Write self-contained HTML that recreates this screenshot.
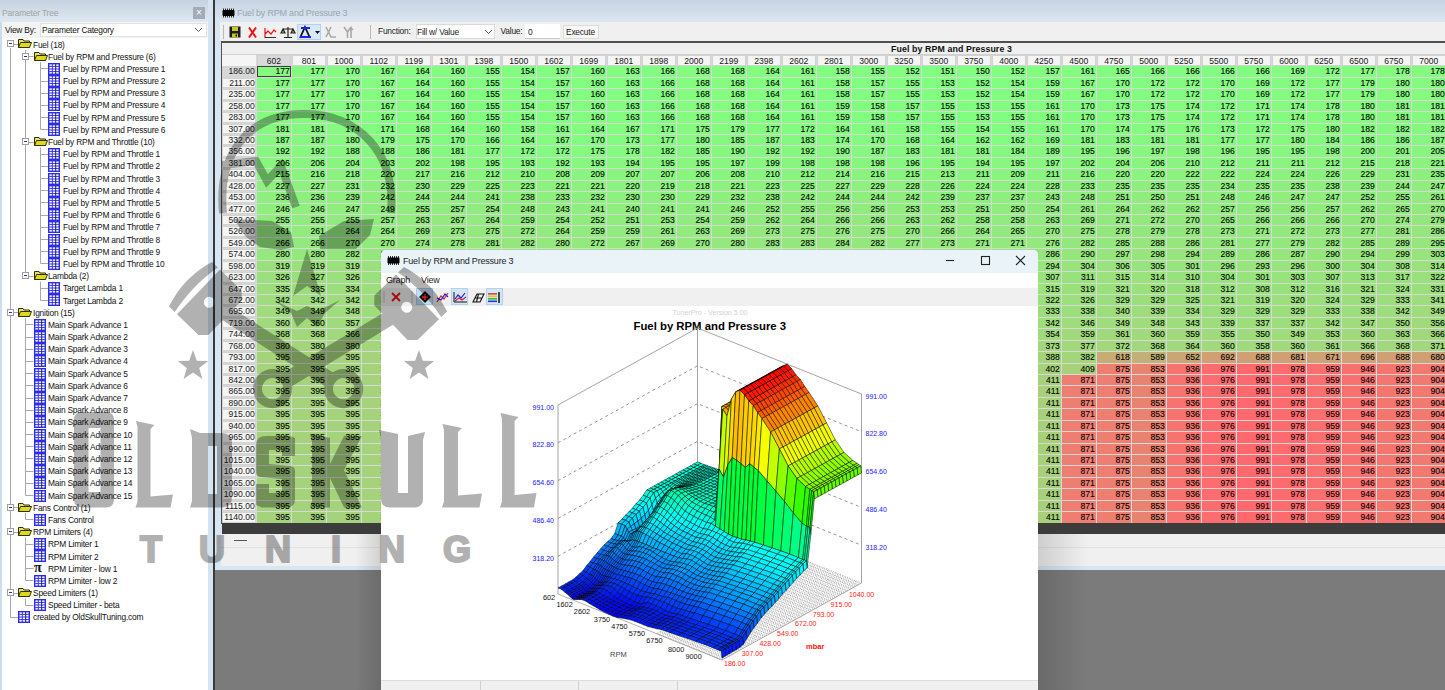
<!DOCTYPE html><html><head><meta charset="utf-8"><style>
*{margin:0;padding:0;box-sizing:border-box}
html,body{width:1445px;height:690px;overflow:hidden;background:#7b7b7b;font-family:"Liberation Sans",sans-serif;position:relative}
.a{position:absolute}
.t{position:absolute;white-space:nowrap;font-size:8.4px;letter-spacing:-0.2px;line-height:12px;color:#111}
#tree .t{height:12px}
.ic{position:absolute;width:11px;height:11px;background:#2c2cff;border:1px solid #2020e0}
.ic i{position:absolute;background:#fff}
.fd{position:absolute;width:13px;height:10px}
.ex{position:absolute;width:7px;height:7px;border:1px solid #a0a0a0;background:#fff}
.ex:after{content:"";position:absolute;left:1px;top:2px;width:3px;height:1px;background:#3030a0}
#tbl .r{position:absolute;left:0;height:11px;white-space:nowrap;font-size:0}
#tbl .r i{display:inline-block;font-style:normal;width:34px;height:100%;margin-right:1px;text-align:right;font-size:8.6px;line-height:11px;color:#000;padding-right:1px;vertical-align:top;-webkit-text-stroke:0.1px #000}
#tbl .h{background:#f5f5f5}

</style></head><body>
<div id="tree" class="a" style="left:0;top:0;width:208px;height:690px;background:#fff">
<div class="a" style="left:0;top:0;width:208px;height:22px;background:linear-gradient(#c6d2e0,#dfe8f2)"></div>
<div class="t" style="left:2px;top:7px;color:#a3a3a3;font-size:8.5px">Parameter Tree</div>
<div class="a" style="left:193px;top:7px;width:12px;height:12px;background:#a3abb6;color:#fff;font-size:10px;line-height:12px;text-align:center">&#215;</div>
<div class="a" style="left:0;top:22px;width:208px;height:16px;background:#f4f4f4"></div>
<div class="t" style="left:5px;top:24px">View By:</div>
<div class="a" style="left:40px;top:23px;width:167px;height:14px;background:#fff;border:1px solid #e2e2e2"></div>
<div class="t" style="left:42px;top:24px">Parameter Category</div>
<svg class="a" style="left:194px;top:27px" width="9" height="6"><path d="M1 1 L4.5 4.5 L8 1" stroke="#555" fill="none"/></svg>
<svg class="a" style="left:0;top:0" width="208" height="690"><g stroke="#a8a8a8" stroke-width="1" fill="none"><path d="M13.5 44.5 H18.5"/><path d="M28.5 56.5 H33.5"/><path d="M40.5 68.5 H48.5"/><path d="M40.5 81.5 H48.5"/><path d="M40.5 93.5 H48.5"/><path d="M40.5 105.5 H48.5"/><path d="M40.5 117.5 H48.5"/><path d="M40.5 129.5 H48.5"/><path d="M28.5 142.5 H33.5"/><path d="M40.5 154.5 H48.5"/><path d="M40.5 166.5 H48.5"/><path d="M40.5 178.5 H48.5"/><path d="M40.5 190.5 H48.5"/><path d="M40.5 202.5 H48.5"/><path d="M40.5 215.5 H48.5"/><path d="M40.5 227.5 H48.5"/><path d="M40.5 239.5 H48.5"/><path d="M40.5 251.5 H48.5"/><path d="M40.5 263.5 H48.5"/><path d="M28.5 276.5 H33.5"/><path d="M40.5 288.5 H48.5"/><path d="M40.5 300.5 H48.5"/><path d="M13.5 312.5 H18.5"/><path d="M25.5 324.5 H33.5"/><path d="M25.5 337.5 H33.5"/><path d="M25.5 349.5 H33.5"/><path d="M25.5 361.5 H33.5"/><path d="M25.5 373.5 H33.5"/><path d="M25.5 385.5 H33.5"/><path d="M25.5 398.5 H33.5"/><path d="M25.5 410.5 H33.5"/><path d="M25.5 422.5 H33.5"/><path d="M25.5 434.5 H33.5"/><path d="M25.5 446.5 H33.5"/><path d="M25.5 458.5 H33.5"/><path d="M25.5 471.5 H33.5"/><path d="M25.5 483.5 H33.5"/><path d="M25.5 495.5 H33.5"/><path d="M13.5 507.5 H18.5"/><path d="M25.5 519.5 H33.5"/><path d="M13.5 532.5 H18.5"/><path d="M25.5 544.5 H33.5"/><path d="M25.5 556.5 H33.5"/><path d="M25.5 568.5 H33.5"/><path d="M25.5 580.5 H33.5"/><path d="M13.5 593.5 H18.5"/><path d="M25.5 605.5 H33.5"/><path d="M10.5 617.5 H18.5"/><path d="M10.5 48.0 V617.5"/><path d="M25.5 50.0 V276.5"/><path d="M25.5 318.2 V495.5"/><path d="M25.5 513.2 V519.5"/><path d="M25.5 537.6 V580.5"/><path d="M25.5 598.5 V605.5"/><path d="M40.5 62.2 V129.5"/><path d="M40.5 147.5 V263.5"/><path d="M40.5 281.6 V300.5"/></g></svg>
<div class="ex" style="left:7px;top:40px"></div>
<svg class="a" style="left:18px;top:38px" width="14" height="11"><path d="M0.5 1.5 H5 L6 3 H11.5 V9.5 H0.5Z" fill="#e8e070" stroke="#303000"/><path d="M2.5 4.5 H13.5 L11.5 9.5 H0.5Z" fill="#e0d820" stroke="#303000"/></svg>
<div class="t" style="left:33.0px;top:38.5px">Fuel (18)</div>
<div class="ex" style="left:22px;top:53px"></div>
<svg class="a" style="left:34px;top:51px" width="14" height="11"><path d="M0.5 1.5 H5 L6 3 H11.5 V9.5 H0.5Z" fill="#e8e070" stroke="#303000"/><path d="M2.5 4.5 H13.5 L11.5 9.5 H0.5Z" fill="#e0d820" stroke="#303000"/></svg>
<div class="t" style="left:48.0px;top:50.7px">Fuel by RPM and Pressure (6)</div>
<svg class="a" style="left:48px;top:63px" width="12" height="12"><rect x="0.7" y="0.7" width="10.6" height="10.6" fill="#fff" stroke="#2a2af0" stroke-width="1.4"/><path d="M1 3.4H11M1 6H11M1 8.6H11M4.3 1V11" stroke="#3434f0" stroke-width="1"/><path d="M7.7 1V11" stroke="#202040" stroke-width="1"/></svg>
<div class="t" style="left:63.0px;top:62.9px">Fuel by RPM and Pressure 1</div>
<svg class="a" style="left:48px;top:75px" width="12" height="12"><rect x="0.7" y="0.7" width="10.6" height="10.6" fill="#fff" stroke="#2a2af0" stroke-width="1.4"/><path d="M1 3.4H11M1 6H11M1 8.6H11M4.3 1V11" stroke="#3434f0" stroke-width="1"/><path d="M7.7 1V11" stroke="#202040" stroke-width="1"/></svg>
<div class="t" style="left:63.0px;top:75.1px">Fuel by RPM and Pressure 2</div>
<svg class="a" style="left:48px;top:87px" width="12" height="12"><rect x="0.7" y="0.7" width="10.6" height="10.6" fill="#fff" stroke="#2a2af0" stroke-width="1.4"/><path d="M1 3.4H11M1 6H11M1 8.6H11M4.3 1V11" stroke="#3434f0" stroke-width="1"/><path d="M7.7 1V11" stroke="#202040" stroke-width="1"/></svg>
<div class="t" style="left:63.0px;top:87.3px">Fuel by RPM and Pressure 3</div>
<svg class="a" style="left:48px;top:99px" width="12" height="12"><rect x="0.7" y="0.7" width="10.6" height="10.6" fill="#fff" stroke="#2a2af0" stroke-width="1.4"/><path d="M1 3.4H11M1 6H11M1 8.6H11M4.3 1V11" stroke="#3434f0" stroke-width="1"/><path d="M7.7 1V11" stroke="#202040" stroke-width="1"/></svg>
<div class="t" style="left:63.0px;top:99.4px">Fuel by RPM and Pressure 4</div>
<svg class="a" style="left:48px;top:112px" width="12" height="12"><rect x="0.7" y="0.7" width="10.6" height="10.6" fill="#fff" stroke="#2a2af0" stroke-width="1.4"/><path d="M1 3.4H11M1 6H11M1 8.6H11M4.3 1V11" stroke="#3434f0" stroke-width="1"/><path d="M7.7 1V11" stroke="#202040" stroke-width="1"/></svg>
<div class="t" style="left:63.0px;top:111.6px">Fuel by RPM and Pressure 5</div>
<svg class="a" style="left:48px;top:124px" width="12" height="12"><rect x="0.7" y="0.7" width="10.6" height="10.6" fill="#fff" stroke="#2a2af0" stroke-width="1.4"/><path d="M1 3.4H11M1 6H11M1 8.6H11M4.3 1V11" stroke="#3434f0" stroke-width="1"/><path d="M7.7 1V11" stroke="#202040" stroke-width="1"/></svg>
<div class="t" style="left:63.0px;top:123.8px">Fuel by RPM and Pressure 6</div>
<div class="ex" style="left:22px;top:138px"></div>
<svg class="a" style="left:34px;top:136px" width="14" height="11"><path d="M0.5 1.5 H5 L6 3 H11.5 V9.5 H0.5Z" fill="#e8e070" stroke="#303000"/><path d="M2.5 4.5 H13.5 L11.5 9.5 H0.5Z" fill="#e0d820" stroke="#303000"/></svg>
<div class="t" style="left:48.0px;top:136.0px">Fuel by RPM and Throttle (10)</div>
<svg class="a" style="left:48px;top:148px" width="12" height="12"><rect x="0.7" y="0.7" width="10.6" height="10.6" fill="#fff" stroke="#2a2af0" stroke-width="1.4"/><path d="M1 3.4H11M1 6H11M1 8.6H11M4.3 1V11" stroke="#3434f0" stroke-width="1"/><path d="M7.7 1V11" stroke="#202040" stroke-width="1"/></svg>
<div class="t" style="left:63.0px;top:148.2px">Fuel by RPM and Throttle 1</div>
<svg class="a" style="left:48px;top:160px" width="12" height="12"><rect x="0.7" y="0.7" width="10.6" height="10.6" fill="#fff" stroke="#2a2af0" stroke-width="1.4"/><path d="M1 3.4H11M1 6H11M1 8.6H11M4.3 1V11" stroke="#3434f0" stroke-width="1"/><path d="M7.7 1V11" stroke="#202040" stroke-width="1"/></svg>
<div class="t" style="left:63.0px;top:160.4px">Fuel by RPM and Throttle 2</div>
<svg class="a" style="left:48px;top:173px" width="12" height="12"><rect x="0.7" y="0.7" width="10.6" height="10.6" fill="#fff" stroke="#2a2af0" stroke-width="1.4"/><path d="M1 3.4H11M1 6H11M1 8.6H11M4.3 1V11" stroke="#3434f0" stroke-width="1"/><path d="M7.7 1V11" stroke="#202040" stroke-width="1"/></svg>
<div class="t" style="left:63.0px;top:172.6px">Fuel by RPM and Throttle 3</div>
<svg class="a" style="left:48px;top:185px" width="12" height="12"><rect x="0.7" y="0.7" width="10.6" height="10.6" fill="#fff" stroke="#2a2af0" stroke-width="1.4"/><path d="M1 3.4H11M1 6H11M1 8.6H11M4.3 1V11" stroke="#3434f0" stroke-width="1"/><path d="M7.7 1V11" stroke="#202040" stroke-width="1"/></svg>
<div class="t" style="left:63.0px;top:184.8px">Fuel by RPM and Throttle 4</div>
<svg class="a" style="left:48px;top:197px" width="12" height="12"><rect x="0.7" y="0.7" width="10.6" height="10.6" fill="#fff" stroke="#2a2af0" stroke-width="1.4"/><path d="M1 3.4H11M1 6H11M1 8.6H11M4.3 1V11" stroke="#3434f0" stroke-width="1"/><path d="M7.7 1V11" stroke="#202040" stroke-width="1"/></svg>
<div class="t" style="left:63.0px;top:197.0px">Fuel by RPM and Throttle 5</div>
<svg class="a" style="left:48px;top:209px" width="12" height="12"><rect x="0.7" y="0.7" width="10.6" height="10.6" fill="#fff" stroke="#2a2af0" stroke-width="1.4"/><path d="M1 3.4H11M1 6H11M1 8.6H11M4.3 1V11" stroke="#3434f0" stroke-width="1"/><path d="M7.7 1V11" stroke="#202040" stroke-width="1"/></svg>
<div class="t" style="left:63.0px;top:209.2px">Fuel by RPM and Throttle 6</div>
<svg class="a" style="left:48px;top:221px" width="12" height="12"><rect x="0.7" y="0.7" width="10.6" height="10.6" fill="#fff" stroke="#2a2af0" stroke-width="1.4"/><path d="M1 3.4H11M1 6H11M1 8.6H11M4.3 1V11" stroke="#3434f0" stroke-width="1"/><path d="M7.7 1V11" stroke="#202040" stroke-width="1"/></svg>
<div class="t" style="left:63.0px;top:221.3px">Fuel by RPM and Throttle 7</div>
<svg class="a" style="left:48px;top:234px" width="12" height="12"><rect x="0.7" y="0.7" width="10.6" height="10.6" fill="#fff" stroke="#2a2af0" stroke-width="1.4"/><path d="M1 3.4H11M1 6H11M1 8.6H11M4.3 1V11" stroke="#3434f0" stroke-width="1"/><path d="M7.7 1V11" stroke="#202040" stroke-width="1"/></svg>
<div class="t" style="left:63.0px;top:233.5px">Fuel by RPM and Throttle 8</div>
<svg class="a" style="left:48px;top:246px" width="12" height="12"><rect x="0.7" y="0.7" width="10.6" height="10.6" fill="#fff" stroke="#2a2af0" stroke-width="1.4"/><path d="M1 3.4H11M1 6H11M1 8.6H11M4.3 1V11" stroke="#3434f0" stroke-width="1"/><path d="M7.7 1V11" stroke="#202040" stroke-width="1"/></svg>
<div class="t" style="left:63.0px;top:245.7px">Fuel by RPM and Throttle 9</div>
<svg class="a" style="left:48px;top:258px" width="12" height="12"><rect x="0.7" y="0.7" width="10.6" height="10.6" fill="#fff" stroke="#2a2af0" stroke-width="1.4"/><path d="M1 3.4H11M1 6H11M1 8.6H11M4.3 1V11" stroke="#3434f0" stroke-width="1"/><path d="M7.7 1V11" stroke="#202040" stroke-width="1"/></svg>
<div class="t" style="left:63.0px;top:257.9px">Fuel by RPM and Throttle 10</div>
<div class="ex" style="left:22px;top:272px"></div>
<svg class="a" style="left:34px;top:270px" width="14" height="11"><path d="M0.5 1.5 H5 L6 3 H11.5 V9.5 H0.5Z" fill="#e8e070" stroke="#303000"/><path d="M2.5 4.5 H13.5 L11.5 9.5 H0.5Z" fill="#e0d820" stroke="#303000"/></svg>
<div class="t" style="left:48.0px;top:270.1px">Lambda (2)</div>
<svg class="a" style="left:48px;top:282px" width="12" height="12"><rect x="0.7" y="0.7" width="10.6" height="10.6" fill="#fff" stroke="#2a2af0" stroke-width="1.4"/><path d="M1 3.4H11M1 6H11M1 8.6H11M4.3 1V11" stroke="#3434f0" stroke-width="1"/><path d="M7.7 1V11" stroke="#202040" stroke-width="1"/></svg>
<div class="t" style="left:63.0px;top:282.3px">Target Lambda 1</div>
<svg class="a" style="left:48px;top:294px" width="12" height="12"><rect x="0.7" y="0.7" width="10.6" height="10.6" fill="#fff" stroke="#2a2af0" stroke-width="1.4"/><path d="M1 3.4H11M1 6H11M1 8.6H11M4.3 1V11" stroke="#3434f0" stroke-width="1"/><path d="M7.7 1V11" stroke="#202040" stroke-width="1"/></svg>
<div class="t" style="left:63.0px;top:294.5px">Target Lambda 2</div>
<div class="ex" style="left:7px;top:309px"></div>
<svg class="a" style="left:18px;top:307px" width="14" height="11"><path d="M0.5 1.5 H5 L6 3 H11.5 V9.5 H0.5Z" fill="#e8e070" stroke="#303000"/><path d="M2.5 4.5 H13.5 L11.5 9.5 H0.5Z" fill="#e0d820" stroke="#303000"/></svg>
<div class="t" style="left:33.0px;top:306.7px">Ignition (15)</div>
<svg class="a" style="left:34px;top:319px" width="12" height="12"><rect x="0.7" y="0.7" width="10.6" height="10.6" fill="#fff" stroke="#2a2af0" stroke-width="1.4"/><path d="M1 3.4H11M1 6H11M1 8.6H11M4.3 1V11" stroke="#3434f0" stroke-width="1"/><path d="M7.7 1V11" stroke="#202040" stroke-width="1"/></svg>
<div class="t" style="left:48.0px;top:318.9px">Main Spark Advance 1</div>
<svg class="a" style="left:34px;top:331px" width="12" height="12"><rect x="0.7" y="0.7" width="10.6" height="10.6" fill="#fff" stroke="#2a2af0" stroke-width="1.4"/><path d="M1 3.4H11M1 6H11M1 8.6H11M4.3 1V11" stroke="#3434f0" stroke-width="1"/><path d="M7.7 1V11" stroke="#202040" stroke-width="1"/></svg>
<div class="t" style="left:48.0px;top:331.1px">Main Spark Advance 2</div>
<svg class="a" style="left:34px;top:343px" width="12" height="12"><rect x="0.7" y="0.7" width="10.6" height="10.6" fill="#fff" stroke="#2a2af0" stroke-width="1.4"/><path d="M1 3.4H11M1 6H11M1 8.6H11M4.3 1V11" stroke="#3434f0" stroke-width="1"/><path d="M7.7 1V11" stroke="#202040" stroke-width="1"/></svg>
<div class="t" style="left:48.0px;top:343.2px">Main Spark Advance 3</div>
<svg class="a" style="left:34px;top:355px" width="12" height="12"><rect x="0.7" y="0.7" width="10.6" height="10.6" fill="#fff" stroke="#2a2af0" stroke-width="1.4"/><path d="M1 3.4H11M1 6H11M1 8.6H11M4.3 1V11" stroke="#3434f0" stroke-width="1"/><path d="M7.7 1V11" stroke="#202040" stroke-width="1"/></svg>
<div class="t" style="left:48.0px;top:355.4px">Main Spark Advance 4</div>
<svg class="a" style="left:34px;top:368px" width="12" height="12"><rect x="0.7" y="0.7" width="10.6" height="10.6" fill="#fff" stroke="#2a2af0" stroke-width="1.4"/><path d="M1 3.4H11M1 6H11M1 8.6H11M4.3 1V11" stroke="#3434f0" stroke-width="1"/><path d="M7.7 1V11" stroke="#202040" stroke-width="1"/></svg>
<div class="t" style="left:48.0px;top:367.6px">Main Spark Advance 5</div>
<svg class="a" style="left:34px;top:380px" width="12" height="12"><rect x="0.7" y="0.7" width="10.6" height="10.6" fill="#fff" stroke="#2a2af0" stroke-width="1.4"/><path d="M1 3.4H11M1 6H11M1 8.6H11M4.3 1V11" stroke="#3434f0" stroke-width="1"/><path d="M7.7 1V11" stroke="#202040" stroke-width="1"/></svg>
<div class="t" style="left:48.0px;top:379.8px">Main Spark Advance 6</div>
<svg class="a" style="left:34px;top:392px" width="12" height="12"><rect x="0.7" y="0.7" width="10.6" height="10.6" fill="#fff" stroke="#2a2af0" stroke-width="1.4"/><path d="M1 3.4H11M1 6H11M1 8.6H11M4.3 1V11" stroke="#3434f0" stroke-width="1"/><path d="M7.7 1V11" stroke="#202040" stroke-width="1"/></svg>
<div class="t" style="left:48.0px;top:392.0px">Main Spark Advance 7</div>
<svg class="a" style="left:34px;top:404px" width="12" height="12"><rect x="0.7" y="0.7" width="10.6" height="10.6" fill="#fff" stroke="#2a2af0" stroke-width="1.4"/><path d="M1 3.4H11M1 6H11M1 8.6H11M4.3 1V11" stroke="#3434f0" stroke-width="1"/><path d="M7.7 1V11" stroke="#202040" stroke-width="1"/></svg>
<div class="t" style="left:48.0px;top:404.2px">Main Spark Advance 8</div>
<svg class="a" style="left:34px;top:416px" width="12" height="12"><rect x="0.7" y="0.7" width="10.6" height="10.6" fill="#fff" stroke="#2a2af0" stroke-width="1.4"/><path d="M1 3.4H11M1 6H11M1 8.6H11M4.3 1V11" stroke="#3434f0" stroke-width="1"/><path d="M7.7 1V11" stroke="#202040" stroke-width="1"/></svg>
<div class="t" style="left:48.0px;top:416.4px">Main Spark Advance 9</div>
<svg class="a" style="left:34px;top:429px" width="12" height="12"><rect x="0.7" y="0.7" width="10.6" height="10.6" fill="#fff" stroke="#2a2af0" stroke-width="1.4"/><path d="M1 3.4H11M1 6H11M1 8.6H11M4.3 1V11" stroke="#3434f0" stroke-width="1"/><path d="M7.7 1V11" stroke="#202040" stroke-width="1"/></svg>
<div class="t" style="left:48.0px;top:428.6px">Main Spark Advance 10</div>
<svg class="a" style="left:34px;top:441px" width="12" height="12"><rect x="0.7" y="0.7" width="10.6" height="10.6" fill="#fff" stroke="#2a2af0" stroke-width="1.4"/><path d="M1 3.4H11M1 6H11M1 8.6H11M4.3 1V11" stroke="#3434f0" stroke-width="1"/><path d="M7.7 1V11" stroke="#202040" stroke-width="1"/></svg>
<div class="t" style="left:48.0px;top:440.8px">Main Spark Advance 11</div>
<svg class="a" style="left:34px;top:453px" width="12" height="12"><rect x="0.7" y="0.7" width="10.6" height="10.6" fill="#fff" stroke="#2a2af0" stroke-width="1.4"/><path d="M1 3.4H11M1 6H11M1 8.6H11M4.3 1V11" stroke="#3434f0" stroke-width="1"/><path d="M7.7 1V11" stroke="#202040" stroke-width="1"/></svg>
<div class="t" style="left:48.0px;top:453.0px">Main Spark Advance 12</div>
<svg class="a" style="left:34px;top:465px" width="12" height="12"><rect x="0.7" y="0.7" width="10.6" height="10.6" fill="#fff" stroke="#2a2af0" stroke-width="1.4"/><path d="M1 3.4H11M1 6H11M1 8.6H11M4.3 1V11" stroke="#3434f0" stroke-width="1"/><path d="M7.7 1V11" stroke="#202040" stroke-width="1"/></svg>
<div class="t" style="left:48.0px;top:465.1px">Main Spark Advance 13</div>
<svg class="a" style="left:34px;top:477px" width="12" height="12"><rect x="0.7" y="0.7" width="10.6" height="10.6" fill="#fff" stroke="#2a2af0" stroke-width="1.4"/><path d="M1 3.4H11M1 6H11M1 8.6H11M4.3 1V11" stroke="#3434f0" stroke-width="1"/><path d="M7.7 1V11" stroke="#202040" stroke-width="1"/></svg>
<div class="t" style="left:48.0px;top:477.3px">Main Spark Advance 14</div>
<svg class="a" style="left:34px;top:490px" width="12" height="12"><rect x="0.7" y="0.7" width="10.6" height="10.6" fill="#fff" stroke="#2a2af0" stroke-width="1.4"/><path d="M1 3.4H11M1 6H11M1 8.6H11M4.3 1V11" stroke="#3434f0" stroke-width="1"/><path d="M7.7 1V11" stroke="#202040" stroke-width="1"/></svg>
<div class="t" style="left:48.0px;top:489.5px">Main Spark Advance 15</div>
<div class="ex" style="left:7px;top:504px"></div>
<svg class="a" style="left:18px;top:502px" width="14" height="11"><path d="M0.5 1.5 H5 L6 3 H11.5 V9.5 H0.5Z" fill="#e8e070" stroke="#303000"/><path d="M2.5 4.5 H13.5 L11.5 9.5 H0.5Z" fill="#e0d820" stroke="#303000"/></svg>
<div class="t" style="left:33.0px;top:501.7px">Fans Control (1)</div>
<svg class="a" style="left:34px;top:514px" width="12" height="12"><rect x="0.7" y="0.7" width="10.6" height="10.6" fill="#fff" stroke="#2a2af0" stroke-width="1.4"/><path d="M1 3.4H11M1 6H11M1 8.6H11M4.3 1V11" stroke="#3434f0" stroke-width="1"/><path d="M7.7 1V11" stroke="#202040" stroke-width="1"/></svg>
<div class="t" style="left:48.0px;top:513.9px">Fans Control</div>
<div class="ex" style="left:7px;top:528px"></div>
<svg class="a" style="left:18px;top:526px" width="14" height="11"><path d="M0.5 1.5 H5 L6 3 H11.5 V9.5 H0.5Z" fill="#e8e070" stroke="#303000"/><path d="M2.5 4.5 H13.5 L11.5 9.5 H0.5Z" fill="#e0d820" stroke="#303000"/></svg>
<div class="t" style="left:33.0px;top:526.1px">RPM Limiters (4)</div>
<svg class="a" style="left:34px;top:538px" width="12" height="12"><rect x="0.7" y="0.7" width="10.6" height="10.6" fill="#fff" stroke="#2a2af0" stroke-width="1.4"/><path d="M1 3.4H11M1 6H11M1 8.6H11M4.3 1V11" stroke="#3434f0" stroke-width="1"/><path d="M7.7 1V11" stroke="#202040" stroke-width="1"/></svg>
<div class="t" style="left:48.0px;top:538.3px">RPM Limiter 1</div>
<svg class="a" style="left:34px;top:550px" width="12" height="12"><rect x="0.7" y="0.7" width="10.6" height="10.6" fill="#fff" stroke="#2a2af0" stroke-width="1.4"/><path d="M1 3.4H11M1 6H11M1 8.6H11M4.3 1V11" stroke="#3434f0" stroke-width="1"/><path d="M7.7 1V11" stroke="#202040" stroke-width="1"/></svg>
<div class="t" style="left:48.0px;top:550.5px">RPM Limiter 2</div>
<div class="t" style="left:34px;top:562px;font-size:14px;font-family:'Liberation Serif';font-weight:bold;line-height:12px">&#960;</div>
<div class="t" style="left:48.0px;top:562.7px">RPM Limiter - low 1</div>
<svg class="a" style="left:34px;top:575px" width="12" height="12"><rect x="0.7" y="0.7" width="10.6" height="10.6" fill="#fff" stroke="#2a2af0" stroke-width="1.4"/><path d="M1 3.4H11M1 6H11M1 8.6H11M4.3 1V11" stroke="#3434f0" stroke-width="1"/><path d="M7.7 1V11" stroke="#202040" stroke-width="1"/></svg>
<div class="t" style="left:48.0px;top:574.9px">RPM Limiter - low 2</div>
<div class="ex" style="left:7px;top:589px"></div>
<svg class="a" style="left:18px;top:587px" width="14" height="11"><path d="M0.5 1.5 H5 L6 3 H11.5 V9.5 H0.5Z" fill="#e8e070" stroke="#303000"/><path d="M2.5 4.5 H13.5 L11.5 9.5 H0.5Z" fill="#e0d820" stroke="#303000"/></svg>
<div class="t" style="left:33.0px;top:587.0px">Speed Limiters (1)</div>
<svg class="a" style="left:34px;top:599px" width="12" height="12"><rect x="0.7" y="0.7" width="10.6" height="10.6" fill="#fff" stroke="#2a2af0" stroke-width="1.4"/><path d="M1 3.4H11M1 6H11M1 8.6H11M4.3 1V11" stroke="#3434f0" stroke-width="1"/><path d="M7.7 1V11" stroke="#202040" stroke-width="1"/></svg>
<div class="t" style="left:48.0px;top:599.2px">Speed Limiter - beta</div>
<svg class="a" style="left:18px;top:611px" width="12" height="12"><rect x="0.7" y="0.7" width="10.6" height="10.6" fill="#fff" stroke="#2a2af0" stroke-width="1.4"/><path d="M1 3.4H11M1 6H11M1 8.6H11M4.3 1V11" stroke="#3434f0" stroke-width="1"/><path d="M7.7 1V11" stroke="#202040" stroke-width="1"/></svg>
<div class="t" style="left:33.0px;top:611.4px">created by OldSkullTuning.com</div>
</div>
<div class="a" style="left:0;top:22px;width:1.6px;height:668px;background:#cddcea"></div>
<div class="a" style="left:208px;top:0;width:5px;height:690px;background:#d6e3f0"></div>
<div class="a" style="left:213px;top:0;width:1.6px;height:690px;background:#3a3a3a"></div>
<div class="a" style="left:214.6px;top:0;width:1230.4px;height:570px;background:#d9e6f2">
<div class="a" style="left:0;top:0;width:100%;height:22px;background:linear-gradient(#c6d3e1,#dbe6f1)"></div>
</div>
<svg class="a" style="left:222px;top:8px" width="13" height="10"><rect x="0.5" y="2" width="12" height="6" rx="1" fill="#000"/><path d="M1.5 0.5V9.5M3.5 0.5V9.5M5.5 0.5V9.5M7.5 0.5V9.5M9.5 0.5V9.5M11.5 0.5V9.5" stroke="#000" stroke-width="0.8"/></svg>
<div class="t" style="left:237px;top:7px;color:#9ba5b0;font-size:9px">Fuel by RPM and Pressure 3</div>
<div class="a" style="left:220px;top:22px;width:1225px;height:19px;background:#f0f0f0"></div>
<div class="a" style="left:223px;top:25px;width:1px;height:14px;background:#b8b8b8"></div>
<div class="a" style="left:370px;top:25px;width:1px;height:14px;background:#b8b8b8"></div>
<div class="t" style="left:378px;top:25px;color:#222">Function:</div>
<div class="a" style="left:415.5px;top:24px;width:79px;height:15px;background:#fff;border:1px solid #dadada"></div>
<div class="t" style="left:417px;top:25.5px;color:#222">Fill w/ Value</div>
<svg class="a" style="left:484px;top:29px" width="9" height="6"><path d="M1 1 L4.5 4.5 L8 1" stroke="#555" fill="none"/></svg>
<div class="t" style="left:500.5px;top:25px;color:#222">Value:</div>
<div class="a" style="left:524.5px;top:24px;width:35px;height:15px;background:#fff;border-bottom:1px solid #c8c8c8"></div>
<div class="t" style="left:528px;top:25.5px;color:#222">0</div>
<div class="a" style="left:562.5px;top:25px;width:36px;height:14px;background:#f8f8f8;border:1px solid #dcdcdc"></div>
<div class="t" style="left:566px;top:26px;color:#222">Execute</div>
<svg class="a" style="left:228px;top:25px" width="125" height="15"><rect x="1.5" y="1.5" width="11" height="11" fill="#1c1c1c"/><rect x="4" y="2" width="6" height="4" fill="#c8c820"/><rect x="4" y="8.5" width="6" height="4" fill="#c8c820"/><rect x="7.5" y="9.5" width="1.5" height="2" fill="#111"/><path d="M21 2.5 L28 12.5 M28 2.5 L21 12.5" stroke="#f01010" stroke-width="2"/><path d="M37 3 V12.5 H48 M37 9 L40 6 L43 9 L46 5 L48 7" stroke="#e81010" stroke-width="1.2" fill="none"/><path d="M37 12.5 H48" stroke="#333" stroke-width="1"/><path d="M60 2 V12 M55 4 H65 M53 8 L55 4 L57 8Z M63 8 L65 4 L67 8Z M56 12.5 H64" stroke="#222" stroke-width="1.2" fill="#c8c020"/></svg>
<div class="a" style="left:297px;top:24px;width:24px;height:16px;background:#d7e8f8;border:1px solid #b0d2f0"></div>
<svg class="a" style="left:298px;top:25px" width="60" height="15"><path d="M2 13 L7 2 L12 13" stroke="#111" stroke-width="1.8" fill="none"/><rect x="3" y="2" width="9" height="2" fill="#2020f0"/><rect x="2" y="11" width="11" height="2" fill="#2020f0"/><path d="M17 6 H22 L19.5 9Z" fill="#111"/><path d="M28 2 L33 12 H38 M28 12 L33 2" stroke="#a8a8a8" stroke-width="1.6" fill="none"/><path d="M46 2 L49.5 7 L53 2 M49.5 7 V13 M53 13 V3 L51 5 M53 3 L55 5" stroke="#a8a8a8" stroke-width="1.6" fill="none"/></svg>
<div class="a" style="left:220.5px;top:40.8px;width:1225px;height:2px;background:#505050"></div>
<div class="a" style="left:220.5px;top:40.8px;width:1.2px;height:483px;background:#505050"></div>
<div class="a" style="left:221.5px;top:42.8px;width:1224px;height:11px;background:#efefef"></div>
<div class="a" style="left:221.5px;top:53.5px;width:1224px;height:1px;background:#d0d0d0"></div>
<div class="t" style="left:891px;top:42.5px;font-weight:bold;font-size:8.8px;letter-spacing:0.1px;line-height:12px;color:#111">Fuel by RPM and Pressure 3</div>
<div class="a" style="left:221.5px;top:54.5px;width:1224px;height:469px;background:#d8d8d8"></div>
<div class="a" id="tbl" style="left:0;top:0"><div class="r" style="left:221.8px;top:55px;height:11px"><i class="h" style="width:34px;background:#f5f5f5"></i><i style="background:#dadada;text-align:center;padding:0;font-size:8.6px;line-height:12.5px;-webkit-text-stroke:0;color:#1a1a1a;box-shadow:inset 0 0 0 1px #d2d2d2">602</i><i style="background:#f5f5f5;text-align:center;padding:0;font-size:8.6px;line-height:12.5px;-webkit-text-stroke:0;color:#1a1a1a;box-shadow:inset 0 0 0 1px #d2d2d2">801</i><i style="background:#f5f5f5;text-align:center;padding:0;font-size:8.6px;line-height:12.5px;-webkit-text-stroke:0;color:#1a1a1a;box-shadow:inset 0 0 0 1px #d2d2d2">1000</i><i style="background:#f5f5f5;text-align:center;padding:0;font-size:8.6px;line-height:12.5px;-webkit-text-stroke:0;color:#1a1a1a;box-shadow:inset 0 0 0 1px #d2d2d2">1102</i><i style="background:#f5f5f5;text-align:center;padding:0;font-size:8.6px;line-height:12.5px;-webkit-text-stroke:0;color:#1a1a1a;box-shadow:inset 0 0 0 1px #d2d2d2">1199</i><i style="background:#f5f5f5;text-align:center;padding:0;font-size:8.6px;line-height:12.5px;-webkit-text-stroke:0;color:#1a1a1a;box-shadow:inset 0 0 0 1px #d2d2d2">1301</i><i style="background:#f5f5f5;text-align:center;padding:0;font-size:8.6px;line-height:12.5px;-webkit-text-stroke:0;color:#1a1a1a;box-shadow:inset 0 0 0 1px #d2d2d2">1398</i><i style="background:#f5f5f5;text-align:center;padding:0;font-size:8.6px;line-height:12.5px;-webkit-text-stroke:0;color:#1a1a1a;box-shadow:inset 0 0 0 1px #d2d2d2">1500</i><i style="background:#f5f5f5;text-align:center;padding:0;font-size:8.6px;line-height:12.5px;-webkit-text-stroke:0;color:#1a1a1a;box-shadow:inset 0 0 0 1px #d2d2d2">1602</i><i style="background:#f5f5f5;text-align:center;padding:0;font-size:8.6px;line-height:12.5px;-webkit-text-stroke:0;color:#1a1a1a;box-shadow:inset 0 0 0 1px #d2d2d2">1699</i><i style="background:#f5f5f5;text-align:center;padding:0;font-size:8.6px;line-height:12.5px;-webkit-text-stroke:0;color:#1a1a1a;box-shadow:inset 0 0 0 1px #d2d2d2">1801</i><i style="background:#f5f5f5;text-align:center;padding:0;font-size:8.6px;line-height:12.5px;-webkit-text-stroke:0;color:#1a1a1a;box-shadow:inset 0 0 0 1px #d2d2d2">1898</i><i style="background:#f5f5f5;text-align:center;padding:0;font-size:8.6px;line-height:12.5px;-webkit-text-stroke:0;color:#1a1a1a;box-shadow:inset 0 0 0 1px #d2d2d2">2000</i><i style="background:#f5f5f5;text-align:center;padding:0;font-size:8.6px;line-height:12.5px;-webkit-text-stroke:0;color:#1a1a1a;box-shadow:inset 0 0 0 1px #d2d2d2">2199</i><i style="background:#f5f5f5;text-align:center;padding:0;font-size:8.6px;line-height:12.5px;-webkit-text-stroke:0;color:#1a1a1a;box-shadow:inset 0 0 0 1px #d2d2d2">2398</i><i style="background:#f5f5f5;text-align:center;padding:0;font-size:8.6px;line-height:12.5px;-webkit-text-stroke:0;color:#1a1a1a;box-shadow:inset 0 0 0 1px #d2d2d2">2602</i><i style="background:#f5f5f5;text-align:center;padding:0;font-size:8.6px;line-height:12.5px;-webkit-text-stroke:0;color:#1a1a1a;box-shadow:inset 0 0 0 1px #d2d2d2">2801</i><i style="background:#f5f5f5;text-align:center;padding:0;font-size:8.6px;line-height:12.5px;-webkit-text-stroke:0;color:#1a1a1a;box-shadow:inset 0 0 0 1px #d2d2d2">3000</i><i style="background:#f5f5f5;text-align:center;padding:0;font-size:8.6px;line-height:12.5px;-webkit-text-stroke:0;color:#1a1a1a;box-shadow:inset 0 0 0 1px #d2d2d2">3250</i><i style="background:#f5f5f5;text-align:center;padding:0;font-size:8.6px;line-height:12.5px;-webkit-text-stroke:0;color:#1a1a1a;box-shadow:inset 0 0 0 1px #d2d2d2">3500</i><i style="background:#f5f5f5;text-align:center;padding:0;font-size:8.6px;line-height:12.5px;-webkit-text-stroke:0;color:#1a1a1a;box-shadow:inset 0 0 0 1px #d2d2d2">3750</i><i style="background:#f5f5f5;text-align:center;padding:0;font-size:8.6px;line-height:12.5px;-webkit-text-stroke:0;color:#1a1a1a;box-shadow:inset 0 0 0 1px #d2d2d2">4000</i><i style="background:#f5f5f5;text-align:center;padding:0;font-size:8.6px;line-height:12.5px;-webkit-text-stroke:0;color:#1a1a1a;box-shadow:inset 0 0 0 1px #d2d2d2">4250</i><i style="background:#f5f5f5;text-align:center;padding:0;font-size:8.6px;line-height:12.5px;-webkit-text-stroke:0;color:#1a1a1a;box-shadow:inset 0 0 0 1px #d2d2d2">4500</i><i style="background:#f5f5f5;text-align:center;padding:0;font-size:8.6px;line-height:12.5px;-webkit-text-stroke:0;color:#1a1a1a;box-shadow:inset 0 0 0 1px #d2d2d2">4750</i><i style="background:#f5f5f5;text-align:center;padding:0;font-size:8.6px;line-height:12.5px;-webkit-text-stroke:0;color:#1a1a1a;box-shadow:inset 0 0 0 1px #d2d2d2">5000</i><i style="background:#f5f5f5;text-align:center;padding:0;font-size:8.6px;line-height:12.5px;-webkit-text-stroke:0;color:#1a1a1a;box-shadow:inset 0 0 0 1px #d2d2d2">5250</i><i style="background:#f5f5f5;text-align:center;padding:0;font-size:8.6px;line-height:12.5px;-webkit-text-stroke:0;color:#1a1a1a;box-shadow:inset 0 0 0 1px #d2d2d2">5500</i><i style="background:#f5f5f5;text-align:center;padding:0;font-size:8.6px;line-height:12.5px;-webkit-text-stroke:0;color:#1a1a1a;box-shadow:inset 0 0 0 1px #d2d2d2">5750</i><i style="background:#f5f5f5;text-align:center;padding:0;font-size:8.6px;line-height:12.5px;-webkit-text-stroke:0;color:#1a1a1a;box-shadow:inset 0 0 0 1px #d2d2d2">6000</i><i style="background:#f5f5f5;text-align:center;padding:0;font-size:8.6px;line-height:12.5px;-webkit-text-stroke:0;color:#1a1a1a;box-shadow:inset 0 0 0 1px #d2d2d2">6250</i><i style="background:#f5f5f5;text-align:center;padding:0;font-size:8.6px;line-height:12.5px;-webkit-text-stroke:0;color:#1a1a1a;box-shadow:inset 0 0 0 1px #d2d2d2">6500</i><i style="background:#f5f5f5;text-align:center;padding:0;font-size:8.6px;line-height:12.5px;-webkit-text-stroke:0;color:#1a1a1a;box-shadow:inset 0 0 0 1px #d2d2d2">6750</i><i style="background:#f5f5f5;text-align:center;padding:0;font-size:8.6px;line-height:12.5px;-webkit-text-stroke:0;color:#1a1a1a;box-shadow:inset 0 0 0 1px #d2d2d2">7000</i></div>
<div class="r" style="left:221.8px;top:66px;height:11px"><i style="background:#d8d8d8;-webkit-text-stroke:0;color:#1a1a1a;box-shadow:inset 0 0 0 1px #d2d2d2">186.00</i><i style="background:#84fa7f;outline:1.2px solid #404040;outline-offset:-1.2px">177</i><i style="background:#84fa7f">177</i><i style="background:#83fb80">170</i><i style="background:#83fc80">167</i><i style="background:#82fd80">164</i><i style="background:#82fd80">160</i><i style="background:#81fe80">155</i><i style="background:#81fe80">154</i><i style="background:#81fe80">157</i><i style="background:#82fd80">160</i><i style="background:#82fd80">163</i><i style="background:#82fc80">166</i><i style="background:#83fc80">168</i><i style="background:#83fc80">168</i><i style="background:#82fd80">164</i><i style="background:#82fd80">161</i><i style="background:#81fe80">158</i><i style="background:#81fe80">155</i><i style="background:#80ff80">152</i><i style="background:#80ff80">151</i><i style="background:#80ff80">150</i><i style="background:#80ff80">152</i><i style="background:#81fe80">157</i><i style="background:#82fd80">161</i><i style="background:#82fc80">165</i><i style="background:#82fc80">166</i><i style="background:#82fc80">166</i><i style="background:#82fc80">166</i><i style="background:#82fc80">166</i><i style="background:#83fc80">169</i><i style="background:#83fb80">172</i><i style="background:#84fa7f">177</i><i style="background:#84fa7f">178</i><i style="background:#84fa7f">178</i></div>
<div class="r" style="left:221.8px;top:78px;height:10px"><i style="background:#f5f5f5;-webkit-text-stroke:0;color:#1a1a1a;box-shadow:inset 0 0 0 1px #d2d2d2">211.00</i><i style="background:#84fa7f">177</i><i style="background:#84fa7f">177</i><i style="background:#83fb80">170</i><i style="background:#83fc80">167</i><i style="background:#82fd80">164</i><i style="background:#82fd80">160</i><i style="background:#81fe80">155</i><i style="background:#81fe80">154</i><i style="background:#81fe80">157</i><i style="background:#82fd80">160</i><i style="background:#82fd80">163</i><i style="background:#82fc80">166</i><i style="background:#83fc80">168</i><i style="background:#83fc80">168</i><i style="background:#82fd80">164</i><i style="background:#82fd80">161</i><i style="background:#81fe80">158</i><i style="background:#81fe80">157</i><i style="background:#81fe80">155</i><i style="background:#80fe80">153</i><i style="background:#80ff80">152</i><i style="background:#81fe80">154</i><i style="background:#81fd80">159</i><i style="background:#83fc80">167</i><i style="background:#83fb80">170</i><i style="background:#83fb80">172</i><i style="background:#83fb80">172</i><i style="background:#83fb80">170</i><i style="background:#83fc80">169</i><i style="background:#83fb80">172</i><i style="background:#84fa7f">177</i><i style="background:#84fa7f">179</i><i style="background:#85fa7f">180</i><i style="background:#85fa7f">180</i></div>
<div class="r" style="left:221.8px;top:89px;height:11px"><i style="background:#f5f5f5;-webkit-text-stroke:0;color:#1a1a1a;box-shadow:inset 0 0 0 1px #d2d2d2">235.00</i><i style="background:#84fa7f">177</i><i style="background:#84fa7f">177</i><i style="background:#83fb80">170</i><i style="background:#83fc80">167</i><i style="background:#82fd80">164</i><i style="background:#82fd80">160</i><i style="background:#81fe80">155</i><i style="background:#81fe80">154</i><i style="background:#81fe80">157</i><i style="background:#82fd80">160</i><i style="background:#82fd80">163</i><i style="background:#82fc80">166</i><i style="background:#83fc80">168</i><i style="background:#83fc80">168</i><i style="background:#82fd80">164</i><i style="background:#82fd80">161</i><i style="background:#81fe80">158</i><i style="background:#81fe80">157</i><i style="background:#81fe80">155</i><i style="background:#80fe80">153</i><i style="background:#80ff80">152</i><i style="background:#81fe80">154</i><i style="background:#81fd80">159</i><i style="background:#83fc80">167</i><i style="background:#83fb80">170</i><i style="background:#83fb80">172</i><i style="background:#83fb80">172</i><i style="background:#83fb80">170</i><i style="background:#83fc80">169</i><i style="background:#83fb80">172</i><i style="background:#84fa7f">177</i><i style="background:#84fa7f">179</i><i style="background:#85fa7f">180</i><i style="background:#85fa7f">180</i></div>
<div class="r" style="left:221.8px;top:101px;height:10px"><i style="background:#f5f5f5;-webkit-text-stroke:0;color:#1a1a1a;box-shadow:inset 0 0 0 1px #d2d2d2">258.00</i><i style="background:#84fa7f">177</i><i style="background:#84fa7f">177</i><i style="background:#83fb80">170</i><i style="background:#83fc80">167</i><i style="background:#82fd80">164</i><i style="background:#82fd80">160</i><i style="background:#81fe80">155</i><i style="background:#81fe80">154</i><i style="background:#81fe80">157</i><i style="background:#82fd80">160</i><i style="background:#82fd80">163</i><i style="background:#82fc80">166</i><i style="background:#83fc80">168</i><i style="background:#83fc80">168</i><i style="background:#82fd80">164</i><i style="background:#82fd80">161</i><i style="background:#81fd80">159</i><i style="background:#81fe80">158</i><i style="background:#81fe80">157</i><i style="background:#81fe80">155</i><i style="background:#80fe80">153</i><i style="background:#81fe80">155</i><i style="background:#82fd80">161</i><i style="background:#83fb80">170</i><i style="background:#83fb80">173</i><i style="background:#84fb7f">175</i><i style="background:#84fb7f">174</i><i style="background:#83fb80">172</i><i style="background:#83fb80">171</i><i style="background:#84fb7f">174</i><i style="background:#84fa7f">178</i><i style="background:#85fa7f">180</i><i style="background:#85f97f">181</i><i style="background:#85f97f">181</i></div>
<div class="r" style="left:221.8px;top:112px;height:11px"><i style="background:#f5f5f5;-webkit-text-stroke:0;color:#1a1a1a;box-shadow:inset 0 0 0 1px #d2d2d2">283.00</i><i style="background:#84fa7f">177</i><i style="background:#84fa7f">177</i><i style="background:#83fb80">170</i><i style="background:#83fc80">167</i><i style="background:#82fd80">164</i><i style="background:#82fd80">160</i><i style="background:#81fe80">155</i><i style="background:#81fe80">154</i><i style="background:#81fe80">157</i><i style="background:#82fd80">160</i><i style="background:#82fd80">163</i><i style="background:#82fc80">166</i><i style="background:#83fc80">168</i><i style="background:#83fc80">168</i><i style="background:#82fd80">164</i><i style="background:#82fd80">161</i><i style="background:#81fd80">159</i><i style="background:#81fe80">158</i><i style="background:#81fe80">157</i><i style="background:#81fe80">155</i><i style="background:#80fe80">153</i><i style="background:#81fe80">155</i><i style="background:#82fd80">161</i><i style="background:#83fb80">170</i><i style="background:#83fb80">173</i><i style="background:#84fb7f">175</i><i style="background:#84fb7f">174</i><i style="background:#83fb80">172</i><i style="background:#83fb80">171</i><i style="background:#84fb7f">174</i><i style="background:#84fa7f">178</i><i style="background:#85fa7f">180</i><i style="background:#85f97f">181</i><i style="background:#85f97f">181</i></div>
<div class="r" style="left:221.8px;top:124px;height:10px"><i style="background:#f5f5f5;-webkit-text-stroke:0;color:#1a1a1a;box-shadow:inset 0 0 0 1px #d2d2d2">307.00</i><i style="background:#85f97f">181</i><i style="background:#85f97f">181</i><i style="background:#84fb7f">174</i><i style="background:#83fb80">171</i><i style="background:#83fc80">168</i><i style="background:#82fd80">164</i><i style="background:#82fd80">160</i><i style="background:#81fe80">158</i><i style="background:#82fd80">161</i><i style="background:#82fd80">164</i><i style="background:#83fc80">167</i><i style="background:#83fb80">171</i><i style="background:#84fb7f">175</i><i style="background:#84fa7f">179</i><i style="background:#84fa7f">177</i><i style="background:#83fb80">172</i><i style="background:#82fd80">164</i><i style="background:#82fd80">161</i><i style="background:#81fe80">158</i><i style="background:#81fe80">155</i><i style="background:#81fe80">154</i><i style="background:#81fe80">155</i><i style="background:#82fd80">161</i><i style="background:#83fb80">170</i><i style="background:#84fb7f">174</i><i style="background:#84fb7f">175</i><i style="background:#84fa7f">176</i><i style="background:#83fb80">173</i><i style="background:#83fb80">172</i><i style="background:#84fb7f">175</i><i style="background:#85fa7f">180</i><i style="background:#85f97f">182</i><i style="background:#85f97f">182</i><i style="background:#85f97f">182</i></div>
<div class="r" style="left:221.8px;top:135px;height:10px"><i style="background:#f5f5f5;-webkit-text-stroke:0;color:#1a1a1a;box-shadow:inset 0 0 0 1px #d2d2d2">332.00</i><i style="background:#86f87f">187</i><i style="background:#86f87f">187</i><i style="background:#85fa7f">180</i><i style="background:#84fa7f">179</i><i style="background:#84fb7f">175</i><i style="background:#83fb80">170</i><i style="background:#82fc80">166</i><i style="background:#82fd80">164</i><i style="background:#83fc80">167</i><i style="background:#83fb80">170</i><i style="background:#83fb80">173</i><i style="background:#84fa7f">177</i><i style="background:#85fa7f">180</i><i style="background:#85f97f">185</i><i style="background:#86f87f">187</i><i style="background:#85f97f">183</i><i style="background:#84fb7f">174</i><i style="background:#83fb80">170</i><i style="background:#83fc80">168</i><i style="background:#82fd80">164</i><i style="background:#82fd80">162</i><i style="background:#82fd80">162</i><i style="background:#83fc80">169</i><i style="background:#85f97f">181</i><i style="background:#85f97f">183</i><i style="background:#85f97f">181</i><i style="background:#85f97f">181</i><i style="background:#84fa7f">177</i><i style="background:#84fa7f">177</i><i style="background:#85fa7f">180</i><i style="background:#85f97f">184</i><i style="background:#85f97f">186</i><i style="background:#85f97f">186</i><i style="background:#86f87f">187</i></div>
<div class="r" style="left:221.8px;top:146px;height:11px"><i style="background:#f5f5f5;-webkit-text-stroke:0;color:#1a1a1a;box-shadow:inset 0 0 0 1px #d2d2d2">356.00</i><i style="background:#86f87f">192</i><i style="background:#86f87f">192</i><i style="background:#86f87f">188</i><i style="background:#86f87f">188</i><i style="background:#85f97f">186</i><i style="background:#85f97f">181</i><i style="background:#84fa7f">177</i><i style="background:#83fb80">172</i><i style="background:#83fb80">172</i><i style="background:#84fb7f">175</i><i style="background:#84fa7f">178</i><i style="background:#85f97f">182</i><i style="background:#85f97f">185</i><i style="background:#86f87f">190</i><i style="background:#86f87f">192</i><i style="background:#86f87f">192</i><i style="background:#86f87f">190</i><i style="background:#86f87f">187</i><i style="background:#85f97f">183</i><i style="background:#85f97f">181</i><i style="background:#85f97f">181</i><i style="background:#85f97f">184</i><i style="background:#86f87f">189</i><i style="background:#87f77f">195</i><i style="background:#87f77f">196</i><i style="background:#87f77f">197</i><i style="background:#87f67f">198</i><i style="background:#87f77f">196</i><i style="background:#87f77f">195</i><i style="background:#87f77f">195</i><i style="background:#87f67f">198</i><i style="background:#88f67f">200</i><i style="background:#88f67f">201</i><i style="background:#88f57f">205</i></div>
<div class="r" style="left:221.8px;top:158px;height:10px"><i style="background:#f5f5f5;-webkit-text-stroke:0;color:#1a1a1a;box-shadow:inset 0 0 0 1px #d2d2d2">381.00</i><i style="background:#88f57f">206</i><i style="background:#88f57f">206</i><i style="background:#88f57f">204</i><i style="background:#88f67f">203</i><i style="background:#88f67f">202</i><i style="background:#87f67f">198</i><i style="background:#87f77f">195</i><i style="background:#86f77f">193</i><i style="background:#86f87f">192</i><i style="background:#86f77f">193</i><i style="background:#87f77f">194</i><i style="background:#87f77f">195</i><i style="background:#87f77f">195</i><i style="background:#87f77f">197</i><i style="background:#87f67f">199</i><i style="background:#87f67f">198</i><i style="background:#87f67f">198</i><i style="background:#87f67f">198</i><i style="background:#87f77f">196</i><i style="background:#87f77f">195</i><i style="background:#87f77f">194</i><i style="background:#87f77f">195</i><i style="background:#87f77f">197</i><i style="background:#88f67f">202</i><i style="background:#88f57f">204</i><i style="background:#88f57f">206</i><i style="background:#89f47f">210</i><i style="background:#89f47f">212</i><i style="background:#89f47f">211</i><i style="background:#89f47f">211</i><i style="background:#89f47f">212</i><i style="background:#8af37f">215</i><i style="background:#8af37f">218</i><i style="background:#8bf27e">221</i></div>
<div class="r" style="left:221.8px;top:169px;height:11px"><i style="background:#f5f5f5;-webkit-text-stroke:0;color:#1a1a1a;box-shadow:inset 0 0 0 1px #d2d2d2">404.00</i><i style="background:#8af37f">215</i><i style="background:#8af37f">216</i><i style="background:#8af37f">218</i><i style="background:#8bf37f">220</i><i style="background:#8af37f">217</i><i style="background:#8af37f">216</i><i style="background:#89f47f">212</i><i style="background:#89f47f">210</i><i style="background:#89f57f">208</i><i style="background:#89f47f">209</i><i style="background:#89f57f">207</i><i style="background:#89f57f">207</i><i style="background:#88f57f">206</i><i style="background:#89f57f">208</i><i style="background:#89f47f">210</i><i style="background:#89f47f">212</i><i style="background:#8af47f">214</i><i style="background:#8af37f">216</i><i style="background:#8af37f">215</i><i style="background:#8af47f">213</i><i style="background:#89f47f">211</i><i style="background:#89f47f">209</i><i style="background:#89f47f">211</i><i style="background:#8af37f">216</i><i style="background:#8bf37f">220</i><i style="background:#8bf37f">220</i><i style="background:#8bf27e">222</i><i style="background:#8bf27e">222</i><i style="background:#8bf27e">224</i><i style="background:#8bf27e">224</i><i style="background:#8bf17e">226</i><i style="background:#8cf17e">229</i><i style="background:#8cf17e">231</i><i style="background:#8df07e">235</i></div>
<div class="r" style="left:221.8px;top:181px;height:10px"><i style="background:#f5f5f5;-webkit-text-stroke:0;color:#1a1a1a;box-shadow:inset 0 0 0 1px #d2d2d2">428.00</i><i style="background:#8cf17e">227</i><i style="background:#8cf17e">227</i><i style="background:#8cf17e">231</i><i style="background:#8cf07e">232</i><i style="background:#8cf17e">230</i><i style="background:#8cf17e">229</i><i style="background:#8bf27e">225</i><i style="background:#8bf27e">223</i><i style="background:#8bf27e">221</i><i style="background:#8bf27e">221</i><i style="background:#8bf37f">220</i><i style="background:#8af37f">219</i><i style="background:#8af37f">218</i><i style="background:#8bf27e">221</i><i style="background:#8bf27e">223</i><i style="background:#8bf27e">225</i><i style="background:#8cf17e">227</i><i style="background:#8cf17e">229</i><i style="background:#8cf17e">228</i><i style="background:#8bf17e">226</i><i style="background:#8bf27e">224</i><i style="background:#8bf27e">224</i><i style="background:#8cf17e">228</i><i style="background:#8df07e">233</i><i style="background:#8df07e">235</i><i style="background:#8df07e">235</i><i style="background:#8df07e">235</i><i style="background:#8df07e">234</i><i style="background:#8df07e">235</i><i style="background:#8df07e">235</i><i style="background:#8def7e">238</i><i style="background:#8def7e">239</i><i style="background:#8eee7e">244</i><i style="background:#8fee7e">247</i></div>
<div class="r" style="left:221.8px;top:192px;height:11px"><i style="background:#f5f5f5;-webkit-text-stroke:0;color:#1a1a1a;box-shadow:inset 0 0 0 1px #d2d2d2">453.00</i><i style="background:#8df07e">236</i><i style="background:#8df07e">236</i><i style="background:#8def7e">239</i><i style="background:#8eef7e">242</i><i style="background:#8eee7e">244</i><i style="background:#8eee7e">244</i><i style="background:#8eef7e">241</i><i style="background:#8def7e">238</i><i style="background:#8df07e">233</i><i style="background:#8cf07e">232</i><i style="background:#8cf17e">230</i><i style="background:#8cf17e">230</i><i style="background:#8cf17e">229</i><i style="background:#8cf07e">232</i><i style="background:#8def7e">238</i><i style="background:#8eef7e">242</i><i style="background:#8eee7e">244</i><i style="background:#8eee7e">244</i><i style="background:#8eef7e">242</i><i style="background:#8def7e">239</i><i style="background:#8def7e">237</i><i style="background:#8def7e">237</i><i style="background:#8eee7e">243</i><i style="background:#8fee7e">248</i><i style="background:#8fed7e">251</i><i style="background:#8fed7e">250</i><i style="background:#8fed7e">251</i><i style="background:#8fee7e">248</i><i style="background:#8eee7e">246</i><i style="background:#8fee7e">247</i><i style="background:#8fee7e">247</i><i style="background:#8fed7e">252</i><i style="background:#90ec7e">255</i><i style="background:#91eb7e">261</i></div>
<div class="r" style="left:221.8px;top:204px;height:10px"><i style="background:#f5f5f5;-webkit-text-stroke:0;color:#1a1a1a;box-shadow:inset 0 0 0 1px #d2d2d2">477.00</i><i style="background:#8eee7e">246</i><i style="background:#8eee7e">246</i><i style="background:#8fee7e">247</i><i style="background:#8fed7e">249</i><i style="background:#90ec7e">255</i><i style="background:#90ec7e">257</i><i style="background:#90ec7e">254</i><i style="background:#8fee7e">248</i><i style="background:#8eee7e">243</i><i style="background:#8eef7e">241</i><i style="background:#8eef7e">240</i><i style="background:#8eef7e">241</i><i style="background:#8eef7e">241</i><i style="background:#8eee7e">246</i><i style="background:#8fed7e">252</i><i style="background:#90ec7e">255</i><i style="background:#90ec7e">256</i><i style="background:#90ec7e">256</i><i style="background:#90ed7e">253</i><i style="background:#90ed7e">253</i><i style="background:#8fed7e">251</i><i style="background:#8fed7e">250</i><i style="background:#90ec7e">254</i><i style="background:#91eb7e">261</i><i style="background:#91eb7e">264</i><i style="background:#91eb7e">262</i><i style="background:#91eb7e">262</i><i style="background:#90ec7e">257</i><i style="background:#90ec7e">256</i><i style="background:#90ec7e">256</i><i style="background:#90ec7e">257</i><i style="background:#91eb7e">262</i><i style="background:#91ea7e">265</i><i style="background:#92ea7d">270</i></div>
<div class="r" style="left:221.8px;top:215px;height:10px"><i style="background:#f5f5f5;-webkit-text-stroke:0;color:#1a1a1a;box-shadow:inset 0 0 0 1px #d2d2d2">502.00</i><i style="background:#90ec7e">255</i><i style="background:#90ec7e">255</i><i style="background:#90ec7e">255</i><i style="background:#90ec7e">257</i><i style="background:#91eb7e">263</i><i style="background:#92ea7d">267</i><i style="background:#91eb7e">264</i><i style="background:#90ec7e">259</i><i style="background:#90ec7e">254</i><i style="background:#8fed7e">252</i><i style="background:#8fed7e">251</i><i style="background:#90ed7e">253</i><i style="background:#90ec7e">254</i><i style="background:#90ec7e">259</i><i style="background:#91eb7e">262</i><i style="background:#91eb7e">264</i><i style="background:#92ea7e">266</i><i style="background:#92ea7e">266</i><i style="background:#91eb7e">263</i><i style="background:#91eb7e">262</i><i style="background:#90ec7e">258</i><i style="background:#90ec7e">258</i><i style="background:#91eb7e">263</i><i style="background:#92ea7d">269</i><i style="background:#92e97d">271</i><i style="background:#92e97d">272</i><i style="background:#92ea7d">270</i><i style="background:#91ea7e">265</i><i style="background:#92ea7e">266</i><i style="background:#92ea7e">266</i><i style="background:#92ea7e">266</i><i style="background:#92ea7d">270</i><i style="background:#93e97d">274</i><i style="background:#93e87d">279</i></div>
<div class="r" style="left:221.8px;top:226px;height:11px"><i style="background:#f5f5f5;-webkit-text-stroke:0;color:#1a1a1a;box-shadow:inset 0 0 0 1px #d2d2d2">526.00</i><i style="background:#91eb7e">261</i><i style="background:#91eb7e">261</i><i style="background:#91eb7e">264</i><i style="background:#91eb7e">264</i><i style="background:#92ea7d">269</i><i style="background:#93e97d">273</i><i style="background:#93e97d">275</i><i style="background:#92e97d">272</i><i style="background:#91eb7e">264</i><i style="background:#90ec7e">259</i><i style="background:#90ec7e">259</i><i style="background:#91eb7e">261</i><i style="background:#91eb7e">263</i><i style="background:#92ea7d">269</i><i style="background:#93e97d">273</i><i style="background:#93e97d">275</i><i style="background:#93e97d">276</i><i style="background:#93e97d">275</i><i style="background:#92ea7d">270</i><i style="background:#92ea7e">266</i><i style="background:#91eb7e">264</i><i style="background:#91ea7e">265</i><i style="background:#92ea7d">270</i><i style="background:#93e97d">275</i><i style="background:#93e87d">278</i><i style="background:#93e87d">279</i><i style="background:#93e87d">278</i><i style="background:#93e97d">273</i><i style="background:#92e97d">271</i><i style="background:#92e97d">272</i><i style="background:#93e97d">273</i><i style="background:#93e87d">277</i><i style="background:#94e87d">281</i><i style="background:#95e77d">286</i></div>
<div class="r" style="left:221.8px;top:238px;height:10px"><i style="background:#f5f5f5;-webkit-text-stroke:0;color:#1a1a1a;box-shadow:inset 0 0 0 1px #d2d2d2">549.00</i><i style="background:#92ea7e">266</i><i style="background:#92ea7e">266</i><i style="background:#92ea7d">270</i><i style="background:#92ea7d">270</i><i style="background:#93e97d">274</i><i style="background:#93e87d">278</i><i style="background:#94e87d">281</i><i style="background:#94e77d">282</i><i style="background:#94e87d">280</i><i style="background:#92e97d">272</i><i style="background:#92ea7d">267</i><i style="background:#92ea7d">269</i><i style="background:#92ea7d">270</i><i style="background:#94e87d">280</i><i style="background:#94e77d">283</i><i style="background:#94e77d">283</i><i style="background:#94e77d">284</i><i style="background:#94e77d">282</i><i style="background:#93e87d">277</i><i style="background:#93e97d">273</i><i style="background:#92e97d">271</i><i style="background:#92e97d">271</i><i style="background:#93e97d">276</i><i style="background:#94e77d">282</i><i style="background:#94e77d">285</i><i style="background:#95e67d">288</i><i style="background:#95e77d">286</i><i style="background:#94e87d">281</i><i style="background:#93e87d">277</i><i style="background:#93e87d">279</i><i style="background:#94e77d">282</i><i style="background:#94e77d">285</i><i style="background:#95e67d">289</i><i style="background:#96e57d">295</i></div>
<div class="r" style="left:221.8px;top:249px;height:11px"><i style="background:#f5f5f5;-webkit-text-stroke:0;color:#1a1a1a;box-shadow:inset 0 0 0 1px #d2d2d2">574.00</i><i style="background:#94e87d">280</i><i style="background:#94e87d">280</i><i style="background:#94e77d">282</i><i style="background:#94e77d">282</i><i style="background:#94e77d">282</i><i style="background:#94e77d">282</i><i style="background:#94e77d">282</i><i style="background:#94e77d">283</i><i style="background:#94e77d">283</i><i style="background:#94e77d">283</i><i style="background:#94e77d">283</i><i style="background:#94e77d">283</i><i style="background:#94e77d">283</i><i style="background:#94e77d">283</i><i style="background:#94e77d">284</i><i style="background:#94e77d">284</i><i style="background:#94e77d">284</i><i style="background:#94e77d">284</i><i style="background:#94e77d">285</i><i style="background:#94e77d">285</i><i style="background:#94e77d">285</i><i style="background:#95e77d">286</i><i style="background:#95e77d">286</i><i style="background:#95e67d">290</i><i style="background:#96e57d">297</i><i style="background:#96e57d">298</i><i style="background:#96e57d">294</i><i style="background:#95e67d">289</i><i style="background:#95e77d">286</i><i style="background:#95e77d">287</i><i style="background:#95e67d">290</i><i style="background:#96e57d">294</i><i style="background:#97e47d">299</i><i style="background:#97e47d">303</i></div>
<div class="r" style="left:221.8px;top:261px;height:10px"><i style="background:#f5f5f5;-webkit-text-stroke:0;color:#1a1a1a;box-shadow:inset 0 0 0 1px #d2d2d2">598.00</i><i style="background:#9ae17c">319</i><i style="background:#9ae17c">319</i><i style="background:#9ae17c">319</i><i style="background:#99e17c">318</i><i style="background:#99e17c">317</i><i style="background:#99e17c">317</i><i style="background:#99e17c">316</i><i style="background:#99e27c">315</i><i style="background:#99e27c">314</i><i style="background:#99e27c">314</i><i style="background:#99e27d">313</i><i style="background:#98e27d">312</i><i style="background:#98e27d">311</i><i style="background:#98e27d">310</i><i style="background:#98e37d">308</i><i style="background:#98e37d">307</i><i style="background:#97e37d">305</i><i style="background:#97e47d">304</i><i style="background:#97e47d">302</i><i style="background:#97e47d">300</i><i style="background:#96e57d">298</i><i style="background:#96e57d">296</i><i style="background:#96e57d">294</i><i style="background:#97e47d">304</i><i style="background:#98e37d">306</i><i style="background:#97e37d">305</i><i style="background:#97e47d">301</i><i style="background:#96e57d">296</i><i style="background:#96e57d">293</i><i style="background:#96e57d">296</i><i style="background:#97e47d">300</i><i style="background:#97e47d">304</i><i style="background:#98e37d">308</i><i style="background:#99e27c">314</i></div>
<div class="r" style="left:221.8px;top:272px;height:11px"><i style="background:#f5f5f5;-webkit-text-stroke:0;color:#1a1a1a;box-shadow:inset 0 0 0 1px #d2d2d2">623.00</i><i style="background:#9be07c">326</i><i style="background:#9bdf7c">327</i><i style="background:#9be07c">326</i><i style="background:#9ae07c">325</i><i style="background:#9ae07c">325</i><i style="background:#9ae07c">324</i><i style="background:#9ae07c">324</i><i style="background:#9ae07c">323</i><i style="background:#9ae07c">322</i><i style="background:#9ae07c">322</i><i style="background:#9ae17c">321</i><i style="background:#9ae17c">321</i><i style="background:#9ae17c">320</i><i style="background:#9ae17c">319</i><i style="background:#99e17c">318</i><i style="background:#99e17c">317</i><i style="background:#99e27c">315</i><i style="background:#99e27c">314</i><i style="background:#99e27d">313</i><i style="background:#98e27d">311</i><i style="background:#98e27d">310</i><i style="background:#98e37d">308</i><i style="background:#98e37d">307</i><i style="background:#98e27d">311</i><i style="background:#99e27c">315</i><i style="background:#99e27c">314</i><i style="background:#98e27d">310</i><i style="background:#97e47d">304</i><i style="background:#97e47d">301</i><i style="background:#97e47d">303</i><i style="background:#98e37d">307</i><i style="background:#99e27d">313</i><i style="background:#99e17c">317</i><i style="background:#9ae07c">322</i></div>
<div class="r" style="left:221.8px;top:284px;height:10px"><i style="background:#f5f5f5;-webkit-text-stroke:0;color:#1a1a1a;box-shadow:inset 0 0 0 1px #d2d2d2">647.00</i><i style="background:#9cde7c">335</i><i style="background:#9cde7c">335</i><i style="background:#9cde7c">334</i><i style="background:#9cde7c">333</i><i style="background:#9cde7c">333</i><i style="background:#9bdf7c">332</i><i style="background:#9bdf7c">332</i><i style="background:#9bdf7c">331</i><i style="background:#9bdf7c">330</i><i style="background:#9bdf7c">330</i><i style="background:#9bdf7c">329</i><i style="background:#9bdf7c">329</i><i style="background:#9bdf7c">328</i><i style="background:#9bdf7c">327</i><i style="background:#9be07c">326</i><i style="background:#9ae07c">325</i><i style="background:#9ae07c">323</i><i style="background:#9ae07c">322</i><i style="background:#9ae17c">321</i><i style="background:#9ae17c">319</i><i style="background:#99e17c">318</i><i style="background:#99e17c">316</i><i style="background:#99e27c">315</i><i style="background:#9ae17c">319</i><i style="background:#9ae17c">321</i><i style="background:#9ae17c">320</i><i style="background:#99e17c">318</i><i style="background:#98e27d">312</i><i style="background:#98e37d">308</i><i style="background:#98e27d">312</i><i style="background:#99e17c">316</i><i style="background:#9ae17c">321</i><i style="background:#9ae07c">324</i><i style="background:#9bdf7c">331</i></div>
<div class="r" style="left:221.8px;top:295px;height:10px"><i style="background:#f5f5f5;-webkit-text-stroke:0;color:#1a1a1a;box-shadow:inset 0 0 0 1px #d2d2d2">672.00</i><i style="background:#9ddd7c">342</i><i style="background:#9ddd7c">342</i><i style="background:#9ddd7c">342</i><i style="background:#9ddd7c">341</i><i style="background:#9ddd7c">341</i><i style="background:#9ddd7c">340</i><i style="background:#9ddd7c">340</i><i style="background:#9ddd7c">339</i><i style="background:#9cdd7c">338</i><i style="background:#9cdd7c">338</i><i style="background:#9cde7c">337</i><i style="background:#9cde7c">336</i><i style="background:#9cde7c">336</i><i style="background:#9cde7c">335</i><i style="background:#9cde7c">333</i><i style="background:#9bdf7c">332</i><i style="background:#9bdf7c">331</i><i style="background:#9bdf7c">330</i><i style="background:#9bdf7c">328</i><i style="background:#9bdf7c">327</i><i style="background:#9ae07c">325</i><i style="background:#9ae07c">324</i><i style="background:#9ae07c">322</i><i style="background:#9be07c">326</i><i style="background:#9bdf7c">329</i><i style="background:#9bdf7c">329</i><i style="background:#9ae07c">325</i><i style="background:#9ae17c">321</i><i style="background:#9ae17c">319</i><i style="background:#9ae17c">320</i><i style="background:#9ae07c">324</i><i style="background:#9bdf7c">329</i><i style="background:#9cde7c">333</i><i style="background:#9ddd7c">341</i></div>
<div class="r" style="left:221.8px;top:306px;height:11px"><i style="background:#f5f5f5;-webkit-text-stroke:0;color:#1a1a1a;box-shadow:inset 0 0 0 1px #d2d2d2">695.00</i><i style="background:#9edc7c">349</i><i style="background:#9edc7c">349</i><i style="background:#9edc7c">348</i><i style="background:#9edc7c">348</i><i style="background:#9edc7c">347</i><i style="background:#9edc7c">347</i><i style="background:#9edc7c">346</i><i style="background:#9edc7c">346</i><i style="background:#9ddc7c">345</i><i style="background:#9ddc7c">345</i><i style="background:#9ddc7c">344</i><i style="background:#9ddc7c">344</i><i style="background:#9ddd7c">343</i><i style="background:#9ddd7c">342</i><i style="background:#9ddd7c">342</i><i style="background:#9ddd7c">341</i><i style="background:#9ddd7c">340</i><i style="background:#9ddd7c">339</i><i style="background:#9cdd7c">338</i><i style="background:#9cde7c">336</i><i style="background:#9cde7c">335</i><i style="background:#9cde7c">334</i><i style="background:#9cde7c">333</i><i style="background:#9cdd7c">338</i><i style="background:#9ddd7c">340</i><i style="background:#9ddd7c">339</i><i style="background:#9cde7c">334</i><i style="background:#9bdf7c">329</i><i style="background:#9bdf7c">329</i><i style="background:#9bdf7c">329</i><i style="background:#9cde7c">333</i><i style="background:#9cdd7c">338</i><i style="background:#9ddd7c">342</i><i style="background:#9edc7c">349</i></div>
<div class="r" style="left:221.8px;top:318px;height:10px"><i style="background:#f5f5f5;-webkit-text-stroke:0;color:#1a1a1a;box-shadow:inset 0 0 0 1px #d2d2d2">719.00</i><i style="background:#a0da7c">360</i><i style="background:#a0da7c">360</i><i style="background:#9fda7c">357</i><i style="background:#9fda7c">357</i><i style="background:#9fda7c">356</i><i style="background:#9fda7c">356</i><i style="background:#9fda7c">355</i><i style="background:#9fda7c">355</i><i style="background:#9fdb7c">354</i><i style="background:#9fdb7c">354</i><i style="background:#9fdb7c">353</i><i style="background:#9fdb7c">353</i><i style="background:#9fdb7c">352</i><i style="background:#9edb7c">351</i><i style="background:#9edb7c">351</i><i style="background:#9edb7c">350</i><i style="background:#9edc7c">349</i><i style="background:#9edc7c">348</i><i style="background:#9edc7c">347</i><i style="background:#9ddc7c">345</i><i style="background:#9ddc7c">344</i><i style="background:#9ddd7c">343</i><i style="background:#9ddd7c">342</i><i style="background:#9edc7c">346</i><i style="background:#9edc7c">349</i><i style="background:#9edc7c">348</i><i style="background:#9ddd7c">343</i><i style="background:#9ddd7c">339</i><i style="background:#9cde7c">337</i><i style="background:#9cde7c">337</i><i style="background:#9ddd7c">342</i><i style="background:#9edc7c">347</i><i style="background:#9edb7c">350</i><i style="background:#9fda7c">356</i></div>
<div class="r" style="left:221.8px;top:329px;height:11px"><i style="background:#f5f5f5;-webkit-text-stroke:0;color:#1a1a1a;box-shadow:inset 0 0 0 1px #d2d2d2">744.00</i><i style="background:#a1d87b">368</i><i style="background:#a1d87b">368</i><i style="background:#a1d87b">366</i><i style="background:#a1d87b">366</i><i style="background:#a0d97b">365</i><i style="background:#a0d97b">365</i><i style="background:#a0d97b">365</i><i style="background:#a0d97b">364</i><i style="background:#a0d97b">364</i><i style="background:#a0d97b">363</i><i style="background:#a0d97b">363</i><i style="background:#a0d97b">363</i><i style="background:#a0d97b">362</i><i style="background:#a0d97b">362</i><i style="background:#a0d97b">361</i><i style="background:#a0da7c">360</i><i style="background:#a0da7c">359</i><i style="background:#a0da7c">359</i><i style="background:#9fda7c">358</i><i style="background:#9fda7c">357</i><i style="background:#9fda7c">356</i><i style="background:#9fda7c">355</i><i style="background:#9fdb7c">354</i><i style="background:#a0da7c">359</i><i style="background:#a0d97b">361</i><i style="background:#a0da7c">360</i><i style="background:#a0da7c">359</i><i style="background:#9fda7c">355</i><i style="background:#9edb7c">350</i><i style="background:#9edc7c">349</i><i style="background:#9fdb7c">353</i><i style="background:#a0da7c">360</i><i style="background:#a0d97b">363</i><i style="background:#a1d87b">366</i></div>
<div class="r" style="left:221.8px;top:341px;height:10px"><i style="background:#f5f5f5;-webkit-text-stroke:0;color:#1a1a1a;box-shadow:inset 0 0 0 1px #d2d2d2">768.00</i><i style="background:#a3d67b">380</i><i style="background:#a3d67b">380</i><i style="background:#a3d67b">380</i><i style="background:#a3d67b">380</i><i style="background:#a3d67b">380</i><i style="background:#a3d67b">379</i><i style="background:#a3d67b">379</i><i style="background:#a3d67b">379</i><i style="background:#a3d67b">379</i><i style="background:#a2d67b">378</i><i style="background:#a2d67b">378</i><i style="background:#a2d67b">378</i><i style="background:#a2d67b">378</i><i style="background:#a2d77b">377</i><i style="background:#a2d77b">377</i><i style="background:#a2d77b">377</i><i style="background:#a2d77b">376</i><i style="background:#a2d77b">376</i><i style="background:#a2d77b">375</i><i style="background:#a2d77b">375</i><i style="background:#a2d77b">374</i><i style="background:#a2d77b">374</i><i style="background:#a2d77b">373</i><i style="background:#a2d77b">377</i><i style="background:#a2d77b">372</i><i style="background:#a1d87b">368</i><i style="background:#a0d97b">364</i><i style="background:#a0da7c">360</i><i style="background:#9fda7c">358</i><i style="background:#a0da7c">360</i><i style="background:#a0d97b">361</i><i style="background:#a1d87b">366</i><i style="background:#a1d87b">368</i><i style="background:#a1d87b">371</i></div>
<div class="r" style="left:221.8px;top:352px;height:11px"><i style="background:#f5f5f5;-webkit-text-stroke:0;color:#1a1a1a;box-shadow:inset 0 0 0 1px #d2d2d2">793.00</i><i style="background:#a5d37b">395</i><i style="background:#a5d37b">395</i><i style="background:#a5d37b">395</i><i style="background:#a5d37b">395</i><i style="background:#a5d37b">395</i><i style="background:#a5d37b">394</i><i style="background:#a5d37b">394</i><i style="background:#a5d37b">394</i><i style="background:#a5d37b">394</i><i style="background:#a5d47b">393</i><i style="background:#a5d47b">393</i><i style="background:#a5d47b">393</i><i style="background:#a5d47b">393</i><i style="background:#a5d47b">392</i><i style="background:#a5d47b">392</i><i style="background:#a5d47b">392</i><i style="background:#a4d47b">391</i><i style="background:#a4d47b">391</i><i style="background:#a4d47b">390</i><i style="background:#a4d47b">390</i><i style="background:#a4d47b">389</i><i style="background:#a4d47b">389</i><i style="background:#a4d57b">388</i><i style="background:#a3d67b">382</i><i style="background:#c7ac76">618</i><i style="background:#c2b177">589</i><i style="background:#cca575">652</i><i style="background:#d29e74">692</i><i style="background:#d19f74">688</i><i style="background:#d0a075">681</i><i style="background:#cfa275">671</i><i style="background:#d29e74">696</i><i style="background:#d19f74">688</i><i style="background:#d0a075">680</i></div>
<div class="r" style="left:221.8px;top:364px;height:10px"><i style="background:#f5f5f5;-webkit-text-stroke:0;color:#1a1a1a;box-shadow:inset 0 0 0 1px #d2d2d2">817.00</i><i style="background:#a5d37b">395</i><i style="background:#a5d37b">395</i><i style="background:#a5d37b">395</i><i style="background:#a5d37b">395</i><i style="background:#a5d37b">395</i><i style="background:#a5d37b">396</i><i style="background:#a5d37b">396</i><i style="background:#a5d37b">396</i><i style="background:#a5d37b">396</i><i style="background:#a5d37b">397</i><i style="background:#a5d37b">397</i><i style="background:#a5d37b">397</i><i style="background:#a5d37b">397</i><i style="background:#a5d37b">398</i><i style="background:#a5d37b">398</i><i style="background:#a5d37b">398</i><i style="background:#a6d37b">399</i><i style="background:#a6d37b">399</i><i style="background:#a6d27b">400</i><i style="background:#a6d27b">400</i><i style="background:#a6d27b">401</i><i style="background:#a6d27b">401</i><i style="background:#a6d27b">402</i><i style="background:#a7d17a">409</i><i style="background:#ed7e70">875</i><i style="background:#ea8271">853</i><i style="background:#f7736f">936</i><i style="background:#fd6c6e">976</i><i style="background:#ff696e">991</i><i style="background:#fd6b6e">978</i><i style="background:#fa6f6f">959</i><i style="background:#f8716f">946</i><i style="background:#f5756f">923</i><i style="background:#f27970">904</i></div>
<div class="r" style="left:221.8px;top:375px;height:10px"><i style="background:#f5f5f5;-webkit-text-stroke:0;color:#1a1a1a;box-shadow:inset 0 0 0 1px #d2d2d2">842.00</i><i style="background:#a5d37b">395</i><i style="background:#a5d37b">395</i><i style="background:#a5d37b">395</i><i style="background:#a5d37b">396</i><i style="background:#a5d37b">396</i><i style="background:#a5d37b">396</i><i style="background:#a5d37b">397</i><i style="background:#a5d37b">397</i><i style="background:#a5d37b">398</i><i style="background:#a5d37b">398</i><i style="background:#a6d37b">399</i><i style="background:#a6d37b">399</i><i style="background:#a6d27b">400</i><i style="background:#a6d27b">401</i><i style="background:#a6d27b">402</i><i style="background:#a6d27b">403</i><i style="background:#a6d27b">404</i><i style="background:#a7d27b">405</i><i style="background:#a7d17b">406</i><i style="background:#a7d17a">407</i><i style="background:#a7d17a">409</i><i style="background:#a7d17a">410</i><i style="background:#a7d07a">411</i><i style="background:#ed7e71">871</i><i style="background:#ed7e70">875</i><i style="background:#ea8271">853</i><i style="background:#f7736f">936</i><i style="background:#fd6c6e">976</i><i style="background:#ff696e">991</i><i style="background:#fd6b6e">978</i><i style="background:#fa6f6f">959</i><i style="background:#f8716f">946</i><i style="background:#f5756f">923</i><i style="background:#f27970">904</i></div>
<div class="r" style="left:221.8px;top:386px;height:11px"><i style="background:#f5f5f5;-webkit-text-stroke:0;color:#1a1a1a;box-shadow:inset 0 0 0 1px #d2d2d2">865.00</i><i style="background:#a5d37b">395</i><i style="background:#a5d37b">395</i><i style="background:#a5d37b">395</i><i style="background:#a5d37b">396</i><i style="background:#a5d37b">396</i><i style="background:#a5d37b">396</i><i style="background:#a5d37b">397</i><i style="background:#a5d37b">397</i><i style="background:#a5d37b">398</i><i style="background:#a5d37b">398</i><i style="background:#a6d37b">399</i><i style="background:#a6d37b">399</i><i style="background:#a6d27b">400</i><i style="background:#a6d27b">401</i><i style="background:#a6d27b">402</i><i style="background:#a6d27b">403</i><i style="background:#a6d27b">404</i><i style="background:#a7d27b">405</i><i style="background:#a7d17b">406</i><i style="background:#a7d17a">407</i><i style="background:#a7d17a">409</i><i style="background:#a7d17a">410</i><i style="background:#a7d07a">411</i><i style="background:#ed7e71">871</i><i style="background:#ed7e70">875</i><i style="background:#ea8271">853</i><i style="background:#f7736f">936</i><i style="background:#fd6c6e">976</i><i style="background:#ff696e">991</i><i style="background:#fd6b6e">978</i><i style="background:#fa6f6f">959</i><i style="background:#f8716f">946</i><i style="background:#f5756f">923</i><i style="background:#f27970">904</i></div>
<div class="r" style="left:221.8px;top:398px;height:10px"><i style="background:#f5f5f5;-webkit-text-stroke:0;color:#1a1a1a;box-shadow:inset 0 0 0 1px #d2d2d2">890.00</i><i style="background:#a5d37b">395</i><i style="background:#a5d37b">395</i><i style="background:#a5d37b">395</i><i style="background:#a5d37b">396</i><i style="background:#a5d37b">396</i><i style="background:#a5d37b">396</i><i style="background:#a5d37b">397</i><i style="background:#a5d37b">397</i><i style="background:#a5d37b">398</i><i style="background:#a5d37b">398</i><i style="background:#a6d37b">399</i><i style="background:#a6d37b">399</i><i style="background:#a6d27b">400</i><i style="background:#a6d27b">401</i><i style="background:#a6d27b">402</i><i style="background:#a6d27b">403</i><i style="background:#a6d27b">404</i><i style="background:#a7d27b">405</i><i style="background:#a7d17b">406</i><i style="background:#a7d17a">407</i><i style="background:#a7d17a">409</i><i style="background:#a7d17a">410</i><i style="background:#a7d07a">411</i><i style="background:#ed7e71">871</i><i style="background:#ed7e70">875</i><i style="background:#ea8271">853</i><i style="background:#f7736f">936</i><i style="background:#fd6c6e">976</i><i style="background:#ff696e">991</i><i style="background:#fd6b6e">978</i><i style="background:#fa6f6f">959</i><i style="background:#f8716f">946</i><i style="background:#f5756f">923</i><i style="background:#f27970">904</i></div>
<div class="r" style="left:221.8px;top:409px;height:11px"><i style="background:#f5f5f5;-webkit-text-stroke:0;color:#1a1a1a;box-shadow:inset 0 0 0 1px #d2d2d2">915.00</i><i style="background:#a5d37b">395</i><i style="background:#a5d37b">395</i><i style="background:#a5d37b">395</i><i style="background:#a5d37b">396</i><i style="background:#a5d37b">396</i><i style="background:#a5d37b">396</i><i style="background:#a5d37b">397</i><i style="background:#a5d37b">397</i><i style="background:#a5d37b">398</i><i style="background:#a5d37b">398</i><i style="background:#a6d37b">399</i><i style="background:#a6d37b">399</i><i style="background:#a6d27b">400</i><i style="background:#a6d27b">401</i><i style="background:#a6d27b">402</i><i style="background:#a6d27b">403</i><i style="background:#a6d27b">404</i><i style="background:#a7d27b">405</i><i style="background:#a7d17b">406</i><i style="background:#a7d17a">407</i><i style="background:#a7d17a">409</i><i style="background:#a7d17a">410</i><i style="background:#a7d07a">411</i><i style="background:#ed7e71">871</i><i style="background:#ed7e70">875</i><i style="background:#ea8271">853</i><i style="background:#f7736f">936</i><i style="background:#fd6c6e">976</i><i style="background:#ff696e">991</i><i style="background:#fd6b6e">978</i><i style="background:#fa6f6f">959</i><i style="background:#f8716f">946</i><i style="background:#f5756f">923</i><i style="background:#f27970">904</i></div>
<div class="r" style="left:221.8px;top:421px;height:10px"><i style="background:#f5f5f5;-webkit-text-stroke:0;color:#1a1a1a;box-shadow:inset 0 0 0 1px #d2d2d2">940.00</i><i style="background:#a5d37b">395</i><i style="background:#a5d37b">395</i><i style="background:#a5d37b">395</i><i style="background:#a5d37b">396</i><i style="background:#a5d37b">396</i><i style="background:#a5d37b">396</i><i style="background:#a5d37b">397</i><i style="background:#a5d37b">397</i><i style="background:#a5d37b">398</i><i style="background:#a5d37b">398</i><i style="background:#a6d37b">399</i><i style="background:#a6d37b">399</i><i style="background:#a6d27b">400</i><i style="background:#a6d27b">401</i><i style="background:#a6d27b">402</i><i style="background:#a6d27b">403</i><i style="background:#a6d27b">404</i><i style="background:#a7d27b">405</i><i style="background:#a7d17b">406</i><i style="background:#a7d17a">407</i><i style="background:#a7d17a">409</i><i style="background:#a7d17a">410</i><i style="background:#a7d07a">411</i><i style="background:#ed7e71">871</i><i style="background:#ed7e70">875</i><i style="background:#ea8271">853</i><i style="background:#f7736f">936</i><i style="background:#fd6c6e">976</i><i style="background:#ff696e">991</i><i style="background:#fd6b6e">978</i><i style="background:#fa6f6f">959</i><i style="background:#f8716f">946</i><i style="background:#f5756f">923</i><i style="background:#f27970">904</i></div>
<div class="r" style="left:221.8px;top:432px;height:11px"><i style="background:#f5f5f5;-webkit-text-stroke:0;color:#1a1a1a;box-shadow:inset 0 0 0 1px #d2d2d2">965.00</i><i style="background:#a5d37b">395</i><i style="background:#a5d37b">395</i><i style="background:#a5d37b">395</i><i style="background:#a5d37b">396</i><i style="background:#a5d37b">396</i><i style="background:#a5d37b">396</i><i style="background:#a5d37b">397</i><i style="background:#a5d37b">397</i><i style="background:#a5d37b">398</i><i style="background:#a5d37b">398</i><i style="background:#a6d37b">399</i><i style="background:#a6d37b">399</i><i style="background:#a6d27b">400</i><i style="background:#a6d27b">401</i><i style="background:#a6d27b">402</i><i style="background:#a6d27b">403</i><i style="background:#a6d27b">404</i><i style="background:#a7d27b">405</i><i style="background:#a7d17b">406</i><i style="background:#a7d17a">407</i><i style="background:#a7d17a">409</i><i style="background:#a7d17a">410</i><i style="background:#a7d07a">411</i><i style="background:#ed7e71">871</i><i style="background:#ed7e70">875</i><i style="background:#ea8271">853</i><i style="background:#f7736f">936</i><i style="background:#fd6c6e">976</i><i style="background:#ff696e">991</i><i style="background:#fd6b6e">978</i><i style="background:#fa6f6f">959</i><i style="background:#f8716f">946</i><i style="background:#f5756f">923</i><i style="background:#f27970">904</i></div>
<div class="r" style="left:221.8px;top:444px;height:10px"><i style="background:#f5f5f5;-webkit-text-stroke:0;color:#1a1a1a;box-shadow:inset 0 0 0 1px #d2d2d2">990.00</i><i style="background:#a5d37b">395</i><i style="background:#a5d37b">395</i><i style="background:#a5d37b">395</i><i style="background:#a5d37b">396</i><i style="background:#a5d37b">396</i><i style="background:#a5d37b">396</i><i style="background:#a5d37b">397</i><i style="background:#a5d37b">397</i><i style="background:#a5d37b">398</i><i style="background:#a5d37b">398</i><i style="background:#a6d37b">399</i><i style="background:#a6d37b">399</i><i style="background:#a6d27b">400</i><i style="background:#a6d27b">401</i><i style="background:#a6d27b">402</i><i style="background:#a6d27b">403</i><i style="background:#a6d27b">404</i><i style="background:#a7d27b">405</i><i style="background:#a7d17b">406</i><i style="background:#a7d17a">407</i><i style="background:#a7d17a">409</i><i style="background:#a7d17a">410</i><i style="background:#a7d07a">411</i><i style="background:#ed7e71">871</i><i style="background:#ed7e70">875</i><i style="background:#ea8271">853</i><i style="background:#f7736f">936</i><i style="background:#fd6c6e">976</i><i style="background:#ff696e">991</i><i style="background:#fd6b6e">978</i><i style="background:#fa6f6f">959</i><i style="background:#f8716f">946</i><i style="background:#f5756f">923</i><i style="background:#f27970">904</i></div>
<div class="r" style="left:221.8px;top:455px;height:10px"><i style="background:#f5f5f5;-webkit-text-stroke:0;color:#1a1a1a;box-shadow:inset 0 0 0 1px #d2d2d2">1015.00</i><i style="background:#a5d37b">395</i><i style="background:#a5d37b">395</i><i style="background:#a5d37b">395</i><i style="background:#a5d37b">396</i><i style="background:#a5d37b">396</i><i style="background:#a5d37b">396</i><i style="background:#a5d37b">397</i><i style="background:#a5d37b">397</i><i style="background:#a5d37b">398</i><i style="background:#a5d37b">398</i><i style="background:#a6d37b">399</i><i style="background:#a6d37b">399</i><i style="background:#a6d27b">400</i><i style="background:#a6d27b">401</i><i style="background:#a6d27b">402</i><i style="background:#a6d27b">403</i><i style="background:#a6d27b">404</i><i style="background:#a7d27b">405</i><i style="background:#a7d17b">406</i><i style="background:#a7d17a">407</i><i style="background:#a7d17a">409</i><i style="background:#a7d17a">410</i><i style="background:#a7d07a">411</i><i style="background:#ed7e71">871</i><i style="background:#ed7e70">875</i><i style="background:#ea8271">853</i><i style="background:#f7736f">936</i><i style="background:#fd6c6e">976</i><i style="background:#ff696e">991</i><i style="background:#fd6b6e">978</i><i style="background:#fa6f6f">959</i><i style="background:#f8716f">946</i><i style="background:#f5756f">923</i><i style="background:#f27970">904</i></div>
<div class="r" style="left:221.8px;top:466px;height:11px"><i style="background:#f5f5f5;-webkit-text-stroke:0;color:#1a1a1a;box-shadow:inset 0 0 0 1px #d2d2d2">1040.00</i><i style="background:#a5d37b">395</i><i style="background:#a5d37b">395</i><i style="background:#a5d37b">395</i><i style="background:#a5d37b">396</i><i style="background:#a5d37b">396</i><i style="background:#a5d37b">396</i><i style="background:#a5d37b">397</i><i style="background:#a5d37b">397</i><i style="background:#a5d37b">398</i><i style="background:#a5d37b">398</i><i style="background:#a6d37b">399</i><i style="background:#a6d37b">399</i><i style="background:#a6d27b">400</i><i style="background:#a6d27b">401</i><i style="background:#a6d27b">402</i><i style="background:#a6d27b">403</i><i style="background:#a6d27b">404</i><i style="background:#a7d27b">405</i><i style="background:#a7d17b">406</i><i style="background:#a7d17a">407</i><i style="background:#a7d17a">409</i><i style="background:#a7d17a">410</i><i style="background:#a7d07a">411</i><i style="background:#ed7e71">871</i><i style="background:#ed7e70">875</i><i style="background:#ea8271">853</i><i style="background:#f7736f">936</i><i style="background:#fd6c6e">976</i><i style="background:#ff696e">991</i><i style="background:#fd6b6e">978</i><i style="background:#fa6f6f">959</i><i style="background:#f8716f">946</i><i style="background:#f5756f">923</i><i style="background:#f27970">904</i></div>
<div class="r" style="left:221.8px;top:478px;height:10px"><i style="background:#f5f5f5;-webkit-text-stroke:0;color:#1a1a1a;box-shadow:inset 0 0 0 1px #d2d2d2">1065.00</i><i style="background:#a5d37b">395</i><i style="background:#a5d37b">395</i><i style="background:#a5d37b">395</i><i style="background:#a5d37b">396</i><i style="background:#a5d37b">396</i><i style="background:#a5d37b">396</i><i style="background:#a5d37b">397</i><i style="background:#a5d37b">397</i><i style="background:#a5d37b">398</i><i style="background:#a5d37b">398</i><i style="background:#a6d37b">399</i><i style="background:#a6d37b">399</i><i style="background:#a6d27b">400</i><i style="background:#a6d27b">401</i><i style="background:#a6d27b">402</i><i style="background:#a6d27b">403</i><i style="background:#a6d27b">404</i><i style="background:#a7d27b">405</i><i style="background:#a7d17b">406</i><i style="background:#a7d17a">407</i><i style="background:#a7d17a">409</i><i style="background:#a7d17a">410</i><i style="background:#a7d07a">411</i><i style="background:#ed7e71">871</i><i style="background:#ed7e70">875</i><i style="background:#ea8271">853</i><i style="background:#f7736f">936</i><i style="background:#fd6c6e">976</i><i style="background:#ff696e">991</i><i style="background:#fd6b6e">978</i><i style="background:#fa6f6f">959</i><i style="background:#f8716f">946</i><i style="background:#f5756f">923</i><i style="background:#f27970">904</i></div>
<div class="r" style="left:221.8px;top:489px;height:11px"><i style="background:#f5f5f5;-webkit-text-stroke:0;color:#1a1a1a;box-shadow:inset 0 0 0 1px #d2d2d2">1090.00</i><i style="background:#a5d37b">395</i><i style="background:#a5d37b">395</i><i style="background:#a5d37b">395</i><i style="background:#a5d37b">396</i><i style="background:#a5d37b">396</i><i style="background:#a5d37b">396</i><i style="background:#a5d37b">397</i><i style="background:#a5d37b">397</i><i style="background:#a5d37b">398</i><i style="background:#a5d37b">398</i><i style="background:#a6d37b">399</i><i style="background:#a6d37b">399</i><i style="background:#a6d27b">400</i><i style="background:#a6d27b">401</i><i style="background:#a6d27b">402</i><i style="background:#a6d27b">403</i><i style="background:#a6d27b">404</i><i style="background:#a7d27b">405</i><i style="background:#a7d17b">406</i><i style="background:#a7d17a">407</i><i style="background:#a7d17a">409</i><i style="background:#a7d17a">410</i><i style="background:#a7d07a">411</i><i style="background:#ed7e71">871</i><i style="background:#ed7e70">875</i><i style="background:#ea8271">853</i><i style="background:#f7736f">936</i><i style="background:#fd6c6e">976</i><i style="background:#ff696e">991</i><i style="background:#fd6b6e">978</i><i style="background:#fa6f6f">959</i><i style="background:#f8716f">946</i><i style="background:#f5756f">923</i><i style="background:#f27970">904</i></div>
<div class="r" style="left:221.8px;top:501px;height:10px"><i style="background:#f5f5f5;-webkit-text-stroke:0;color:#1a1a1a;box-shadow:inset 0 0 0 1px #d2d2d2">1115.00</i><i style="background:#a5d37b">395</i><i style="background:#a5d37b">395</i><i style="background:#a5d37b">395</i><i style="background:#a5d37b">396</i><i style="background:#a5d37b">396</i><i style="background:#a5d37b">396</i><i style="background:#a5d37b">397</i><i style="background:#a5d37b">397</i><i style="background:#a5d37b">398</i><i style="background:#a5d37b">398</i><i style="background:#a6d37b">399</i><i style="background:#a6d37b">399</i><i style="background:#a6d27b">400</i><i style="background:#a6d27b">401</i><i style="background:#a6d27b">402</i><i style="background:#a6d27b">403</i><i style="background:#a6d27b">404</i><i style="background:#a7d27b">405</i><i style="background:#a7d17b">406</i><i style="background:#a7d17a">407</i><i style="background:#a7d17a">409</i><i style="background:#a7d17a">410</i><i style="background:#a7d07a">411</i><i style="background:#ed7e71">871</i><i style="background:#ed7e70">875</i><i style="background:#ea8271">853</i><i style="background:#f7736f">936</i><i style="background:#fd6c6e">976</i><i style="background:#ff696e">991</i><i style="background:#fd6b6e">978</i><i style="background:#fa6f6f">959</i><i style="background:#f8716f">946</i><i style="background:#f5756f">923</i><i style="background:#f27970">904</i></div>
<div class="r" style="left:221.8px;top:512px;height:11px"><i style="background:#f5f5f5;-webkit-text-stroke:0;color:#1a1a1a;box-shadow:inset 0 0 0 1px #d2d2d2">1140.00</i><i style="background:#a5d37b">395</i><i style="background:#a5d37b">395</i><i style="background:#a5d37b">395</i><i style="background:#a5d37b">396</i><i style="background:#a5d37b">396</i><i style="background:#a5d37b">396</i><i style="background:#a5d37b">397</i><i style="background:#a5d37b">397</i><i style="background:#a5d37b">398</i><i style="background:#a5d37b">398</i><i style="background:#a6d37b">399</i><i style="background:#a6d37b">399</i><i style="background:#a6d27b">400</i><i style="background:#a6d27b">401</i><i style="background:#a6d27b">402</i><i style="background:#a6d27b">403</i><i style="background:#a6d27b">404</i><i style="background:#a7d27b">405</i><i style="background:#a7d17b">406</i><i style="background:#a7d17a">407</i><i style="background:#a7d17a">409</i><i style="background:#a7d17a">410</i><i style="background:#a7d07a">411</i><i style="background:#ed7e71">871</i><i style="background:#ed7e70">875</i><i style="background:#ea8271">853</i><i style="background:#f7736f">936</i><i style="background:#fd6c6e">976</i><i style="background:#ff696e">991</i><i style="background:#fd6b6e">978</i><i style="background:#fa6f6f">959</i><i style="background:#f8716f">946</i><i style="background:#f5756f">923</i><i style="background:#f27970">904</i></div>
</div>
<div class="a" style="left:221.5px;top:523px;width:1224px;height:10.5px;background:#3c3c3c"></div>
<div class="a" style="left:220.5px;top:533.5px;width:1225px;height:32px;background:#f0f0f0"></div>
<div class="a" style="left:220.5px;top:547px;width:1225px;height:1px;background:#e2e2e2"></div>
<div class="a" style="left:234px;top:540px;width:13px;height:1.2px;background:#555"></div>
<div class="a" style="left:214.6px;top:565.5px;width:1231px;height:4.5px;background:#d8e6f3"></div>
<div class="a" style="left:214.6px;top:40px;width:6px;height:530px;background:#d8e6f3"></div>
<div class="a" style="left:355px;top:534px;width:26px;height:156px;background:linear-gradient(90deg,rgba(0,0,0,0),rgba(0,0,0,0.13))"></div>
<div class="a" style="left:1037.8px;top:534px;width:50px;height:156px;background:linear-gradient(90deg,rgba(0,0,0,0.14),rgba(0,0,0,0))"></div>
<div class="a" style="left:380.8px;top:250px;width:657px;height:440px;background:#fff;border-radius:5px 5px 0 0;overflow:hidden">
<div class="a" style="left:0;top:0;width:100%;height:23px;background:#e9f3f8"></div>
<div class="a" style="left:0;top:38px;width:100%;height:18px;background:#f0f0f0"></div>
<div class="a" style="left:0;top:430px;width:100%;height:10px;background:#f0f0f0;border-top:1px solid #dcdcdc"></div>
<div class="a" style="left:98.8px;top:431px;width:1px;height:9px;background:#d0d0d0"></div>
<div class="a" style="left:197.2px;top:431px;width:1px;height:9px;background:#d0d0d0"></div>
<div class="a" style="left:296.2px;top:431px;width:1px;height:9px;background:#d0d0d0"></div>
</div>
<svg class="a" style="left:387px;top:256px" width="13" height="9"><rect x="0.5" y="1.5" width="12" height="6" rx="1" fill="#000"/><path d="M1.5 0V9M3.5 0V9M5.5 0V9M7.5 0V9M9.5 0V9M11.5 0V9" stroke="#000" stroke-width="0.8"/></svg>
<div class="t" style="left:403px;top:255px;font-size:9px;color:#1e1e1e">Fuel by RPM and Pressure 3</div>
<div class="t" style="left:386px;top:274px;font-size:9px;color:#1e1e1e">Graph</div>
<div class="t" style="left:421px;top:274px;font-size:9px;color:#1e1e1e">View</div>
<svg class="a" style="left:940px;top:252px" width="90" height="18"><path d="M6 8.5H14" stroke="#222" stroke-width="1.1"/><rect x="41.5" y="4.5" width="8" height="8" fill="none" stroke="#222" stroke-width="1.1"/><path d="M76 4 L85 13 M85 4 L76 13" stroke="#222" stroke-width="1.1"/></svg>
<div class="a" style="left:416px;top:288px;width:17px;height:17px;background:#c5dcf0;border:1px solid #a8cbe8"></div>
<div class="a" style="left:451px;top:288px;width:17px;height:17px;background:#d3e6f6;border:1px solid #b0d2ee"></div>
<div class="a" style="left:486px;top:288px;width:17px;height:17px;background:#d3e6f6;border:1px solid #b0d2ee"></div>
<svg class="a" style="left:381px;top:288px" width="130" height="18"><path d="M3 3V15" stroke="#c0c0c0"/><path d="M31 3V15" stroke="#c0c0c0"/><path d="M11 5 L19 13 M19 5 L11 13" stroke="#f01010" stroke-width="1.8"/><path d="M44 3 L50 9 L44 15 L38 9Z" fill="#111"/><path d="M44 6V12M41 9H47" stroke="#e02020" stroke-width="1.4"/><path d="M56 14 L60 8 L63 11 L67 5" stroke="#e02020" stroke-width="1.2" fill="none"/><path d="M56 10 L60 12 L64 6 L67 9" stroke="#2020e0" stroke-width="1.2" fill="none"/><path d="M73 4V14H86" stroke="#111" fill="none"/><path d="M74 11 L77 7 L80 10 L84 5" stroke="#2020e0" stroke-width="1.2" fill="none"/><path d="M74 13 L78 10 L81 12 L85 9" stroke="#e02020" stroke-width="1.2" fill="none"/><path d="M92 14 L96 6 H103 L99 14Z M94 10 H101 M97.5 6 L95.5 14" stroke="#111" fill="none" stroke-width="1.1"/><rect x="107" y="5" width="9" height="1.6" fill="#e04040"/><rect x="107" y="7.5" width="9" height="1.6" fill="#f0c020"/><rect x="107" y="10" width="9" height="1.6" fill="#30c030"/><rect x="107" y="12.5" width="9" height="1.6" fill="#3030e0"/><path d="M118 4V15" stroke="#111" stroke-width="1.5"/></svg>
<div class="t" style="left:672.5px;top:306.5px;font-size:7.1px;letter-spacing:0;color:#d4d4d4">TunerPro - Version 5.00</div>
<div class="t" style="left:633.5px;top:320px;font-size:11.35px;letter-spacing:0;font-weight:bold;color:#000;line-height:12px">Fuel by RPM and Pressure 3</div>
<svg class="a" style="left:0;top:0" width="1445" height="690"><g stroke="#9a9a9a" stroke-width="0.9" fill="none"><path d="M558.0 594.0V405.0M697.5 517.0V328.0M861.5 583.0V394.0M558.0 405.0L697.5 328.0L861.5 394.0"/><path d="M558.0 594.0L722.0 660.0L861.5 583.0" stroke="#a8a8a8"/></g><g stroke="#8a8a8a" stroke-width="0.9" fill="none" stroke-dasharray="3 3"><path d="M558.0 556.2L697.5 479.2L861.5 545.2M558.0 518.4L697.5 441.4L861.5 507.4M558.0 480.6L697.5 403.6L861.5 469.6M558.0 442.8L697.5 365.8L861.5 431.8"/></g><path d="M656.4 633.6L795.9 556.6M658.0 634.3L797.5 557.3M659.7 634.9L799.2 557.9M661.3 635.6L800.8 558.6M663.0 636.2L802.5 559.2M664.6 636.9L804.1 559.9M666.2 637.6L805.7 560.6M667.9 638.2L807.4 561.2M669.5 638.9L809.0 561.9M671.2 639.5L810.7 562.5M672.8 640.2L812.3 563.2M674.4 640.9L813.9 563.9M676.1 641.5L815.6 564.5M677.7 642.2L817.2 565.2M679.4 642.8L818.9 565.8M681.0 643.5L820.5 566.5M682.6 644.2L822.1 567.2M684.3 644.8L823.8 567.8M685.9 645.5L825.4 568.5M687.6 646.1L827.1 569.1M689.2 646.8L828.7 569.8M690.8 647.5L830.3 570.5M692.5 648.1L832.0 571.1M694.1 648.8L833.6 571.8M695.8 649.4L835.3 572.4M697.4 650.1L836.9 573.1M699.0 650.8L838.5 573.8M700.7 651.4L840.2 574.4M702.3 652.1L841.8 575.1M704.0 652.7L843.5 575.7M705.6 653.4L845.1 576.4M707.2 654.1L846.7 577.1M708.9 654.7L848.4 577.7M710.5 655.4L850.0 578.4M712.2 656.0L851.7 579.0M713.8 656.7L853.3 579.7M715.4 657.4L854.9 580.4M717.1 658.0L856.6 581.0M718.7 658.7L858.2 581.7M720.4 659.3L859.9 582.3M722.0 660.0L861.5 583.0M656.4 633.6L722.0 660.0M660.0 631.6L725.6 658.0M663.6 629.7L729.2 656.1M667.1 627.7L732.7 654.1M670.7 625.7L736.3 652.1M674.3 623.7L739.9 650.1M677.9 621.8L743.5 648.2M681.4 619.8L747.0 646.2M685.0 617.8L750.6 644.2M688.6 615.8L754.2 642.2M692.2 613.9L757.8 640.3M695.7 611.9L761.3 638.3M699.3 609.9L764.9 636.3M702.9 607.9L768.5 634.3M706.5 606.0L772.1 632.4M710.1 604.0L775.7 630.4M713.6 602.0L779.2 628.4M717.2 600.0L782.8 626.4M720.8 598.1L786.4 624.5M724.4 596.1L790.0 622.5M727.9 594.1L793.5 620.5M731.5 592.1L797.1 618.5M735.1 590.2L800.7 616.6M738.7 588.2L804.3 614.6M742.2 586.2L807.8 612.6M745.8 584.2L811.4 610.6M749.4 582.3L815.0 608.7M753.0 580.3L818.6 606.7M756.6 578.3L822.2 604.7M760.1 576.3L825.7 602.7M763.7 574.4L829.3 600.8M767.3 572.4L832.9 598.8M770.9 570.4L836.5 596.8M774.4 568.4L840.0 594.8M778.0 566.5L843.6 592.9M781.6 564.5L847.2 590.9M785.2 562.5L850.8 588.9M788.7 560.5L854.3 586.9M792.3 558.6L857.9 585.0M795.9 556.6L861.5 583.0" stroke="#9c9c9c" stroke-width="0.7" fill="none" stroke-dasharray="1.2 1.3"/><g stroke="#000" stroke-width="0.50" stroke-linejoin="round"><path d="M693.8 464.0L697.3 465.4L701.0 463.3L697.5 461.9Z" fill="#00ffd5"/><path d="M697.3 465.4L700.8 466.8L704.4 464.7L701.0 463.3Z" fill="#00ffd5"/><path d="M700.8 466.8L702.6 467.2L706.2 465.2L704.4 464.7Z" fill="#00ffd4"/><path d="M702.6 467.2L704.3 467.9L707.9 465.9L706.2 465.2Z" fill="#00ffd4"/><path d="M704.3 467.9L706.0 468.6L709.7 466.6L707.9 465.9Z" fill="#00ffd4"/><path d="M706.0 468.6L707.7 469.1L711.4 467.1L709.7 466.6Z" fill="#00ffd3"/><path d="M707.7 469.1L709.5 469.8L713.2 467.8L711.4 467.1Z" fill="#00ffd2"/><path d="M709.5 469.8L711.3 470.3L715.0 468.3L713.2 467.8Z" fill="#00ffd2"/><path d="M711.3 470.3L713.0 471.0L716.6 469.0L715.0 468.3Z" fill="#00ffd1"/><path d="M713.0 471.0L714.8 471.5L718.4 469.5L716.6 469.0Z" fill="#00ffd1"/><path d="M714.8 471.5L716.5 472.2L720.1 470.1L718.4 469.5Z" fill="#00ffd0"/><path d="M716.5 472.2L718.2 472.7L721.9 470.6L720.1 470.1Z" fill="#00ffcf"/><path d="M718.2 472.7L721.7 473.8L725.4 471.8L721.9 470.6Z" fill="#00ffce"/><path d="M721.7 473.8L725.2 475.0L728.8 473.0L725.4 471.8Z" fill="#00ffcd"/><path d="M725.2 475.0L728.7 476.2L732.4 474.2L728.8 473.0Z" fill="#00ffcc"/><path d="M728.7 476.2L732.2 477.4L735.9 475.4L732.4 474.2Z" fill="#00ffcb"/><path d="M732.2 477.4L735.7 478.6L739.3 476.5L735.9 475.4Z" fill="#00ffc9"/><path d="M735.7 478.6L740.1 480.1L743.7 478.1L739.3 476.5Z" fill="#00ffc8"/><path d="M740.1 480.1L744.4 481.6L748.1 479.6L743.7 478.1Z" fill="#00ffc7"/><path d="M744.4 481.6L748.8 482.9L752.4 480.9L748.1 479.6Z" fill="#00ffc5"/><path d="M748.8 482.9L753.1 484.5L756.8 482.4L752.4 480.9Z" fill="#00ffc3"/><path d="M753.1 484.5L757.5 486.0L761.2 484.0L756.8 482.4Z" fill="#00ffc2"/><path d="M757.5 486.0L761.9 384.4L765.5 382.3L761.2 484.0Z" fill="#56ff00"/><path d="M761.9 384.4L766.2 385.2L769.9 383.2L765.5 382.3Z" fill="#ff8f00"/><path d="M766.2 385.2L770.6 391.9L774.2 389.9L769.9 383.2Z" fill="#ff9a00"/><path d="M770.6 391.9L775.0 375.0L778.6 373.0L774.2 389.9Z" fill="#ff7500"/><path d="M775.0 375.0L779.3 367.8L783.0 365.8L778.6 373.0Z" fill="#ff2a00"/><path d="M779.3 367.8L783.7 366.2L787.3 364.2L783.0 365.8Z" fill="#ff0900"/><path d="M783.7 366.2L788.0 370.8L791.7 368.8L787.3 364.2Z" fill="#ff0800"/><path d="M788.0 370.8L792.4 376.9L796.1 374.9L791.7 368.8Z" fill="#ff1b00"/><path d="M792.4 376.9L796.8 381.6L800.4 379.5L796.1 374.9Z" fill="#ff2f00"/><path d="M796.8 381.6L801.1 388.5L804.8 386.5L800.4 379.5Z" fill="#ff4500"/><path d="M801.1 388.5L805.5 394.5L809.1 392.5L804.8 386.5Z" fill="#ff5e00"/><path d="M805.5 394.5L814.2 407.9L817.9 405.9L809.1 392.5Z" fill="#ff8400"/><path d="M814.2 407.9L822.9 424.9L826.6 422.9L817.9 405.9Z" fill="#ffc300"/><path d="M822.9 424.9L831.7 441.9L835.3 439.9L826.6 422.9Z" fill="#f2ff00"/><path d="M831.7 441.9L840.4 454.4L844.0 452.4L835.3 439.9Z" fill="#b5ff00"/><path d="M840.4 454.4L849.1 462.4L852.8 460.4L844.0 452.4Z" fill="#91ff00"/><path d="M849.1 462.4L853.5 465.3L857.1 463.3L852.8 460.4Z" fill="#82ff00"/><path d="M853.5 465.3L855.2 466.7L858.9 464.6L857.1 463.3Z" fill="#7dff00"/><path d="M855.2 466.7L857.1 467.9L860.8 465.9L858.9 464.6Z" fill="#7aff00"/><path d="M857.1 467.9L857.8 474.9L861.5 472.9L860.8 465.9Z" fill="#66ff00"/><path d="M690.2 466.0L693.7 467.4L697.3 465.4L693.8 464.0Z" fill="#00ffd5"/><path d="M693.7 467.4L697.1 468.8L700.8 466.8L697.3 465.4Z" fill="#00ffd5"/><path d="M697.1 468.8L698.9 469.3L702.6 467.2L700.8 466.8Z" fill="#00ffd4"/><path d="M698.9 469.3L700.6 469.9L704.3 467.9L702.6 467.2Z" fill="#00ffd4"/><path d="M700.6 469.9L702.4 470.7L706.0 468.6L704.3 467.9Z" fill="#00ffd4"/><path d="M702.4 470.7L704.1 471.1L707.7 469.1L706.0 468.6Z" fill="#00ffd3"/><path d="M704.1 471.1L705.9 471.8L709.5 469.8L707.7 469.1Z" fill="#00ffd2"/><path d="M705.9 471.8L707.6 472.3L711.3 470.3L709.5 469.8Z" fill="#00ffd2"/><path d="M707.6 472.3L709.3 473.0L713.0 471.0L711.3 470.3Z" fill="#00ffd1"/><path d="M709.3 473.0L711.1 473.5L714.8 471.5L713.0 471.0Z" fill="#00ffd1"/><path d="M711.1 473.5L712.8 474.2L716.5 472.2L714.8 471.5Z" fill="#00ffd0"/><path d="M712.8 474.2L714.6 474.7L718.2 472.7L716.5 472.2Z" fill="#00ffcf"/><path d="M714.6 474.7L718.1 475.8L721.7 473.8L718.2 472.7Z" fill="#00ffce"/><path d="M718.1 475.8L721.5 477.0L725.2 475.0L721.7 473.8Z" fill="#00ffcd"/><path d="M721.5 477.0L725.1 478.2L728.7 476.2L725.2 475.0Z" fill="#00ffcc"/><path d="M725.1 478.2L728.6 479.4L732.2 477.4L728.7 476.2Z" fill="#00ffcb"/><path d="M728.6 479.4L732.0 480.6L735.7 478.6L732.2 477.4Z" fill="#00ffc9"/><path d="M732.0 480.6L736.4 482.1L740.1 480.1L735.7 478.6Z" fill="#00ffc8"/><path d="M736.4 482.1L740.8 483.6L744.4 481.6L740.1 480.1Z" fill="#00ffc7"/><path d="M740.8 483.6L745.1 484.9L748.8 482.9L744.4 481.6Z" fill="#00ffc5"/><path d="M745.1 484.9L749.5 486.5L753.1 484.5L748.8 482.9Z" fill="#00ffc3"/><path d="M749.5 486.5L753.8 488.0L757.5 486.0L753.1 484.5Z" fill="#00ffc2"/><path d="M753.8 488.0L758.2 386.4L761.9 384.4L757.5 486.0Z" fill="#56ff00"/><path d="M758.2 386.4L762.6 387.2L766.2 385.2L761.9 384.4Z" fill="#ff8f00"/><path d="M762.6 387.2L766.9 393.9L770.6 391.9L766.2 385.2Z" fill="#ff9a00"/><path d="M766.9 393.9L771.3 377.0L775.0 375.0L770.6 391.9Z" fill="#ff7500"/><path d="M771.3 377.0L775.7 369.8L779.3 367.8L775.0 375.0Z" fill="#ff2a00"/><path d="M775.7 369.8L780.0 368.2L783.7 366.2L779.3 367.8Z" fill="#ff0900"/><path d="M780.0 368.2L784.4 372.9L788.0 370.8L783.7 366.2Z" fill="#ff0800"/><path d="M784.4 372.9L788.7 378.9L792.4 376.9L788.0 370.8Z" fill="#ff1b00"/><path d="M788.7 378.9L793.1 383.6L796.8 381.6L792.4 376.9Z" fill="#ff2f00"/><path d="M793.1 383.6L797.5 390.5L801.1 388.5L796.8 381.6Z" fill="#ff4500"/><path d="M797.5 390.5L801.8 396.5L805.5 394.5L801.1 388.5Z" fill="#ff5e00"/><path d="M801.8 396.5L810.6 409.9L814.2 407.9L805.5 394.5Z" fill="#ff8400"/><path d="M810.6 409.9L819.3 426.9L822.9 424.9L814.2 407.9Z" fill="#ffc300"/><path d="M819.3 426.9L828.0 443.9L831.7 441.9L822.9 424.9Z" fill="#f2ff00"/><path d="M828.0 443.9L836.7 456.4L840.4 454.4L831.7 441.9Z" fill="#b5ff00"/><path d="M836.7 456.4L845.5 464.4L849.1 462.4L840.4 454.4Z" fill="#91ff00"/><path d="M845.5 464.4L849.8 467.3L853.5 465.3L849.1 462.4Z" fill="#82ff00"/><path d="M849.8 467.3L851.6 468.7L855.2 466.7L853.5 465.3Z" fill="#7dff00"/><path d="M851.6 468.7L853.5 469.9L857.1 467.9L855.2 466.7Z" fill="#7aff00"/><path d="M853.5 469.9L854.2 476.9L857.8 474.9L857.1 467.9Z" fill="#66ff00"/><path d="M686.5 468.0L690.0 469.4L693.7 467.4L690.2 466.0Z" fill="#00ffd5"/><path d="M690.0 469.4L693.5 470.8L697.1 468.8L693.7 467.4Z" fill="#00ffd5"/><path d="M693.5 470.8L695.3 471.3L698.9 469.3L697.1 468.8Z" fill="#00ffd4"/><path d="M695.3 471.3L697.0 472.0L700.6 469.9L698.9 469.3Z" fill="#00ffd4"/><path d="M697.0 472.0L698.7 472.7L702.4 470.7L700.6 469.9Z" fill="#00ffd4"/><path d="M698.7 472.7L700.4 473.1L704.1 471.1L702.4 470.7Z" fill="#00ffd3"/><path d="M700.4 473.1L702.2 473.9L705.9 471.8L704.1 471.1Z" fill="#00ffd2"/><path d="M702.2 473.9L704.0 474.3L707.6 472.3L705.9 471.8Z" fill="#00ffd2"/><path d="M704.0 474.3L705.7 475.0L709.3 473.0L707.6 472.3Z" fill="#00ffd1"/><path d="M705.7 475.0L707.5 475.5L711.1 473.5L709.3 473.0Z" fill="#00ffd1"/><path d="M707.5 475.5L709.1 476.2L712.8 474.2L711.1 473.5Z" fill="#00ffd0"/><path d="M709.1 476.2L710.9 476.7L714.6 474.7L712.8 474.2Z" fill="#00ffcf"/><path d="M710.9 476.7L714.4 477.9L718.1 475.8L714.6 474.7Z" fill="#00ffce"/><path d="M714.4 477.9L717.9 479.0L721.5 477.0L718.1 475.8Z" fill="#00ffcd"/><path d="M717.9 479.0L721.4 480.2L725.1 478.2L721.5 477.0Z" fill="#00ffcc"/><path d="M721.4 480.2L724.9 481.4L728.6 479.4L725.1 478.2Z" fill="#00ffcb"/><path d="M724.9 481.4L728.4 482.6L732.0 480.6L728.6 479.4Z" fill="#00ffc9"/><path d="M728.4 482.6L732.7 484.1L736.4 482.1L732.0 480.6Z" fill="#00ffc8"/><path d="M732.7 484.1L737.1 485.6L740.8 483.6L736.4 482.1Z" fill="#00ffc7"/><path d="M737.1 485.6L741.5 487.0L745.1 484.9L740.8 483.6Z" fill="#00ffc5"/><path d="M741.5 487.0L745.8 488.5L749.5 486.5L745.1 484.9Z" fill="#00ffc3"/><path d="M745.8 488.5L750.2 490.0L753.8 488.0L749.5 486.5Z" fill="#00ffc2"/><path d="M750.2 490.0L754.6 388.4L758.2 386.4L753.8 488.0Z" fill="#56ff00"/><path d="M754.6 388.4L758.9 389.3L762.6 387.2L758.2 386.4Z" fill="#ff8f00"/><path d="M758.9 389.3L763.3 396.0L766.9 393.9L762.6 387.2Z" fill="#ff9a00"/><path d="M763.3 396.0L767.6 379.1L771.3 377.0L766.9 393.9Z" fill="#ff7500"/><path d="M767.6 379.1L772.0 371.8L775.7 369.8L771.3 377.0Z" fill="#ff2a00"/><path d="M772.0 371.8L776.4 370.2L780.0 368.2L775.7 369.8Z" fill="#ff0900"/><path d="M776.4 370.2L780.7 374.9L784.4 372.9L780.0 368.2Z" fill="#ff0800"/><path d="M780.7 374.9L785.1 380.9L788.7 378.9L784.4 372.9Z" fill="#ff1b00"/><path d="M785.1 380.9L789.5 385.6L793.1 383.6L788.7 378.9Z" fill="#ff2f00"/><path d="M789.5 385.6L793.8 392.5L797.5 390.5L793.1 383.6Z" fill="#ff4500"/><path d="M793.8 392.5L798.2 398.5L801.8 396.5L797.5 390.5Z" fill="#ff5e00"/><path d="M798.2 398.5L806.9 411.9L810.6 409.9L801.8 396.5Z" fill="#ff8400"/><path d="M806.9 411.9L815.6 428.9L819.3 426.9L810.6 409.9Z" fill="#ffc300"/><path d="M815.6 428.9L824.4 445.9L828.0 443.9L819.3 426.9Z" fill="#f2ff00"/><path d="M824.4 445.9L833.1 458.4L836.7 456.4L828.0 443.9Z" fill="#b5ff00"/><path d="M833.1 458.4L841.8 466.4L845.5 464.4L836.7 456.4Z" fill="#91ff00"/><path d="M841.8 466.4L846.2 469.3L849.8 467.3L845.5 464.4Z" fill="#82ff00"/><path d="M846.2 469.3L847.9 470.7L851.6 468.7L849.8 467.3Z" fill="#7dff00"/><path d="M847.9 470.7L849.8 471.9L853.5 469.9L851.6 468.7Z" fill="#7aff00"/><path d="M849.8 471.9L850.5 478.9L854.2 476.9L853.5 469.9Z" fill="#66ff00"/><path d="M682.9 470.0L686.4 471.4L690.0 469.4L686.5 468.0Z" fill="#00ffd5"/><path d="M686.4 471.4L689.8 472.8L693.5 470.8L690.0 469.4Z" fill="#00ffd5"/><path d="M689.8 472.8L691.6 473.3L695.3 471.3L693.5 470.8Z" fill="#00ffd4"/><path d="M691.6 473.3L693.3 474.0L697.0 472.0L695.3 471.3Z" fill="#00ffd4"/><path d="M693.3 474.0L695.1 474.7L698.7 472.7L697.0 472.0Z" fill="#00ffd4"/><path d="M695.1 474.7L696.8 475.2L700.4 473.1L698.7 472.7Z" fill="#00ffd3"/><path d="M696.8 475.2L698.5 475.9L702.2 473.9L700.4 473.1Z" fill="#00ffd2"/><path d="M698.5 475.9L700.3 476.4L704.0 474.3L702.2 473.9Z" fill="#00ffd2"/><path d="M700.3 476.4L702.0 477.0L705.7 475.0L704.0 474.3Z" fill="#00ffd1"/><path d="M702.0 477.0L703.8 477.5L707.5 475.5L705.7 475.0Z" fill="#00ffd1"/><path d="M703.8 477.5L705.5 478.2L709.1 476.2L707.5 475.5Z" fill="#00ffd0"/><path d="M705.5 478.2L707.3 478.7L710.9 476.7L709.1 476.2Z" fill="#00ffcf"/><path d="M707.3 478.7L710.7 479.9L714.4 477.9L710.9 476.7Z" fill="#00ffce"/><path d="M710.7 479.9L714.2 481.1L717.9 479.0L714.4 477.9Z" fill="#00ffcd"/><path d="M714.2 481.1L717.8 482.3L721.4 480.2L717.9 479.0Z" fill="#00ffcc"/><path d="M717.8 482.3L721.3 483.4L724.9 481.4L721.4 480.2Z" fill="#00ffcb"/><path d="M721.3 483.4L724.7 484.6L728.4 482.6L724.9 481.4Z" fill="#00ffc9"/><path d="M724.7 484.6L729.1 486.1L732.7 484.1L728.4 482.6Z" fill="#00ffc8"/><path d="M729.1 486.1L733.4 487.7L737.1 485.6L732.7 484.1Z" fill="#00ffc7"/><path d="M733.4 487.7L737.8 489.0L741.5 487.0L737.1 485.6Z" fill="#00ffc5"/><path d="M737.8 489.0L742.2 490.5L745.8 488.5L741.5 487.0Z" fill="#00ffc3"/><path d="M742.2 490.5L746.5 492.0L750.2 490.0L745.8 488.5Z" fill="#00ffc2"/><path d="M746.5 492.0L750.9 390.4L754.6 388.4L750.2 490.0Z" fill="#56ff00"/><path d="M750.9 390.4L755.3 391.3L758.9 389.3L754.6 388.4Z" fill="#ff8f00"/><path d="M755.3 391.3L759.6 398.0L763.3 396.0L758.9 389.3Z" fill="#ff9a00"/><path d="M759.6 398.0L764.0 381.1L767.6 379.1L763.3 396.0Z" fill="#ff7500"/><path d="M764.0 381.1L768.4 373.8L772.0 371.8L767.6 379.1Z" fill="#ff2a00"/><path d="M768.4 373.8L772.7 372.2L776.4 370.2L772.0 371.8Z" fill="#ff0900"/><path d="M772.7 372.2L777.1 376.9L780.7 374.9L776.4 370.2Z" fill="#ff0800"/><path d="M777.1 376.9L781.4 382.9L785.1 380.9L780.7 374.9Z" fill="#ff1b00"/><path d="M781.4 382.9L785.8 387.6L789.5 385.6L785.1 380.9Z" fill="#ff2f00"/><path d="M785.8 387.6L790.2 394.5L793.8 392.5L789.5 385.6Z" fill="#ff4500"/><path d="M790.2 394.5L794.5 400.6L798.2 398.5L793.8 392.5Z" fill="#ff5e00"/><path d="M794.5 400.6L803.3 414.0L806.9 411.9L798.2 398.5Z" fill="#ff8400"/><path d="M803.3 414.0L812.0 430.9L815.6 428.9L806.9 411.9Z" fill="#ffc300"/><path d="M812.0 430.9L820.7 447.9L824.4 445.9L815.6 428.9Z" fill="#f2ff00"/><path d="M820.7 447.9L829.4 460.4L833.1 458.4L824.4 445.9Z" fill="#b5ff00"/><path d="M829.4 460.4L838.2 468.5L841.8 466.4L833.1 458.4Z" fill="#91ff00"/><path d="M838.2 468.5L842.5 471.3L846.2 469.3L841.8 466.4Z" fill="#82ff00"/><path d="M842.5 471.3L844.3 472.7L847.9 470.7L846.2 469.3Z" fill="#7dff00"/><path d="M844.3 472.7L846.2 473.9L849.8 471.9L847.9 470.7Z" fill="#7aff00"/><path d="M846.2 473.9L846.9 481.0L850.5 478.9L849.8 471.9Z" fill="#66ff00"/><path d="M679.2 472.0L682.7 473.4L686.4 471.4L682.9 470.0Z" fill="#00ffd5"/><path d="M682.7 473.4L686.2 474.8L689.8 472.8L686.4 471.4Z" fill="#00ffd5"/><path d="M686.2 474.8L687.9 475.3L691.6 473.3L689.8 472.8Z" fill="#00ffd4"/><path d="M687.9 475.3L689.6 476.0L693.3 474.0L691.6 473.3Z" fill="#00ffd4"/><path d="M689.6 476.0L691.4 476.7L695.1 474.7L693.3 474.0Z" fill="#00ffd4"/><path d="M691.4 476.7L693.1 477.2L696.8 475.2L695.1 474.7Z" fill="#00ffd3"/><path d="M693.1 477.2L694.9 477.9L698.5 475.9L696.8 475.2Z" fill="#00ffd2"/><path d="M694.9 477.9L696.7 478.4L700.3 476.4L698.5 475.9Z" fill="#00ffd2"/><path d="M696.7 478.4L698.4 479.1L702.0 477.0L700.3 476.4Z" fill="#00ffd1"/><path d="M698.4 479.1L700.1 479.3L703.8 477.5L702.0 477.0Z" fill="#00ffd0"/><path d="M700.1 479.3L701.8 480.0L705.5 478.2L703.8 477.5Z" fill="#00ffcf"/><path d="M701.8 480.0L703.6 480.5L707.3 478.7L705.5 478.2Z" fill="#00ffcf"/><path d="M703.6 480.5L707.1 481.7L710.7 479.9L707.3 478.7Z" fill="#00ffce"/><path d="M707.1 481.7L710.6 482.8L714.2 481.1L710.7 479.9Z" fill="#00ffcc"/><path d="M710.6 482.8L714.1 484.3L717.8 482.3L714.2 481.1Z" fill="#00ffcb"/><path d="M714.1 484.3L717.6 485.5L721.3 483.4L717.8 482.3Z" fill="#00ffcb"/><path d="M717.6 485.5L721.1 486.6L724.7 484.6L721.3 483.4Z" fill="#00ffc9"/><path d="M721.1 486.6L725.4 488.2L729.1 486.1L724.7 484.6Z" fill="#00ffc8"/><path d="M725.4 488.2L729.8 489.7L733.4 487.7L729.1 486.1Z" fill="#00ffc7"/><path d="M729.8 489.7L734.2 491.0L737.8 489.0L733.4 487.7Z" fill="#00ffc5"/><path d="M734.2 491.0L738.5 492.5L742.2 490.5L737.8 489.0Z" fill="#00ffc3"/><path d="M738.5 492.5L742.9 494.1L746.5 492.0L742.2 490.5Z" fill="#00ffc2"/><path d="M742.9 494.1L747.2 392.4L750.9 390.4L746.5 492.0Z" fill="#56ff00"/><path d="M747.2 392.4L751.6 393.3L755.3 391.3L750.9 390.4Z" fill="#ff8f00"/><path d="M751.6 393.3L756.0 400.0L759.6 398.0L755.3 391.3Z" fill="#ff9a00"/><path d="M756.0 400.0L760.3 383.1L764.0 381.1L759.6 398.0Z" fill="#ff7500"/><path d="M760.3 383.1L764.7 375.9L768.4 373.8L764.0 381.1Z" fill="#ff2a00"/><path d="M764.7 375.9L769.1 374.2L772.7 372.2L768.4 373.8Z" fill="#ff0900"/><path d="M769.1 374.2L773.4 378.9L777.1 376.9L772.7 372.2Z" fill="#ff0800"/><path d="M773.4 378.9L777.8 384.9L781.4 382.9L777.1 376.9Z" fill="#ff1b00"/><path d="M777.8 384.9L782.1 389.6L785.8 387.6L781.4 382.9Z" fill="#ff2f00"/><path d="M782.1 389.6L786.5 396.5L790.2 394.5L785.8 387.6Z" fill="#ff4500"/><path d="M786.5 396.5L790.9 402.6L794.5 400.6L790.2 394.5Z" fill="#ff5e00"/><path d="M790.9 402.6L799.6 416.0L803.3 414.0L794.5 400.6Z" fill="#ff8400"/><path d="M799.6 416.0L808.3 433.0L812.0 430.9L803.3 414.0Z" fill="#ffc300"/><path d="M808.3 433.0L817.0 450.0L820.7 447.9L812.0 430.9Z" fill="#f2ff00"/><path d="M817.0 450.0L825.8 462.5L829.4 460.4L820.7 447.9Z" fill="#b5ff00"/><path d="M825.8 462.5L834.5 470.5L838.2 468.5L829.4 460.4Z" fill="#91ff00"/><path d="M834.5 470.5L838.9 473.3L842.5 471.3L838.2 468.5Z" fill="#82ff00"/><path d="M838.9 473.3L840.6 474.7L844.3 472.7L842.5 471.3Z" fill="#7dff00"/><path d="M840.6 474.7L842.5 475.9L846.2 473.9L844.3 472.7Z" fill="#7aff00"/><path d="M842.5 475.9L843.2 483.0L846.9 481.0L846.2 473.9Z" fill="#66ff00"/><path d="M675.6 474.0L679.0 475.4L682.7 473.4L679.2 472.0Z" fill="#00ffd5"/><path d="M679.0 475.4L682.5 476.8L686.2 474.8L682.7 473.4Z" fill="#00ffd5"/><path d="M682.5 476.8L684.3 477.3L687.9 475.3L686.2 474.8Z" fill="#00ffd4"/><path d="M684.3 477.3L686.0 478.0L689.6 476.0L687.9 475.3Z" fill="#00ffd4"/><path d="M686.0 478.0L687.8 478.7L691.4 476.7L689.6 476.0Z" fill="#00ffd4"/><path d="M687.8 478.7L689.5 479.2L693.1 477.2L691.4 476.7Z" fill="#00ffd3"/><path d="M689.5 479.2L691.2 479.9L694.9 477.9L693.1 477.2Z" fill="#00ffd2"/><path d="M691.2 479.9L693.0 480.2L696.7 478.4L694.9 477.9Z" fill="#00ffd2"/><path d="M693.0 480.2L694.7 480.9L698.4 479.1L696.7 478.4Z" fill="#00ffd1"/><path d="M694.7 480.9L696.5 481.3L700.1 479.3L698.4 479.1Z" fill="#00ffd0"/><path d="M696.5 481.3L698.2 481.8L701.8 480.0L700.1 479.3Z" fill="#00ffce"/><path d="M698.2 481.8L700.0 482.3L703.6 480.5L701.8 480.0Z" fill="#00ffce"/><path d="M700.0 482.3L703.4 483.5L707.1 481.7L703.6 480.5Z" fill="#00ffcc"/><path d="M703.4 483.5L706.9 484.9L710.6 482.8L707.1 481.7Z" fill="#00ffcb"/><path d="M706.9 484.9L710.5 486.1L714.1 484.3L710.6 482.8Z" fill="#00ffcb"/><path d="M710.5 486.1L713.9 487.2L717.6 485.5L714.1 484.3Z" fill="#00ffca"/><path d="M713.9 487.2L717.4 488.6L721.1 486.6L717.6 485.5Z" fill="#00ffc9"/><path d="M717.4 488.6L721.8 490.2L725.4 488.2L721.1 486.6Z" fill="#00ffc8"/><path d="M721.8 490.2L726.1 491.7L729.8 489.7L725.4 488.2Z" fill="#00ffc7"/><path d="M726.1 491.7L730.5 493.0L734.2 491.0L729.8 489.7Z" fill="#00ffc5"/><path d="M730.5 493.0L734.9 494.5L738.5 492.5L734.2 491.0Z" fill="#00ffc3"/><path d="M734.9 494.5L739.2 496.1L742.9 494.1L738.5 492.5Z" fill="#00ffc2"/><path d="M739.2 496.1L743.6 394.4L747.2 392.4L742.9 494.1Z" fill="#56ff00"/><path d="M743.6 394.4L748.0 395.3L751.6 393.3L747.2 392.4Z" fill="#ff8f00"/><path d="M748.0 395.3L752.3 402.0L756.0 400.0L751.6 393.3Z" fill="#ff9a00"/><path d="M752.3 402.0L756.7 385.1L760.3 383.1L756.0 400.0Z" fill="#ff7500"/><path d="M756.7 385.1L761.0 377.9L764.7 375.9L760.3 383.1Z" fill="#ff2a00"/><path d="M761.0 377.9L765.4 376.3L769.1 374.2L764.7 375.9Z" fill="#ff0900"/><path d="M765.4 376.3L769.8 380.9L773.4 378.9L769.1 374.2Z" fill="#ff0800"/><path d="M769.8 380.9L774.1 387.0L777.8 384.9L773.4 378.9Z" fill="#ff1b00"/><path d="M774.1 387.0L778.5 391.6L782.1 389.6L777.8 384.9Z" fill="#ff2f00"/><path d="M778.5 391.6L782.9 398.6L786.5 396.5L782.1 389.6Z" fill="#ff4500"/><path d="M782.9 398.6L787.2 404.6L790.9 402.6L786.5 396.5Z" fill="#ff5e00"/><path d="M787.2 404.6L795.9 418.0L799.6 416.0L790.9 402.6Z" fill="#ff8400"/><path d="M795.9 418.0L804.7 435.0L808.3 433.0L799.6 416.0Z" fill="#ffc300"/><path d="M804.7 435.0L813.4 452.0L817.0 450.0L808.3 433.0Z" fill="#f2ff00"/><path d="M813.4 452.0L822.1 464.5L825.8 462.5L817.0 450.0Z" fill="#b5ff00"/><path d="M822.1 464.5L830.8 472.5L834.5 470.5L825.8 462.5Z" fill="#91ff00"/><path d="M830.8 472.5L835.2 475.4L838.9 473.3L834.5 470.5Z" fill="#82ff00"/><path d="M835.2 475.4L836.9 476.7L840.6 474.7L838.9 473.3Z" fill="#7dff00"/><path d="M836.9 476.7L838.9 478.0L842.5 475.9L840.6 474.7Z" fill="#7aff00"/><path d="M838.9 478.0L839.6 485.0L843.2 483.0L842.5 475.9Z" fill="#66ff00"/><path d="M671.9 476.1L675.4 477.5L679.0 475.4L675.6 474.0Z" fill="#00ffd5"/><path d="M675.4 477.5L678.9 478.9L682.5 476.8L679.0 475.4Z" fill="#00ffd5"/><path d="M678.9 478.9L680.6 479.6L684.3 477.3L682.5 476.8Z" fill="#00ffd5"/><path d="M680.6 479.6L682.3 480.3L686.0 478.0L684.3 477.3Z" fill="#00ffd4"/><path d="M682.3 480.3L684.1 481.0L687.8 478.7L686.0 478.0Z" fill="#00ffd4"/><path d="M684.1 481.0L685.8 481.4L689.5 479.2L687.8 478.7Z" fill="#00ffd4"/><path d="M685.8 481.4L687.6 481.9L691.2 479.9L689.5 479.2Z" fill="#00ffd3"/><path d="M687.6 481.9L689.4 482.2L693.0 480.2L691.2 479.9Z" fill="#00ffd1"/><path d="M689.4 482.2L691.1 482.6L694.7 480.9L693.0 480.2Z" fill="#00ffd0"/><path d="M691.1 482.6L692.8 482.9L696.5 481.3L694.7 480.9Z" fill="#00ffce"/><path d="M692.8 482.9L694.5 483.6L698.2 481.8L696.5 481.3Z" fill="#00ffcd"/><path d="M694.5 483.6L696.3 484.1L700.0 482.3L698.2 481.8Z" fill="#00ffcc"/><path d="M696.3 484.1L699.8 485.3L703.4 483.5L700.0 482.3Z" fill="#00ffcb"/><path d="M699.8 485.3L703.3 486.4L706.9 484.9L703.4 483.5Z" fill="#00ffca"/><path d="M703.3 486.4L706.8 487.9L710.5 486.1L706.9 484.9Z" fill="#00ffca"/><path d="M706.8 487.9L710.3 489.3L713.9 487.2L710.5 486.1Z" fill="#00ffc9"/><path d="M710.3 489.3L713.8 490.4L717.4 488.6L713.9 487.2Z" fill="#00ffc8"/><path d="M713.8 490.4L718.1 492.2L721.8 490.2L717.4 488.6Z" fill="#00ffc8"/><path d="M718.1 492.2L722.5 493.7L726.1 491.7L721.8 490.2Z" fill="#00ffc7"/><path d="M722.5 493.7L726.8 495.0L730.5 493.0L726.1 491.7Z" fill="#00ffc5"/><path d="M726.8 495.0L731.2 496.6L734.9 494.5L730.5 493.0Z" fill="#00ffc3"/><path d="M731.2 496.6L735.6 498.1L739.2 496.1L734.9 494.5Z" fill="#00ffc2"/><path d="M735.6 498.1L739.9 396.5L743.6 394.4L739.2 496.1Z" fill="#56ff00"/><path d="M739.9 396.5L744.3 397.3L748.0 395.3L743.6 394.4Z" fill="#ff8f00"/><path d="M744.3 397.3L748.7 404.0L752.3 402.0L748.0 395.3Z" fill="#ff9a00"/><path d="M748.7 404.0L753.0 387.1L756.7 385.1L752.3 402.0Z" fill="#ff7500"/><path d="M753.0 387.1L757.4 379.9L761.0 377.9L756.7 385.1Z" fill="#ff2a00"/><path d="M757.4 379.9L761.7 378.3L765.4 376.3L761.0 377.9Z" fill="#ff0900"/><path d="M761.7 378.3L766.1 383.0L769.8 380.9L765.4 376.3Z" fill="#ff0800"/><path d="M766.1 383.0L770.5 389.0L774.1 387.0L769.8 380.9Z" fill="#ff1b00"/><path d="M770.5 389.0L774.8 393.7L778.5 391.6L774.1 387.0Z" fill="#ff2f00"/><path d="M774.8 393.7L779.2 400.6L782.9 398.6L778.5 391.6Z" fill="#ff4500"/><path d="M779.2 400.6L783.6 406.6L787.2 404.6L782.9 398.6Z" fill="#ff5e00"/><path d="M783.6 406.6L792.3 420.0L795.9 418.0L787.2 404.6Z" fill="#ff8400"/><path d="M792.3 420.0L801.0 437.0L804.7 435.0L795.9 418.0Z" fill="#ffc300"/><path d="M801.0 437.0L809.7 454.0L813.4 452.0L804.7 435.0Z" fill="#f2ff00"/><path d="M809.7 454.0L818.5 466.5L822.1 464.5L813.4 452.0Z" fill="#b5ff00"/><path d="M818.5 466.5L827.2 474.5L830.8 472.5L822.1 464.5Z" fill="#91ff00"/><path d="M827.2 474.5L831.5 477.4L835.2 475.4L830.8 472.5Z" fill="#82ff00"/><path d="M831.5 477.4L833.3 478.8L836.9 476.7L835.2 475.4Z" fill="#7dff00"/><path d="M833.3 478.8L835.2 480.0L838.9 478.0L836.9 476.7Z" fill="#7aff00"/><path d="M835.2 480.0L835.9 487.0L839.6 485.0L838.9 478.0Z" fill="#66ff00"/><path d="M668.3 478.1L671.7 479.5L675.4 477.5L671.9 476.1Z" fill="#00ffd5"/><path d="M671.7 479.5L675.2 480.9L678.9 478.9L675.4 477.5Z" fill="#00ffd5"/><path d="M675.2 480.9L677.0 481.6L680.6 479.6L678.9 478.9Z" fill="#00ffd5"/><path d="M677.0 481.6L678.7 482.5L682.3 480.3L680.6 479.6Z" fill="#00ffd5"/><path d="M678.7 482.5L680.5 483.2L684.1 481.0L682.3 480.3Z" fill="#00ffd5"/><path d="M680.5 483.2L682.1 483.7L685.8 481.4L684.1 481.0Z" fill="#00ffd5"/><path d="M682.1 483.7L683.9 483.9L687.6 481.9L685.8 481.4Z" fill="#00ffd3"/><path d="M683.9 483.9L685.7 484.0L689.4 482.2L687.6 481.9Z" fill="#00ffd1"/><path d="M685.7 484.0L687.4 484.2L691.1 482.6L689.4 482.2Z" fill="#00ffce"/><path d="M687.4 484.2L689.2 484.5L692.8 482.9L691.1 482.6Z" fill="#00ffcc"/><path d="M689.2 484.5L690.9 484.9L694.5 483.6L692.8 482.9Z" fill="#00ffcb"/><path d="M690.9 484.9L692.7 485.4L696.3 484.1L694.5 483.6Z" fill="#00ffca"/><path d="M692.7 485.4L696.1 486.6L699.8 485.3L696.3 484.1Z" fill="#00ffc9"/><path d="M696.1 486.6L699.6 488.0L703.3 486.4L699.8 485.3Z" fill="#00ffc8"/><path d="M699.6 488.0L703.2 489.4L706.8 487.9L703.3 486.4Z" fill="#00ffc8"/><path d="M703.2 489.4L706.6 491.1L710.3 489.3L706.8 487.9Z" fill="#00ffc8"/><path d="M706.6 491.1L710.1 492.5L713.8 490.4L710.3 489.3Z" fill="#00ffc8"/><path d="M710.1 492.5L714.5 494.0L718.1 492.2L713.8 490.4Z" fill="#00ffc7"/><path d="M714.5 494.0L718.8 495.7L722.5 493.7L718.1 492.2Z" fill="#00ffc7"/><path d="M718.8 495.7L723.2 497.0L726.8 495.0L722.5 493.7Z" fill="#00ffc5"/><path d="M723.2 497.0L727.6 498.6L731.2 496.6L726.8 495.0Z" fill="#00ffc3"/><path d="M727.6 498.6L731.9 500.1L735.6 498.1L731.2 496.6Z" fill="#00ffc2"/><path d="M731.9 500.1L736.3 398.5L739.9 396.5L735.6 498.1Z" fill="#56ff00"/><path d="M736.3 398.5L740.6 399.3L744.3 397.3L739.9 396.5Z" fill="#ff8f00"/><path d="M740.6 399.3L745.0 406.0L748.7 404.0L744.3 397.3Z" fill="#ff9a00"/><path d="M745.0 406.0L749.4 389.1L753.0 387.1L748.7 404.0Z" fill="#ff7500"/><path d="M749.4 389.1L753.7 381.9L757.4 379.9L753.0 387.1Z" fill="#ff2a00"/><path d="M753.7 381.9L758.1 380.3L761.7 378.3L757.4 379.9Z" fill="#ff0900"/><path d="M758.1 380.3L762.5 385.0L766.1 383.0L761.7 378.3Z" fill="#ff0800"/><path d="M762.5 385.0L766.8 391.0L770.5 389.0L766.1 383.0Z" fill="#ff1b00"/><path d="M766.8 391.0L771.2 395.7L774.8 393.7L770.5 389.0Z" fill="#ff2f00"/><path d="M771.2 395.7L775.5 402.6L779.2 400.6L774.8 393.7Z" fill="#ff4500"/><path d="M775.5 402.6L779.9 408.6L783.6 406.6L779.2 400.6Z" fill="#ff5e00"/><path d="M779.9 408.6L788.6 422.0L792.3 420.0L783.6 406.6Z" fill="#ff8400"/><path d="M788.6 422.0L797.4 439.0L801.0 437.0L792.3 420.0Z" fill="#ffc300"/><path d="M797.4 439.0L806.1 456.0L809.7 454.0L801.0 437.0Z" fill="#f2ff00"/><path d="M806.1 456.0L814.8 468.5L818.5 466.5L809.7 454.0Z" fill="#b5ff00"/><path d="M814.8 468.5L823.5 476.5L827.2 474.5L818.5 466.5Z" fill="#91ff00"/><path d="M823.5 476.5L827.9 479.4L831.5 477.4L827.2 474.5Z" fill="#82ff00"/><path d="M827.9 479.4L829.6 480.8L833.3 478.8L831.5 477.4Z" fill="#7dff00"/><path d="M829.6 480.8L831.6 482.0L835.2 480.0L833.3 478.8Z" fill="#7aff00"/><path d="M831.6 482.0L832.3 489.0L835.9 487.0L835.2 480.0Z" fill="#66ff00"/><path d="M664.6 480.1L668.1 481.5L671.7 479.5L668.3 478.1Z" fill="#00ffd5"/><path d="M668.1 481.5L671.5 482.9L675.2 480.9L671.7 479.5Z" fill="#00ffd5"/><path d="M671.5 482.9L673.3 483.8L677.0 481.6L675.2 480.9Z" fill="#00ffd5"/><path d="M673.3 483.8L675.0 485.0L678.7 482.5L677.0 481.6Z" fill="#00ffd6"/><path d="M675.0 485.0L676.8 485.9L680.5 483.2L678.7 482.5Z" fill="#00ffd8"/><path d="M676.8 485.9L678.5 485.9L682.1 483.7L680.5 483.2Z" fill="#00ffd7"/><path d="M678.5 485.9L680.3 486.0L683.9 483.9L682.1 483.7Z" fill="#00ffd4"/><path d="M680.3 486.0L682.0 485.8L685.7 484.0L683.9 483.9Z" fill="#00ffd0"/><path d="M682.0 485.8L683.7 485.8L687.4 484.2L685.7 484.0Z" fill="#00ffcd"/><path d="M683.7 485.8L685.5 485.8L689.2 484.5L687.4 484.2Z" fill="#00ffca"/><path d="M685.5 485.8L687.2 486.1L690.9 484.9L689.2 484.5Z" fill="#00ffc7"/><path d="M687.2 486.1L689.0 486.3L692.7 485.4L690.9 484.9Z" fill="#00ffc5"/><path d="M689.0 486.3L692.5 487.7L696.1 486.6L692.7 485.4Z" fill="#00ffc4"/><path d="M692.5 487.7L695.9 489.3L699.6 488.0L696.1 486.6Z" fill="#00ffc4"/><path d="M695.9 489.3L699.5 491.0L703.2 489.4L699.6 488.0Z" fill="#00ffc5"/><path d="M699.5 491.0L703.0 492.6L706.6 491.1L703.2 489.4Z" fill="#00ffc6"/><path d="M703.0 492.6L706.4 494.2L710.1 492.5L706.6 491.1Z" fill="#00ffc7"/><path d="M706.4 494.2L710.8 496.0L714.5 494.0L710.1 492.5Z" fill="#00ffc7"/><path d="M710.8 496.0L715.2 497.8L718.8 495.7L714.5 494.0Z" fill="#00ffc6"/><path d="M715.2 497.8L719.5 499.1L723.2 497.0L718.8 495.7Z" fill="#00ffc5"/><path d="M719.5 499.1L723.9 500.6L727.6 498.6L723.2 497.0Z" fill="#00ffc3"/><path d="M723.9 500.6L728.3 502.1L731.9 500.1L727.6 498.6Z" fill="#00ffc2"/><path d="M728.3 502.1L732.6 400.5L736.3 398.5L731.9 500.1Z" fill="#56ff00"/><path d="M732.6 400.5L737.0 401.4L740.6 399.3L736.3 398.5Z" fill="#ff8f00"/><path d="M737.0 401.4L741.3 408.1L745.0 406.0L740.6 399.3Z" fill="#ff9a00"/><path d="M741.3 408.1L745.7 391.2L749.4 389.1L745.0 406.0Z" fill="#ff7500"/><path d="M745.7 391.2L750.1 383.9L753.7 381.9L749.4 389.1Z" fill="#ff2a00"/><path d="M750.1 383.9L754.4 382.3L758.1 380.3L753.7 381.9Z" fill="#ff0900"/><path d="M754.4 382.3L758.8 387.0L762.5 385.0L758.1 380.3Z" fill="#ff0800"/><path d="M758.8 387.0L763.2 393.0L766.8 391.0L762.5 385.0Z" fill="#ff1b00"/><path d="M763.2 393.0L767.5 397.7L771.2 395.7L766.8 391.0Z" fill="#ff2f00"/><path d="M767.5 397.7L771.9 404.6L775.5 402.6L771.2 395.7Z" fill="#ff4500"/><path d="M771.9 404.6L776.2 410.6L779.9 408.6L775.5 402.6Z" fill="#ff5e00"/><path d="M776.2 410.6L785.0 424.0L788.6 422.0L779.9 408.6Z" fill="#ff8400"/><path d="M785.0 424.0L793.7 441.0L797.4 439.0L788.6 422.0Z" fill="#ffc300"/><path d="M793.7 441.0L802.4 458.0L806.1 456.0L797.4 439.0Z" fill="#f2ff00"/><path d="M802.4 458.0L811.1 470.5L814.8 468.5L806.1 456.0Z" fill="#b5ff00"/><path d="M811.1 470.5L819.9 478.5L823.5 476.5L814.8 468.5Z" fill="#91ff00"/><path d="M819.9 478.5L824.2 481.4L827.9 479.4L823.5 476.5Z" fill="#82ff00"/><path d="M824.2 481.4L826.0 482.8L829.6 480.8L827.9 479.4Z" fill="#7dff00"/><path d="M826.0 482.8L827.9 484.0L831.6 482.0L829.6 480.8Z" fill="#7aff00"/><path d="M827.9 484.0L828.6 491.0L832.3 489.0L831.6 482.0Z" fill="#66ff00"/><path d="M660.9 482.1L664.4 483.5L668.1 481.5L664.6 480.1Z" fill="#00ffd5"/><path d="M664.4 483.5L667.9 484.9L671.5 482.9L668.1 481.5Z" fill="#00ffd5"/><path d="M667.9 484.9L669.7 486.3L673.3 483.8L671.5 482.9Z" fill="#00ffd6"/><path d="M669.7 486.3L671.4 487.9L675.0 485.0L673.3 483.8Z" fill="#00ffd9"/><path d="M671.4 487.9L673.1 488.8L676.8 485.9L675.0 485.0Z" fill="#00ffdc"/><path d="M673.1 488.8L674.8 488.6L678.5 485.9L676.8 485.9Z" fill="#00ffda"/><path d="M674.8 488.6L676.6 488.2L680.3 486.0L678.5 485.9Z" fill="#00ffd5"/><path d="M676.6 488.2L678.4 487.3L682.0 485.8L680.3 486.0Z" fill="#00ffd0"/><path d="M678.4 487.3L680.1 487.1L683.7 485.8L682.0 485.8Z" fill="#00ffca"/><path d="M680.1 487.1L681.9 486.7L685.5 485.8L683.7 485.8Z" fill="#00ffc6"/><path d="M681.9 486.7L683.6 486.7L687.2 486.1L685.5 485.8Z" fill="#00ffc2"/><path d="M683.6 486.7L685.3 487.0L689.0 486.3L687.2 486.1Z" fill="#00ffbf"/><path d="M685.3 487.0L688.8 488.4L692.5 487.7L689.0 486.3Z" fill="#00ffbe"/><path d="M688.8 488.4L692.3 490.2L695.9 489.3L692.5 487.7Z" fill="#00ffbf"/><path d="M692.3 490.2L695.8 492.3L699.5 491.0L695.9 489.3Z" fill="#00ffc1"/><path d="M695.8 492.3L699.3 494.2L703.0 492.6L699.5 491.0Z" fill="#00ffc3"/><path d="M699.3 494.2L702.8 496.0L706.4 494.2L703.0 492.6Z" fill="#00ffc5"/><path d="M702.8 496.0L707.2 497.8L710.8 496.0L706.4 494.2Z" fill="#00ffc6"/><path d="M707.2 497.8L711.5 499.5L715.2 497.8L710.8 496.0Z" fill="#00ffc6"/><path d="M711.5 499.5L715.9 501.1L719.5 499.1L715.2 497.8Z" fill="#00ffc5"/><path d="M715.9 501.1L720.2 502.6L723.9 500.6L719.5 499.1Z" fill="#00ffc3"/><path d="M720.2 502.6L724.6 504.1L728.3 502.1L723.9 500.6Z" fill="#00ffc2"/><path d="M724.6 504.1L729.0 402.5L732.6 400.5L728.3 502.1Z" fill="#56ff00"/><path d="M729.0 402.5L733.3 403.4L737.0 401.4L732.6 400.5Z" fill="#ff8f00"/><path d="M733.3 403.4L737.7 410.1L741.3 408.1L737.0 401.4Z" fill="#ff9a00"/><path d="M737.7 410.1L742.1 393.2L745.7 391.2L741.3 408.1Z" fill="#ff7500"/><path d="M742.1 393.2L746.4 385.9L750.1 383.9L745.7 391.2Z" fill="#ff2a00"/><path d="M746.4 385.9L750.8 384.3L754.4 382.3L750.1 383.9Z" fill="#ff0900"/><path d="M750.8 384.3L755.1 389.0L758.8 387.0L754.4 382.3Z" fill="#ff0800"/><path d="M755.1 389.0L759.5 395.0L763.2 393.0L758.8 387.0Z" fill="#ff1b00"/><path d="M759.5 395.0L763.9 399.7L767.5 397.7L763.2 393.0Z" fill="#ff2f00"/><path d="M763.9 399.7L768.2 406.6L771.9 404.6L767.5 397.7Z" fill="#ff4500"/><path d="M768.2 406.6L772.6 412.7L776.2 410.6L771.9 404.6Z" fill="#ff5e00"/><path d="M772.6 412.7L781.3 426.1L785.0 424.0L776.2 410.6Z" fill="#ff8400"/><path d="M781.3 426.1L790.0 443.1L793.7 441.0L785.0 424.0Z" fill="#ffc300"/><path d="M790.0 443.1L798.8 460.1L802.4 458.0L793.7 441.0Z" fill="#f2ff00"/><path d="M798.8 460.1L807.5 472.6L811.1 470.5L802.4 458.0Z" fill="#b5ff00"/><path d="M807.5 472.6L816.2 480.6L819.9 478.5L811.1 470.5Z" fill="#91ff00"/><path d="M816.2 480.6L820.6 483.4L824.2 481.4L819.9 478.5Z" fill="#82ff00"/><path d="M820.6 483.4L822.3 484.8L826.0 482.8L824.2 481.4Z" fill="#7dff00"/><path d="M822.3 484.8L824.2 486.0L827.9 484.0L826.0 482.8Z" fill="#7aff00"/><path d="M824.2 486.0L824.9 493.1L828.6 491.0L827.9 484.0Z" fill="#66ff00"/><path d="M657.3 484.1L660.8 485.5L664.4 483.5L660.9 482.1Z" fill="#00ffd5"/><path d="M660.8 485.5L664.2 486.9L667.9 484.9L664.4 483.5Z" fill="#00ffd5"/><path d="M664.2 486.9L666.0 489.0L669.7 486.3L667.9 484.9Z" fill="#00ffd8"/><path d="M666.0 489.0L667.7 491.0L671.4 487.9L669.7 486.3Z" fill="#00ffdd"/><path d="M667.7 491.0L669.5 492.2L673.1 488.8L671.4 487.9Z" fill="#00ffe1"/><path d="M669.5 492.2L671.2 491.7L674.8 488.6L673.1 488.8Z" fill="#00ffdf"/><path d="M671.2 491.7L673.0 490.4L676.6 488.2L674.8 488.6Z" fill="#00ffd8"/><path d="M673.0 490.4L674.7 489.1L678.4 487.3L676.6 488.2Z" fill="#00ffcf"/><path d="M674.7 489.1L676.4 488.2L680.1 487.1L678.4 487.3Z" fill="#00ffc7"/><path d="M676.4 488.2L678.2 487.6L681.9 486.7L680.1 487.1Z" fill="#00ffc1"/><path d="M678.2 487.6L679.9 487.4L683.6 486.7L681.9 486.7Z" fill="#00ffbb"/><path d="M679.9 487.4L681.7 487.4L685.3 487.0L683.6 486.7Z" fill="#00ffb7"/><path d="M681.7 487.4L685.2 489.1L688.8 488.4L685.3 487.0Z" fill="#00ffb6"/><path d="M685.2 489.1L688.6 491.1L692.3 490.2L688.8 488.4Z" fill="#00ffb8"/><path d="M688.6 491.1L692.2 493.2L695.8 492.3L692.3 490.2Z" fill="#00ffbb"/><path d="M692.2 493.2L695.7 495.5L699.3 494.2L695.8 492.3Z" fill="#00ffbf"/><path d="M695.7 495.5L699.1 497.6L702.8 496.0L699.3 494.2Z" fill="#00ffc2"/><path d="M699.1 497.6L703.5 499.6L707.2 497.8L702.8 496.0Z" fill="#00ffc4"/><path d="M703.5 499.6L707.9 501.6L711.5 499.5L707.2 497.8Z" fill="#00ffc5"/><path d="M707.9 501.6L712.2 503.1L715.9 501.1L711.5 499.5Z" fill="#00ffc4"/><path d="M712.2 503.1L716.6 504.6L720.2 502.6L715.9 501.1Z" fill="#00ffc3"/><path d="M716.6 504.6L720.9 506.2L724.6 504.1L720.2 502.6Z" fill="#00ffc2"/><path d="M720.9 506.2L725.3 404.5L729.0 402.5L724.6 504.1Z" fill="#56ff00"/><path d="M725.3 404.5L729.7 405.4L733.3 403.4L729.0 402.5Z" fill="#ff8f00"/><path d="M729.7 405.4L734.0 412.1L737.7 410.1L733.3 403.4Z" fill="#ff9a00"/><path d="M734.0 412.1L738.4 395.2L742.1 393.2L737.7 410.1Z" fill="#ff7500"/><path d="M738.4 395.2L742.8 388.0L746.4 385.9L742.1 393.2Z" fill="#ff2a00"/><path d="M742.8 388.0L747.1 386.3L750.8 384.3L746.4 385.9Z" fill="#ff0900"/><path d="M747.1 386.3L751.5 391.0L755.1 389.0L750.8 384.3Z" fill="#ff0800"/><path d="M751.5 391.0L755.8 397.1L759.5 395.0L755.1 389.0Z" fill="#ff1b00"/><path d="M755.8 397.1L760.2 401.7L763.9 399.7L759.5 395.0Z" fill="#ff2f00"/><path d="M760.2 401.7L764.6 408.7L768.2 406.6L763.9 399.7Z" fill="#ff4500"/><path d="M764.6 408.7L768.9 414.7L772.6 412.7L768.2 406.6Z" fill="#ff5e00"/><path d="M768.9 414.7L777.7 428.1L781.3 426.1L772.6 412.7Z" fill="#ff8400"/><path d="M777.7 428.1L786.4 445.1L790.0 443.1L781.3 426.1Z" fill="#ffc300"/><path d="M786.4 445.1L795.1 462.1L798.8 460.1L790.0 443.1Z" fill="#f2ff00"/><path d="M795.1 462.1L803.8 474.6L807.5 472.6L798.8 460.1Z" fill="#b5ff00"/><path d="M803.8 474.6L812.6 482.6L816.2 480.6L807.5 472.6Z" fill="#91ff00"/><path d="M812.6 482.6L816.9 485.5L820.6 483.4L816.2 480.6Z" fill="#82ff00"/><path d="M816.9 485.5L818.7 486.8L822.3 484.8L820.6 483.4Z" fill="#7dff00"/><path d="M818.7 486.8L820.6 488.1L824.2 486.0L822.3 484.8Z" fill="#7aff00"/><path d="M820.6 488.1L821.3 495.1L824.9 493.1L824.2 486.0Z" fill="#66ff00"/><path d="M653.9 486.0L657.4 487.4L660.8 485.5L657.3 484.1Z" fill="#00ffd5"/><path d="M657.4 487.4L660.9 488.8L664.2 486.9L660.8 485.5Z" fill="#00ffd5"/><path d="M660.9 488.8L662.6 491.8L666.0 489.0L664.2 486.9Z" fill="#00ffda"/><path d="M662.6 491.8L664.3 494.5L667.7 491.0L666.0 489.0Z" fill="#00ffe3"/><path d="M664.3 494.5L666.1 496.1L669.5 492.2L667.7 491.0Z" fill="#00ffe9"/><path d="M666.1 496.1L667.8 495.2L671.2 491.7L669.5 492.2Z" fill="#00ffe8"/><path d="M667.8 495.2L669.6 493.0L673.0 490.4L671.2 491.7Z" fill="#00ffdd"/><path d="M669.6 493.0L671.4 490.5L674.7 489.1L673.0 490.4Z" fill="#00ffd0"/><path d="M671.4 490.5L673.1 489.2L676.4 488.2L674.7 489.1Z" fill="#00ffc4"/><path d="M673.1 489.2L674.8 488.1L678.2 487.6L676.4 488.2Z" fill="#00ffbb"/><path d="M674.8 488.1L676.5 487.7L679.9 487.4L678.2 487.6Z" fill="#00ffb4"/><path d="M676.5 487.7L678.3 487.7L681.7 487.4L679.9 487.4Z" fill="#00ffaf"/><path d="M678.3 487.7L681.8 489.3L685.2 489.1L681.7 487.4Z" fill="#00ffae"/><path d="M681.8 489.3L685.3 491.6L688.6 491.1L685.2 489.1Z" fill="#00ffb1"/><path d="M685.3 491.6L688.8 494.2L692.2 493.2L688.6 491.1Z" fill="#00ffb5"/><path d="M688.8 494.2L692.3 496.7L695.7 495.5L692.2 493.2Z" fill="#00ffba"/><path d="M692.3 496.7L695.8 499.0L699.1 497.6L695.7 495.5Z" fill="#00ffbf"/><path d="M695.8 499.0L700.1 501.4L703.5 499.6L699.1 497.6Z" fill="#00ffc3"/><path d="M700.1 501.4L704.5 503.4L707.9 501.6L703.5 499.6Z" fill="#00ffc4"/><path d="M704.5 503.4L708.9 504.7L712.2 503.1L707.9 501.6Z" fill="#00ffc4"/><path d="M708.9 504.7L713.2 506.5L716.6 504.6L712.2 503.1Z" fill="#00ffc3"/><path d="M713.2 506.5L717.6 508.0L720.9 506.2L716.6 504.6Z" fill="#00ffc2"/><path d="M717.6 508.0L721.9 406.4L725.3 404.5L720.9 506.2Z" fill="#56ff00"/><path d="M721.9 406.4L726.3 407.3L729.7 405.4L725.3 404.5Z" fill="#ff8f00"/><path d="M726.3 407.3L730.7 414.0L734.0 412.1L729.7 405.4Z" fill="#ff9a00"/><path d="M730.7 414.0L735.0 397.1L738.4 395.2L734.0 412.1Z" fill="#ff7500"/><path d="M735.0 397.1L739.4 389.8L742.8 388.0L738.4 395.2Z" fill="#ff2a00"/><path d="M739.4 389.8L743.8 388.2L747.1 386.3L742.8 388.0Z" fill="#ff0900"/><path d="M743.8 388.2L748.1 392.9L751.5 391.0L747.1 386.3Z" fill="#ff0800"/><path d="M748.1 392.9L752.5 398.9L755.8 397.1L751.5 391.0Z" fill="#ff1b00"/><path d="M752.5 398.9L756.8 403.6L760.2 401.7L755.8 397.1Z" fill="#ff2f00"/><path d="M756.8 403.6L761.2 410.5L764.6 408.7L760.2 401.7Z" fill="#ff4500"/><path d="M761.2 410.5L765.6 416.5L768.9 414.7L764.6 408.7Z" fill="#ff5e00"/><path d="M765.6 416.5L774.3 429.9L777.7 428.1L768.9 414.7Z" fill="#ff8400"/><path d="M774.3 429.9L783.0 446.9L786.4 445.1L777.7 428.1Z" fill="#ffc300"/><path d="M783.0 446.9L791.7 463.9L795.1 462.1L786.4 445.1Z" fill="#f2ff00"/><path d="M791.7 463.9L800.5 476.4L803.8 474.6L795.1 462.1Z" fill="#b5ff00"/><path d="M800.5 476.4L809.2 484.4L812.6 482.6L803.8 474.6Z" fill="#91ff00"/><path d="M809.2 484.4L813.6 487.3L816.9 485.5L812.6 482.6Z" fill="#82ff00"/><path d="M813.6 487.3L815.3 488.7L818.7 486.8L816.9 485.5Z" fill="#7dff00"/><path d="M815.3 488.7L817.2 489.9L820.6 488.1L818.7 486.8Z" fill="#7aff00"/><path d="M817.2 489.9L817.9 496.9L821.3 495.1L820.6 488.1Z" fill="#66ff00"/><path d="M650.3 488.0L653.7 489.4L657.4 487.4L653.9 486.0Z" fill="#00ffd5"/><path d="M653.7 489.4L657.2 490.8L660.9 488.8L657.4 487.4Z" fill="#00ffd5"/><path d="M657.2 490.8L659.0 495.1L662.6 491.8L660.9 488.8Z" fill="#00ffdd"/><path d="M659.0 495.1L660.7 498.7L664.3 494.5L662.6 491.8Z" fill="#00ffeb"/><path d="M660.7 498.7L662.5 500.6L666.1 496.1L664.3 494.5Z" fill="#00fff5"/><path d="M662.5 500.6L664.2 499.2L667.8 495.2L666.1 496.1Z" fill="#00fff3"/><path d="M664.2 499.2L665.9 495.9L669.6 493.0L667.8 495.2Z" fill="#00ffe4"/><path d="M665.9 495.9L667.7 493.0L671.4 490.5L669.6 493.0Z" fill="#00ffd2"/><path d="M667.7 493.0L669.4 490.8L673.1 489.2L671.4 490.5Z" fill="#00ffc2"/><path d="M669.4 490.8L671.2 489.2L674.8 488.1L673.1 489.2Z" fill="#00ffb6"/><path d="M671.2 489.2L672.9 488.6L676.5 487.7L674.8 488.1Z" fill="#00ffad"/><path d="M672.9 488.6L674.7 488.8L678.3 487.7L676.5 487.7Z" fill="#00ffa8"/><path d="M674.7 488.8L678.1 490.5L681.8 489.3L678.3 487.7Z" fill="#00ffa7"/><path d="M678.1 490.5L681.6 493.2L685.3 491.6L681.8 489.3Z" fill="#00ffab"/><path d="M681.6 493.2L685.2 496.4L688.8 494.2L685.3 491.6Z" fill="#00ffb2"/><path d="M685.2 496.4L688.6 499.4L692.3 496.7L688.8 494.2Z" fill="#00ffba"/><path d="M688.6 499.4L692.1 502.2L695.8 499.0L692.3 496.7Z" fill="#00ffc0"/><path d="M692.1 502.2L696.5 504.6L700.1 501.4L695.8 499.0Z" fill="#00ffc5"/><path d="M696.5 504.6L700.8 506.8L704.5 503.4L700.1 501.4Z" fill="#00ffc8"/><path d="M700.8 506.8L705.2 508.5L708.9 504.7L704.5 503.4Z" fill="#00ffc8"/><path d="M705.2 508.5L709.6 510.5L713.2 506.5L708.9 504.7Z" fill="#00ffc8"/><path d="M709.6 510.5L713.9 512.1L717.6 508.0L713.2 506.5Z" fill="#00ffc8"/><path d="M713.9 512.1L718.3 512.2L721.9 406.4L717.6 508.0Z" fill="#00ff39"/><path d="M718.3 512.2L722.7 409.3L726.3 407.3L721.9 406.4Z" fill="#e3ff00"/><path d="M722.7 409.3L727.0 416.0L730.7 414.0L726.3 407.3Z" fill="#ff9a00"/><path d="M727.0 416.0L731.4 399.1L735.0 397.1L730.7 414.0Z" fill="#ff7500"/><path d="M731.4 399.1L735.7 391.8L739.4 389.8L735.0 397.1Z" fill="#ff2a00"/><path d="M735.7 391.8L740.1 390.2L743.8 388.2L739.4 389.8Z" fill="#ff0900"/><path d="M740.1 390.2L744.5 394.9L748.1 392.9L743.8 388.2Z" fill="#ff0800"/><path d="M744.5 394.9L748.8 400.9L752.5 398.9L748.1 392.9Z" fill="#ff1b00"/><path d="M748.8 400.9L753.2 405.6L756.8 403.6L752.5 398.9Z" fill="#ff2f00"/><path d="M753.2 405.6L757.6 412.5L761.2 410.5L756.8 403.6Z" fill="#ff4500"/><path d="M757.6 412.5L761.9 418.6L765.6 416.5L761.2 410.5Z" fill="#ff5e00"/><path d="M761.9 418.6L770.6 432.0L774.3 429.9L765.6 416.5Z" fill="#ff8400"/><path d="M770.6 432.0L779.4 448.9L783.0 446.9L774.3 429.9Z" fill="#ffc300"/><path d="M779.4 448.9L788.1 465.9L791.7 463.9L783.0 446.9Z" fill="#f2ff00"/><path d="M788.1 465.9L796.8 478.4L800.5 476.4L791.7 463.9Z" fill="#b5ff00"/><path d="M796.8 478.4L805.5 486.5L809.2 484.4L800.5 476.4Z" fill="#91ff00"/><path d="M805.5 486.5L809.9 489.3L813.6 487.3L809.2 484.4Z" fill="#82ff00"/><path d="M809.9 489.3L811.7 490.7L815.3 488.7L813.6 487.3Z" fill="#7dff00"/><path d="M811.7 490.7L813.6 491.9L817.2 489.9L815.3 488.7Z" fill="#7aff00"/><path d="M813.6 491.9L814.3 499.0L817.9 496.9L817.2 489.9Z" fill="#66ff00"/><path d="M646.8 489.9L650.2 491.3L653.7 489.4L650.3 488.0Z" fill="#00ffd5"/><path d="M650.2 491.3L653.7 492.7L657.2 490.8L653.7 489.4Z" fill="#00ffd5"/><path d="M653.7 492.7L655.5 498.2L659.0 495.1L657.2 490.8Z" fill="#00ffe0"/><path d="M655.5 498.2L657.2 502.9L660.7 498.7L659.0 495.1Z" fill="#00fff5"/><path d="M657.2 502.9L659.0 505.6L662.5 500.6L660.7 498.7Z" fill="#00fcff"/><path d="M659.0 505.6L660.7 503.6L664.2 499.2L662.5 500.6Z" fill="#00feff"/><path d="M660.7 503.6L662.4 499.2L665.9 495.9L664.2 499.2Z" fill="#00ffed"/><path d="M662.4 499.2L664.2 495.4L667.7 493.0L665.9 495.9Z" fill="#00ffd6"/><path d="M664.2 495.4L665.9 492.9L669.4 490.8L667.7 493.0Z" fill="#00ffc3"/><path d="M665.9 492.9L667.7 491.4L671.2 489.2L669.4 490.8Z" fill="#00ffb5"/><path d="M667.7 491.4L669.4 490.3L672.9 488.6L671.2 489.2Z" fill="#00ffaa"/><path d="M669.4 490.3L671.2 490.6L674.7 488.8L672.9 488.6Z" fill="#00ffa5"/><path d="M671.2 490.6L674.6 492.6L678.1 490.5L674.7 488.8Z" fill="#00ffa5"/><path d="M674.6 492.6L678.1 495.6L681.6 493.2L678.1 490.5Z" fill="#00ffaa"/><path d="M678.1 495.6L681.7 499.0L685.2 496.4L681.6 493.2Z" fill="#00ffb3"/><path d="M681.7 499.0L685.1 502.7L688.6 499.4L685.2 496.4Z" fill="#00ffbe"/><path d="M685.1 502.7L688.6 505.7L692.1 502.2L688.6 499.4Z" fill="#00ffc7"/><path d="M688.6 505.7L693.0 508.5L696.5 504.6L692.1 502.2Z" fill="#00ffcd"/><path d="M693.0 508.5L697.3 511.0L700.8 506.8L696.5 504.6Z" fill="#00ffd1"/><path d="M697.3 511.0L701.7 513.2L705.2 508.5L700.8 506.8Z" fill="#00ffd3"/><path d="M701.7 513.2L706.1 515.2L709.6 510.5L705.2 508.5Z" fill="#00ffd4"/><path d="M706.1 515.2L710.4 517.1L713.9 512.1L709.6 510.5Z" fill="#00ffd5"/><path d="M710.4 517.1L714.8 520.2L718.3 512.2L713.9 512.1Z" fill="#00ffd5"/><path d="M714.8 520.2L719.1 469.0L722.7 409.3L718.3 512.2Z" fill="#01ff00"/><path d="M719.1 469.0L723.5 477.2L727.0 416.0L722.7 409.3Z" fill="#c6ff00"/><path d="M723.5 477.2L727.9 464.8L731.4 399.1L727.0 416.0Z" fill="#e3ff00"/><path d="M727.9 464.8L732.2 457.6L735.7 391.8L731.4 399.1Z" fill="#ffd700"/><path d="M732.2 457.6L736.6 460.3L740.1 390.2L735.7 391.8Z" fill="#ffbb00"/><path d="M736.6 460.3L741.0 463.6L744.5 394.9L740.1 390.2Z" fill="#ffbe00"/><path d="M741.0 463.6L745.3 467.6L748.8 400.9L744.5 394.9Z" fill="#ffcd00"/><path d="M745.3 467.6L749.7 463.7L753.2 405.6L748.8 400.9Z" fill="#ffd200"/><path d="M749.7 463.7L754.0 467.3L757.6 412.5L753.2 405.6Z" fill="#ffd800"/><path d="M754.0 467.3L758.4 470.8L761.9 418.6L757.6 412.5Z" fill="#ffe900"/><path d="M758.4 470.8L767.1 481.1L770.6 432.0L761.9 418.6Z" fill="#f6ff00"/><path d="M767.1 481.1L775.9 491.3L779.4 448.9L770.6 432.0Z" fill="#c4ff00"/><path d="M775.9 491.3L784.6 501.6L788.1 465.9L779.4 448.9Z" fill="#8eff00"/><path d="M784.6 501.6L793.3 513.0L796.8 478.4L788.1 465.9Z" fill="#5cff00"/><path d="M793.3 513.0L802.0 523.2L805.5 486.5L796.8 478.4Z" fill="#36ff00"/><path d="M802.0 523.2L806.4 526.1L809.9 489.3L805.5 486.5Z" fill="#24ff00"/><path d="M806.4 526.1L808.1 526.8L811.7 490.7L809.9 489.3Z" fill="#20ff00"/><path d="M808.1 526.8L810.1 527.6L813.6 491.9L811.7 490.7Z" fill="#1eff00"/><path d="M810.1 527.6L810.8 534.6L814.3 499.0L813.6 491.9Z" fill="#0cff00"/><path d="M643.1 495.3L646.6 496.7L650.2 491.3L646.8 489.9Z" fill="#00ffde"/><path d="M646.6 496.7L650.0 498.1L653.7 492.7L650.2 491.3Z" fill="#00ffde"/><path d="M650.0 498.1L651.8 504.7L655.5 498.2L653.7 492.7Z" fill="#00ffec"/><path d="M651.8 504.7L653.5 510.3L657.2 502.9L655.5 498.2Z" fill="#00f7ff"/><path d="M653.5 510.3L655.3 513.5L659.0 505.6L657.2 502.9Z" fill="#00e5ff"/><path d="M655.3 513.5L657.0 511.0L660.7 503.6L659.0 505.6Z" fill="#00e7ff"/><path d="M657.0 511.0L658.8 505.7L662.4 499.2L660.7 503.6Z" fill="#00feff"/><path d="M658.8 505.7L660.6 501.0L664.2 495.4L662.4 499.2Z" fill="#00ffe3"/><path d="M660.6 501.0L662.2 498.3L665.9 492.9L664.2 495.4Z" fill="#00ffcd"/><path d="M662.2 498.3L664.0 496.3L667.7 491.4L665.9 492.9Z" fill="#00ffbe"/><path d="M664.0 496.3L665.7 495.4L669.4 490.3L667.7 491.4Z" fill="#00ffb3"/><path d="M665.7 495.4L667.5 495.5L671.2 490.6L669.4 490.3Z" fill="#00ffad"/><path d="M667.5 495.5L671.0 497.8L674.6 492.6L671.2 490.6Z" fill="#00ffad"/><path d="M671.0 497.8L674.4 500.8L678.1 495.6L674.6 492.6Z" fill="#00ffb4"/><path d="M674.4 500.8L678.0 504.2L681.7 499.0L678.1 495.6Z" fill="#00ffbd"/><path d="M678.0 504.2L681.5 507.9L685.1 502.7L681.7 499.0Z" fill="#00ffc9"/><path d="M681.5 507.9L685.0 511.1L688.6 505.7L685.1 502.7Z" fill="#00ffd3"/><path d="M685.0 511.1L689.3 513.9L693.0 508.5L688.6 505.7Z" fill="#00ffdb"/><path d="M689.3 513.9L693.7 516.4L697.3 511.0L693.0 508.5Z" fill="#00ffe0"/><path d="M693.7 516.4L698.0 518.6L701.7 513.2L697.3 511.0Z" fill="#00ffe3"/><path d="M698.0 518.6L702.4 520.5L706.1 515.2L701.7 513.2Z" fill="#00ffe5"/><path d="M702.4 520.5L706.8 522.5L710.4 517.1L706.1 515.2Z" fill="#00ffe6"/><path d="M706.8 522.5L711.1 523.4L714.8 520.2L710.4 517.1Z" fill="#00ffe7"/><path d="M711.1 523.4L715.5 526.3L719.1 469.0L714.8 520.2Z" fill="#00ffa2"/><path d="M715.5 526.3L719.9 528.9L723.5 477.2L719.1 469.0Z" fill="#00ff66"/><path d="M719.9 528.9L724.2 531.6L727.9 464.8L723.5 477.2Z" fill="#00ff5e"/><path d="M724.2 531.6L728.6 534.2L732.2 457.6L727.9 464.8Z" fill="#00ff41"/><path d="M728.6 534.2L732.9 536.4L736.6 460.3L732.2 457.6Z" fill="#00ff38"/><path d="M732.9 536.4L737.3 537.7L741.0 463.6L736.6 460.3Z" fill="#00ff3b"/><path d="M737.3 537.7L741.7 539.3L745.3 467.6L741.0 463.6Z" fill="#00ff3f"/><path d="M741.7 539.3L746.0 539.9L749.7 463.7L745.3 467.6Z" fill="#00ff39"/><path d="M746.0 539.9L750.4 541.2L754.0 467.3L749.7 463.7Z" fill="#00ff32"/><path d="M750.4 541.2L754.8 542.3L758.4 470.8L754.0 467.3Z" fill="#00ff35"/><path d="M754.8 542.3L763.5 545.1L767.1 481.1L758.4 470.8Z" fill="#00ff3f"/><path d="M763.5 545.1L772.2 548.0L775.9 491.3L767.1 481.1Z" fill="#00ff4f"/><path d="M772.2 548.0L780.9 551.0L784.6 501.6L775.9 491.3Z" fill="#00ff60"/><path d="M780.9 551.0L789.7 554.1L793.3 513.0L784.6 501.6Z" fill="#00ff72"/><path d="M789.7 554.1L798.4 557.6L802.0 523.2L793.3 513.0Z" fill="#00ff85"/><path d="M798.4 557.6L802.7 559.4L806.4 526.1L802.0 523.2Z" fill="#00ff90"/><path d="M802.7 559.4L804.5 560.1L808.1 526.8L806.4 526.1Z" fill="#00ff92"/><path d="M804.5 560.1L806.4 560.8L810.1 527.6L808.1 526.8Z" fill="#00ff92"/><path d="M806.4 560.8L807.1 567.9L810.8 534.6L810.1 527.6Z" fill="#00ffa4"/><path d="M639.6 500.0L643.1 501.4L646.6 496.7L643.1 495.3Z" fill="#00ffee"/><path d="M643.1 501.4L646.5 503.2L650.0 498.1L646.6 496.7Z" fill="#00ffef"/><path d="M646.5 503.2L648.3 510.4L651.8 504.7L650.0 498.1Z" fill="#00feff"/><path d="M648.3 510.4L650.0 517.0L653.5 510.3L651.8 504.7Z" fill="#00dfff"/><path d="M650.0 517.0L651.8 520.2L655.3 513.5L653.5 510.3Z" fill="#00c9ff"/><path d="M651.8 520.2L653.5 517.5L657.0 511.0L655.3 513.5Z" fill="#00cbff"/><path d="M653.5 517.5L655.3 511.7L658.8 505.7L657.0 511.0Z" fill="#00e5ff"/><path d="M655.3 511.7L657.0 506.8L660.6 501.0L658.8 505.7Z" fill="#00fff9"/><path d="M657.0 506.8L658.7 503.9L662.2 498.3L660.6 501.0Z" fill="#00ffe1"/><path d="M658.7 503.9L660.5 502.1L664.0 496.3L662.2 498.3Z" fill="#00ffd0"/><path d="M660.5 502.1L662.2 501.0L665.7 495.4L664.0 496.3Z" fill="#00ffc5"/><path d="M662.2 501.0L664.0 501.5L667.5 495.5L665.7 495.4Z" fill="#00ffbf"/><path d="M664.0 501.5L667.5 503.3L671.0 497.8L667.5 495.5Z" fill="#00ffc0"/><path d="M667.5 503.3L670.9 506.5L674.4 500.8L671.0 497.8Z" fill="#00ffc6"/><path d="M670.9 506.5L674.5 510.2L678.0 504.2L674.4 500.8Z" fill="#00ffd0"/><path d="M674.5 510.2L678.0 513.8L681.5 507.9L678.0 504.2Z" fill="#00ffdc"/><path d="M678.0 513.8L681.4 516.8L685.0 511.1L681.5 507.9Z" fill="#00ffe7"/><path d="M681.4 516.8L685.8 519.7L689.3 513.9L685.0 511.1Z" fill="#00ffee"/><path d="M685.8 519.7L690.2 522.3L693.7 516.4L689.3 513.9Z" fill="#00fff3"/><path d="M690.2 522.3L694.5 524.6L698.0 518.6L693.7 516.4Z" fill="#00fff7"/><path d="M694.5 524.6L698.9 526.8L702.4 520.5L698.0 518.6Z" fill="#00fff9"/><path d="M698.9 526.8L703.3 528.7L706.8 522.5L702.4 520.5Z" fill="#00fffa"/><path d="M703.3 528.7L707.6 529.4L711.1 523.4L706.8 522.5Z" fill="#00fff8"/><path d="M707.6 529.4L712.0 530.7L715.5 526.3L711.1 523.4Z" fill="#00fff7"/><path d="M712.0 530.7L716.3 532.7L719.9 528.9L715.5 526.3Z" fill="#00fff9"/><path d="M716.3 532.7L720.7 534.6L724.2 531.6L719.9 528.9Z" fill="#00fffc"/><path d="M720.7 534.6L725.1 537.3L728.6 534.2L724.2 531.6Z" fill="#00feff"/><path d="M725.1 537.3L729.4 540.2L732.9 536.4L728.6 534.2Z" fill="#00faff"/><path d="M729.4 540.2L733.8 542.1L737.3 537.7L732.9 536.4Z" fill="#00f8ff"/><path d="M733.8 542.1L738.2 543.0L741.7 539.3L737.3 537.7Z" fill="#00faff"/><path d="M738.2 543.0L742.5 543.2L746.0 539.9L741.7 539.3Z" fill="#00ffff"/><path d="M742.5 543.2L746.9 544.3L750.4 541.2L746.0 539.9Z" fill="#00fffa"/><path d="M746.9 544.3L751.2 545.4L754.8 542.3L750.4 541.2Z" fill="#00fff7"/><path d="M751.2 545.4L760.0 548.2L763.5 545.1L754.8 542.3Z" fill="#00fff3"/><path d="M760.0 548.2L768.7 551.0L772.2 548.0L763.5 545.1Z" fill="#00fff0"/><path d="M768.7 551.0L777.4 554.1L780.9 551.0L772.2 548.0Z" fill="#00ffed"/><path d="M777.4 554.1L786.1 557.1L789.7 554.1L780.9 551.0Z" fill="#00ffea"/><path d="M786.1 557.1L794.9 560.7L798.4 557.6L789.7 554.1Z" fill="#00ffe9"/><path d="M794.9 560.7L799.2 562.4L802.7 559.4L798.4 557.6Z" fill="#00ffe9"/><path d="M799.2 562.4L801.0 563.1L804.5 560.1L802.7 559.4Z" fill="#00ffe9"/><path d="M801.0 563.1L802.9 563.9L806.4 560.8L804.5 560.1Z" fill="#00ffe9"/><path d="M802.9 563.9L803.6 570.9L807.1 567.9L806.4 560.8Z" fill="#00fffb"/><path d="M635.9 503.8L639.4 505.2L643.1 501.4L639.6 500.0Z" fill="#00fffa"/><path d="M639.4 505.2L642.9 507.3L646.5 503.2L643.1 501.4Z" fill="#00fffc"/><path d="M642.9 507.3L644.7 514.7L648.3 510.4L646.5 503.2Z" fill="#00efff"/><path d="M644.7 514.7L646.4 521.5L650.0 517.0L648.3 510.4Z" fill="#00cdff"/><path d="M646.4 521.5L648.1 524.9L651.8 520.2L650.0 517.0Z" fill="#00b6ff"/><path d="M648.1 524.9L649.8 522.4L653.5 517.5L651.8 520.2Z" fill="#00b7ff"/><path d="M649.8 522.4L651.6 516.4L655.3 511.7L653.5 517.5Z" fill="#00d2ff"/><path d="M651.6 516.4L653.4 511.5L657.0 506.8L655.3 511.7Z" fill="#00f3ff"/><path d="M653.4 511.5L655.1 508.6L658.7 503.9L657.0 506.8Z" fill="#00fff2"/><path d="M655.1 508.6L656.9 507.3L660.5 502.1L658.7 503.9Z" fill="#00ffe2"/><path d="M656.9 507.3L658.6 506.4L662.2 501.0L660.5 502.1Z" fill="#00ffd8"/><path d="M658.6 506.4L660.3 506.9L664.0 501.5L662.2 501.0Z" fill="#00ffd2"/><path d="M660.3 506.9L663.8 508.9L667.5 503.3L664.0 501.5Z" fill="#00ffd3"/><path d="M663.8 508.9L667.3 511.7L670.9 506.5L667.5 503.3Z" fill="#00ffd9"/><path d="M667.3 511.7L670.8 515.1L674.5 510.2L670.9 506.5Z" fill="#00ffe3"/><path d="M670.8 515.1L674.3 518.6L678.0 513.8L674.5 510.2Z" fill="#00ffef"/><path d="M674.3 518.6L677.8 521.5L681.4 516.8L678.0 513.8Z" fill="#00fff9"/><path d="M677.8 521.5L682.1 524.4L685.8 519.7L681.4 516.8Z" fill="#00feff"/><path d="M682.1 524.4L686.5 527.1L690.2 522.3L685.8 519.7Z" fill="#00f9ff"/><path d="M686.5 527.1L690.9 529.3L694.5 524.6L690.2 522.3Z" fill="#00f5ff"/><path d="M690.9 529.3L695.2 531.5L698.9 526.8L694.5 524.6Z" fill="#00f3ff"/><path d="M695.2 531.5L699.6 533.5L703.3 528.7L698.9 526.8Z" fill="#00f1ff"/><path d="M699.6 533.5L704.0 534.3L707.6 529.4L703.3 528.7Z" fill="#00f3ff"/><path d="M704.0 534.3L708.3 535.4L712.0 530.7L707.6 529.4Z" fill="#00f7ff"/><path d="M708.3 535.4L712.7 537.4L716.3 532.7L712.0 530.7Z" fill="#00f8ff"/><path d="M712.7 537.4L717.0 540.2L720.7 534.6L716.3 532.7Z" fill="#00f6ff"/><path d="M717.0 540.2L721.4 542.9L725.1 537.3L720.7 534.6Z" fill="#00f1ff"/><path d="M721.4 542.9L725.8 545.1L729.4 540.2L725.1 537.3Z" fill="#00edff"/><path d="M725.8 545.1L730.1 546.9L733.8 542.1L729.4 540.2Z" fill="#00eaff"/><path d="M730.1 546.9L734.5 547.5L738.2 543.0L733.8 542.1Z" fill="#00edff"/><path d="M734.5 547.5L738.9 548.1L742.5 543.2L738.2 543.0Z" fill="#00f3ff"/><path d="M738.9 548.1L743.2 549.2L746.9 544.3L742.5 543.2Z" fill="#00f9ff"/><path d="M743.2 549.2L747.6 549.6L751.2 545.4L746.9 544.3Z" fill="#00fdff"/><path d="M747.6 549.6L756.3 552.5L760.0 548.2L751.2 545.4Z" fill="#00fffc"/><path d="M756.3 552.5L765.0 555.3L768.7 551.0L760.0 548.2Z" fill="#00fff9"/><path d="M765.0 555.3L773.8 558.4L777.4 554.1L768.7 551.0Z" fill="#00fff6"/><path d="M773.8 558.4L782.5 561.4L786.1 557.1L777.4 554.1Z" fill="#00fff3"/><path d="M782.5 561.4L791.2 564.9L794.9 560.7L786.1 557.1Z" fill="#00fff2"/><path d="M791.2 564.9L795.6 566.7L799.2 562.4L794.9 560.7Z" fill="#00fff2"/><path d="M795.6 566.7L797.3 567.4L801.0 563.1L799.2 562.4Z" fill="#00fff2"/><path d="M797.3 567.4L799.2 568.2L802.9 563.9L801.0 563.1Z" fill="#00fff2"/><path d="M799.2 568.2L799.9 575.2L803.6 570.9L802.9 563.9Z" fill="#00faff"/><path d="M632.4 508.2L635.9 509.6L639.4 505.2L635.9 503.8Z" fill="#00f8ff"/><path d="M635.9 509.6L639.4 511.2L642.9 507.3L639.4 505.2Z" fill="#00f7ff"/><path d="M639.4 511.2L641.2 518.4L644.7 514.7L642.9 507.3Z" fill="#00e4ff"/><path d="M641.2 518.4L642.8 525.0L646.4 521.5L644.7 514.7Z" fill="#00c2ff"/><path d="M642.8 525.0L644.6 528.4L648.1 524.9L646.4 521.5Z" fill="#00aaff"/><path d="M644.6 528.4L646.3 525.9L649.8 522.4L648.1 524.9Z" fill="#00acff"/><path d="M646.3 525.9L648.1 520.3L651.6 516.4L649.8 522.4Z" fill="#00c6ff"/><path d="M648.1 520.3L649.9 515.9L653.4 511.5L651.6 516.4Z" fill="#00e6ff"/><path d="M649.9 515.9L651.6 513.4L655.1 508.6L653.4 511.5Z" fill="#00fdff"/><path d="M651.6 513.4L653.4 512.3L656.9 507.3L655.1 508.6Z" fill="#00fff2"/><path d="M653.4 512.3L655.0 511.9L658.6 506.4L656.9 507.3Z" fill="#00ffe9"/><path d="M655.0 511.9L656.8 512.4L660.3 506.9L658.6 506.4Z" fill="#00ffe5"/><path d="M656.8 512.4L660.3 514.5L663.8 508.9L660.3 506.9Z" fill="#00ffe6"/><path d="M660.3 514.5L663.8 517.0L667.3 511.7L663.8 508.9Z" fill="#00ffec"/><path d="M663.8 517.0L667.3 520.0L670.8 515.1L667.3 511.7Z" fill="#00fff4"/><path d="M667.3 520.0L670.8 523.0L674.3 518.6L670.8 515.1Z" fill="#00fffd"/><path d="M670.8 523.0L674.3 525.7L677.8 521.5L674.3 518.6Z" fill="#00f8ff"/><path d="M674.3 525.7L678.6 528.6L682.1 524.4L677.8 521.5Z" fill="#00f1ff"/><path d="M678.6 528.6L683.0 531.2L686.5 527.1L682.1 524.4Z" fill="#00ebff"/><path d="M683.0 531.2L687.4 533.2L690.9 529.3L686.5 527.1Z" fill="#00e8ff"/><path d="M687.4 533.2L691.7 535.4L695.2 531.5L690.9 529.3Z" fill="#00e6ff"/><path d="M691.7 535.4L696.1 537.4L699.6 533.5L695.2 531.5Z" fill="#00e4ff"/><path d="M696.1 537.4L700.5 538.0L704.0 534.3L699.6 533.5Z" fill="#00e6ff"/><path d="M700.5 538.0L704.8 539.3L708.3 535.4L704.0 534.3Z" fill="#00eaff"/><path d="M704.8 539.3L709.2 541.3L712.7 537.4L708.3 535.4Z" fill="#00ebff"/><path d="M709.2 541.3L713.5 544.2L717.0 540.2L712.7 537.4Z" fill="#00e8ff"/><path d="M713.5 544.2L717.9 547.1L721.4 542.9L717.0 540.2Z" fill="#00e2ff"/><path d="M717.9 547.1L722.3 548.8L725.8 545.1L721.4 542.9Z" fill="#00dfff"/><path d="M722.3 548.8L726.6 550.6L730.1 546.9L725.8 545.1Z" fill="#00deff"/><path d="M726.6 550.6L731.0 551.5L734.5 547.5L730.1 546.9Z" fill="#00e1ff"/><path d="M731.0 551.5L735.4 552.1L738.9 548.1L734.5 547.5Z" fill="#00e6ff"/><path d="M735.4 552.1L739.7 552.9L743.2 549.2L738.9 548.1Z" fill="#00ecff"/><path d="M739.7 552.9L744.1 553.1L747.6 549.6L743.2 549.2Z" fill="#00f2ff"/><path d="M744.1 553.1L752.8 556.0L756.3 552.5L747.6 549.6Z" fill="#00f7ff"/><path d="M752.8 556.0L761.5 558.8L765.0 555.3L756.3 552.5Z" fill="#00fbff"/><path d="M761.5 558.8L770.3 561.9L773.8 558.4L765.0 555.3Z" fill="#00feff"/><path d="M770.3 561.9L779.0 564.9L782.5 561.4L773.8 558.4Z" fill="#00fffd"/><path d="M779.0 564.9L787.7 568.4L791.2 564.9L782.5 561.4Z" fill="#00fffc"/><path d="M787.7 568.4L792.1 570.2L795.6 566.7L791.2 564.9Z" fill="#00fffc"/><path d="M792.1 570.2L793.8 570.9L797.3 567.4L795.6 566.7Z" fill="#00fffc"/><path d="M793.8 570.9L795.7 571.7L799.2 568.2L797.3 567.4Z" fill="#00fffc"/><path d="M795.7 571.7L796.4 578.7L799.9 575.2L799.2 568.2Z" fill="#00f0ff"/><path d="M629.1 511.6L632.5 513.0L635.9 509.6L632.4 508.2Z" fill="#00edff"/><path d="M632.5 513.0L636.0 514.4L639.4 511.2L635.9 509.6Z" fill="#00edff"/><path d="M636.0 514.4L637.8 521.2L641.2 518.4L639.4 511.2Z" fill="#00dcff"/><path d="M637.8 521.2L639.5 526.8L642.8 525.0L641.2 518.4Z" fill="#00bcff"/><path d="M639.5 526.8L641.3 530.2L644.6 528.4L642.8 525.0Z" fill="#00a6ff"/><path d="M641.3 530.2L643.0 528.0L646.3 525.9L644.6 528.4Z" fill="#00a7ff"/><path d="M643.0 528.0L644.7 523.3L648.1 520.3L646.3 525.9Z" fill="#00bfff"/><path d="M644.7 523.3L646.5 519.8L649.9 515.9L648.1 520.3Z" fill="#00dcff"/><path d="M646.5 519.8L648.2 517.8L651.6 513.4L649.9 515.9Z" fill="#00f0ff"/><path d="M648.2 517.8L650.0 517.1L653.4 512.3L651.6 513.4Z" fill="#00fcff"/><path d="M650.0 517.1L651.7 517.1L655.0 511.9L653.4 512.3Z" fill="#00fffb"/><path d="M651.7 517.1L653.5 517.4L656.8 512.4L655.0 511.9Z" fill="#00fff8"/><path d="M653.5 517.4L656.9 519.5L660.3 514.5L656.8 512.4Z" fill="#00fff9"/><path d="M656.9 519.5L660.4 522.2L663.8 517.0L660.3 514.5Z" fill="#00fffe"/><path d="M660.4 522.2L664.0 524.8L667.3 520.0L663.8 517.0Z" fill="#00f9ff"/><path d="M664.0 524.8L667.4 527.5L670.8 523.0L667.3 520.0Z" fill="#00f2ff"/><path d="M667.4 527.5L670.9 530.0L674.3 525.7L670.8 523.0Z" fill="#00eaff"/><path d="M670.9 530.0L675.3 532.7L678.6 528.6L674.3 525.7Z" fill="#00e4ff"/><path d="M675.3 532.7L679.6 535.1L683.0 531.2L678.6 528.6Z" fill="#00dfff"/><path d="M679.6 535.1L684.0 537.6L687.4 533.2L683.0 531.2Z" fill="#00dcff"/><path d="M684.0 537.6L688.4 539.5L691.7 535.4L687.4 533.2Z" fill="#00daff"/><path d="M688.4 539.5L692.7 541.7L696.1 537.4L691.7 535.4Z" fill="#00d8ff"/><path d="M692.7 541.7L697.1 542.6L700.5 538.0L696.1 537.4Z" fill="#00daff"/><path d="M697.1 542.6L701.5 543.7L704.8 539.3L700.5 538.0Z" fill="#00deff"/><path d="M701.5 543.7L705.8 545.4L709.2 541.3L704.8 539.3Z" fill="#00dfff"/><path d="M705.8 545.4L710.2 548.1L713.5 544.2L709.2 541.3Z" fill="#00dcff"/><path d="M710.2 548.1L714.5 550.7L717.9 547.1L713.5 544.2Z" fill="#00d7ff"/><path d="M714.5 550.7L718.9 552.9L722.3 548.8L717.9 547.1Z" fill="#00d4ff"/><path d="M718.9 552.9L723.3 554.5L726.6 550.6L722.3 548.8Z" fill="#00d3ff"/><path d="M723.3 554.5L727.6 555.3L731.0 551.5L726.6 550.6Z" fill="#00d6ff"/><path d="M727.6 555.3L732.0 556.0L735.4 552.1L731.0 551.5Z" fill="#00dcff"/><path d="M732.0 556.0L736.4 556.8L739.7 552.9L735.4 552.1Z" fill="#00e1ff"/><path d="M736.4 556.8L740.7 556.8L744.1 553.1L739.7 552.9Z" fill="#00e8ff"/><path d="M740.7 556.8L749.4 559.6L752.8 556.0L744.1 553.1Z" fill="#00eeff"/><path d="M749.4 559.6L758.2 562.5L761.5 558.8L752.8 556.0Z" fill="#00f2ff"/><path d="M758.2 562.5L766.9 565.5L770.3 561.9L761.5 558.8Z" fill="#00f5ff"/><path d="M766.9 565.5L775.6 568.6L779.0 564.9L770.3 561.9Z" fill="#00f7ff"/><path d="M775.6 568.6L784.3 572.1L787.7 568.4L779.0 564.9Z" fill="#00f9ff"/><path d="M784.3 572.1L788.7 573.8L792.1 570.2L787.7 568.4Z" fill="#00f9ff"/><path d="M788.7 573.8L790.4 574.5L793.8 570.9L792.1 570.2Z" fill="#00f9ff"/><path d="M790.4 574.5L792.4 575.3L795.7 571.7L793.8 570.9Z" fill="#00f9ff"/><path d="M792.4 575.3L793.1 582.3L796.4 578.7L795.7 571.7Z" fill="#00e6ff"/><path d="M625.4 515.2L628.9 516.6L632.5 513.0L629.1 511.6Z" fill="#00e5ff"/><path d="M628.9 516.6L632.4 518.2L636.0 514.4L632.5 513.0Z" fill="#00e4ff"/><path d="M632.4 518.2L634.1 523.9L637.8 521.2L636.0 514.4Z" fill="#00d5ff"/><path d="M634.1 523.9L635.8 528.6L639.5 526.8L637.8 521.2Z" fill="#00baff"/><path d="M635.8 528.6L637.6 531.6L641.3 530.2L639.5 526.8Z" fill="#00a7ff"/><path d="M637.6 531.6L639.3 530.0L643.0 528.0L641.3 530.2Z" fill="#00a8ff"/><path d="M639.3 530.0L641.1 526.5L644.7 523.3L643.0 528.0Z" fill="#00bcff"/><path d="M641.1 526.5L642.9 523.8L646.5 519.8L644.7 523.3Z" fill="#00d3ff"/><path d="M642.9 523.8L644.6 522.2L648.2 517.8L646.5 519.8Z" fill="#00e4ff"/><path d="M644.6 522.2L646.3 522.1L650.0 517.1L648.2 517.8Z" fill="#00eeff"/><path d="M646.3 522.1L648.0 522.1L651.7 517.1L650.0 517.1Z" fill="#00f3ff"/><path d="M648.0 522.1L649.8 522.8L653.5 517.4L651.7 517.1Z" fill="#00f5ff"/><path d="M649.8 522.8L653.3 524.6L656.9 519.5L653.5 517.4Z" fill="#00f4ff"/><path d="M653.3 524.6L656.8 526.9L660.4 522.2L656.9 519.5Z" fill="#00f0ff"/><path d="M656.8 526.9L660.3 529.5L664.0 524.8L660.4 522.2Z" fill="#00e9ff"/><path d="M660.3 529.5L663.8 532.0L667.4 527.5L664.0 524.8Z" fill="#00e3ff"/><path d="M663.8 532.0L667.3 534.3L670.9 530.0L667.4 527.5Z" fill="#00ddff"/><path d="M667.3 534.3L671.6 536.5L675.3 532.7L670.9 530.0Z" fill="#00d8ff"/><path d="M671.6 536.5L676.0 538.9L679.6 535.1L675.3 532.7Z" fill="#00d5ff"/><path d="M676.0 538.9L680.3 541.1L684.0 537.6L679.6 535.1Z" fill="#00d2ff"/><path d="M680.3 541.1L684.7 543.3L688.4 539.5L684.0 537.6Z" fill="#00cfff"/><path d="M684.7 543.3L689.1 545.3L692.7 541.7L688.4 539.5Z" fill="#00cdff"/><path d="M689.1 545.3L693.4 546.2L697.1 542.6L692.7 541.7Z" fill="#00cfff"/><path d="M693.4 546.2L697.8 547.5L701.5 543.7L697.1 542.6Z" fill="#00d3ff"/><path d="M697.8 547.5L702.2 549.5L705.8 545.4L701.5 543.7Z" fill="#00d4ff"/><path d="M702.2 549.5L706.5 551.7L710.2 548.1L705.8 545.4Z" fill="#00d2ff"/><path d="M706.5 551.7L710.9 554.8L714.5 550.7L710.2 548.1Z" fill="#00cdff"/><path d="M710.9 554.8L715.2 557.4L718.9 552.9L714.5 550.7Z" fill="#00c8ff"/><path d="M715.2 557.4L719.6 558.3L723.3 554.5L718.9 552.9Z" fill="#00c8ff"/><path d="M719.6 558.3L724.0 559.2L727.6 555.3L723.3 554.5Z" fill="#00ccff"/><path d="M724.0 559.2L728.3 559.8L732.0 556.0L727.6 555.3Z" fill="#00d1ff"/><path d="M728.3 559.8L732.7 560.9L736.4 556.8L732.0 556.0Z" fill="#00d6ff"/><path d="M732.7 560.9L737.1 561.0L740.7 556.8L736.4 556.8Z" fill="#00ddff"/><path d="M737.1 561.0L745.8 563.9L749.4 559.6L740.7 556.8Z" fill="#00e3ff"/><path d="M745.8 563.9L754.5 566.7L758.2 562.5L749.4 559.6Z" fill="#00e7ff"/><path d="M754.5 566.7L763.2 569.8L766.9 565.5L758.2 562.5Z" fill="#00eaff"/><path d="M763.2 569.8L772.0 572.8L775.6 568.6L766.9 565.5Z" fill="#00edff"/><path d="M772.0 572.8L780.7 576.4L784.3 572.1L775.6 568.6Z" fill="#00eeff"/><path d="M780.7 576.4L785.0 578.1L788.7 573.8L784.3 572.1Z" fill="#00eeff"/><path d="M785.0 578.1L786.8 578.8L790.4 574.5L788.7 573.8Z" fill="#00eeff"/><path d="M786.8 578.8L788.7 579.6L792.4 575.3L790.4 574.5Z" fill="#00eeff"/><path d="M788.7 579.6L789.4 586.6L793.1 582.3L792.4 575.3Z" fill="#00dcff"/><path d="M621.9 519.2L625.4 520.3L628.9 516.6L625.4 515.2Z" fill="#00dbff"/><path d="M625.4 520.3L628.8 522.0L632.4 518.2L628.9 516.6Z" fill="#00dbff"/><path d="M628.8 522.0L630.6 526.5L634.1 523.9L632.4 518.2Z" fill="#00ceff"/><path d="M630.6 526.5L632.3 530.3L635.8 528.6L634.1 523.9Z" fill="#00b9ff"/><path d="M632.3 530.3L634.1 532.6L637.6 531.6L635.8 528.6Z" fill="#00aaff"/><path d="M634.1 532.6L635.8 531.7L639.3 530.0L637.6 531.6Z" fill="#00aaff"/><path d="M635.8 531.7L637.6 529.3L641.1 526.5L639.3 530.0Z" fill="#00b9ff"/><path d="M637.6 529.3L639.4 527.5L642.9 523.8L641.1 526.5Z" fill="#00cbff"/><path d="M639.4 527.5L641.0 526.7L644.6 522.2L642.9 523.8Z" fill="#00d8ff"/><path d="M641.0 526.7L642.8 526.9L646.3 522.1L644.6 522.2Z" fill="#00dfff"/><path d="M642.8 526.9L644.5 527.2L648.0 522.1L646.3 522.1Z" fill="#00e2ff"/><path d="M644.5 527.2L646.3 527.9L649.8 522.8L648.0 522.1Z" fill="#00e4ff"/><path d="M646.3 527.9L649.8 529.7L653.3 524.6L649.8 522.8Z" fill="#00e3ff"/><path d="M649.8 529.7L653.2 531.8L656.8 526.9L653.3 524.6Z" fill="#00dfff"/><path d="M653.2 531.8L656.8 533.9L660.3 529.5L656.8 526.9Z" fill="#00dbff"/><path d="M656.8 533.9L660.3 536.2L663.8 532.0L660.3 529.5Z" fill="#00d6ff"/><path d="M660.3 536.2L663.7 538.3L667.3 534.3L663.8 532.0Z" fill="#00d1ff"/><path d="M663.7 538.3L668.1 540.5L671.6 536.5L667.3 534.3Z" fill="#00ceff"/><path d="M668.1 540.5L672.5 542.9L676.0 538.9L671.6 536.5Z" fill="#00cbff"/><path d="M672.5 542.9L676.8 544.9L680.3 541.1L676.0 538.9Z" fill="#00c8ff"/><path d="M676.8 544.9L681.2 547.1L684.7 543.3L680.3 541.1Z" fill="#00c6ff"/><path d="M681.2 547.1L685.6 549.1L689.1 545.3L684.7 543.3Z" fill="#00c4ff"/><path d="M685.6 549.1L689.9 549.9L693.4 546.2L689.1 545.3Z" fill="#00c6ff"/><path d="M689.9 549.9L694.3 550.8L697.8 547.5L693.4 546.2Z" fill="#00caff"/><path d="M694.3 550.8L698.6 552.8L702.2 549.5L697.8 547.5Z" fill="#00cbff"/><path d="M698.6 552.8L703.0 555.4L706.5 551.7L702.2 549.5Z" fill="#00c9ff"/><path d="M703.0 555.4L707.4 558.5L710.9 554.8L706.5 551.7Z" fill="#00c3ff"/><path d="M707.4 558.5L711.7 560.9L715.2 557.4L710.9 554.8Z" fill="#00beff"/><path d="M711.7 560.9L716.1 562.3L719.6 558.3L715.2 557.4Z" fill="#00bdff"/><path d="M716.1 562.3L720.5 563.1L724.0 559.2L719.6 558.3Z" fill="#00c1ff"/><path d="M720.5 563.1L724.8 563.5L728.3 559.8L724.0 559.2Z" fill="#00c7ff"/><path d="M724.8 563.5L729.2 564.4L732.7 560.9L728.3 559.8Z" fill="#00cdff"/><path d="M729.2 564.4L733.5 565.0L737.1 561.0L732.7 560.9Z" fill="#00d2ff"/><path d="M733.5 565.0L742.3 567.8L745.8 563.9L737.1 561.0Z" fill="#00d8ff"/><path d="M742.3 567.8L751.0 570.7L754.5 566.7L745.8 563.9Z" fill="#00dcff"/><path d="M751.0 570.7L759.7 573.7L763.2 569.8L754.5 566.7Z" fill="#00dfff"/><path d="M759.7 573.7L768.5 576.8L772.0 572.8L763.2 569.8Z" fill="#00e1ff"/><path d="M768.5 576.8L777.2 580.3L780.7 576.4L772.0 572.8Z" fill="#00e2ff"/><path d="M777.2 580.3L781.5 582.1L785.0 578.1L780.7 576.4Z" fill="#00e2ff"/><path d="M781.5 582.1L783.3 582.8L786.8 578.8L785.0 578.1Z" fill="#00e2ff"/><path d="M783.3 582.8L785.2 583.5L788.7 579.6L786.8 578.8Z" fill="#00e2ff"/><path d="M785.2 583.5L785.9 590.6L789.4 586.6L788.7 579.6Z" fill="#00d0ff"/><path d="M618.2 522.8L621.7 524.2L625.4 520.3L621.9 519.2Z" fill="#00d2ff"/><path d="M621.7 524.2L625.2 525.6L628.8 522.0L625.4 520.3Z" fill="#00d2ff"/><path d="M625.2 525.6L627.0 529.0L630.6 526.5L628.8 522.0Z" fill="#00c8ff"/><path d="M627.0 529.0L628.7 532.1L632.3 530.3L630.6 526.5Z" fill="#00b8ff"/><path d="M628.7 532.1L630.4 533.7L634.1 532.6L632.3 530.3Z" fill="#00adff"/><path d="M630.4 533.7L632.1 533.5L635.8 531.7L634.1 532.6Z" fill="#00adff"/><path d="M632.1 533.5L633.9 532.2L637.6 529.3L635.8 531.7Z" fill="#00b7ff"/><path d="M633.9 532.2L635.7 531.4L639.4 527.5L637.6 529.3Z" fill="#00c4ff"/><path d="M635.7 531.4L637.4 530.9L641.0 526.7L639.4 527.5Z" fill="#00cdff"/><path d="M637.4 530.9L639.2 531.4L642.8 526.9L641.0 526.7Z" fill="#00d2ff"/><path d="M639.2 531.4L640.9 532.1L644.5 527.2L642.8 526.9Z" fill="#00d3ff"/><path d="M640.9 532.1L642.6 533.0L646.3 527.9L644.5 527.2Z" fill="#00d3ff"/><path d="M642.6 533.0L646.1 534.7L649.8 529.7L646.3 527.9Z" fill="#00d2ff"/><path d="M646.1 534.7L649.6 536.7L653.2 531.8L649.8 529.7Z" fill="#00cfff"/><path d="M649.6 536.7L653.1 538.6L656.8 533.9L653.2 531.8Z" fill="#00ccff"/><path d="M653.1 538.6L656.6 540.9L660.3 536.2L656.8 533.9Z" fill="#00c8ff"/><path d="M656.6 540.9L660.1 542.8L663.7 538.3L660.3 536.2Z" fill="#00c4ff"/><path d="M660.1 542.8L664.5 545.0L668.1 540.5L663.7 538.3Z" fill="#00c1ff"/><path d="M664.5 545.0L668.8 547.4L672.5 542.9L668.1 540.5Z" fill="#00beff"/><path d="M668.8 547.4L673.2 549.6L676.8 544.9L672.5 542.9Z" fill="#00bcff"/><path d="M673.2 549.6L677.5 551.8L681.2 547.1L676.8 544.9Z" fill="#00baff"/><path d="M677.5 551.8L681.9 554.0L685.6 549.1L681.2 547.1Z" fill="#00b7ff"/><path d="M681.9 554.0L686.3 553.5L689.9 549.9L685.6 549.1Z" fill="#00bbff"/><path d="M686.3 553.5L690.6 554.8L694.3 550.8L689.9 549.9Z" fill="#00c1ff"/><path d="M690.6 554.8L695.0 556.8L698.6 552.8L694.3 550.8Z" fill="#00c2ff"/><path d="M695.0 556.8L699.4 559.5L703.0 555.4L698.6 552.8Z" fill="#00bfff"/><path d="M699.4 559.5L703.7 562.3L707.4 558.5L703.0 555.4Z" fill="#00b9ff"/><path d="M703.7 562.3L708.1 564.8L711.7 560.9L707.4 558.5Z" fill="#00b4ff"/><path d="M708.1 564.8L712.4 565.8L716.1 562.3L711.7 560.9Z" fill="#00b4ff"/><path d="M712.4 565.8L716.8 566.7L720.5 563.1L716.1 562.3Z" fill="#00b8ff"/><path d="M716.8 566.7L721.2 567.6L724.8 563.5L720.5 563.1Z" fill="#00bdff"/><path d="M721.2 567.6L725.5 568.4L729.2 564.4L724.8 563.5Z" fill="#00c3ff"/><path d="M725.5 568.4L729.9 568.8L733.5 565.0L729.2 564.4Z" fill="#00c8ff"/><path d="M729.9 568.8L738.6 571.7L742.3 567.8L733.5 565.0Z" fill="#00ceff"/><path d="M738.6 571.7L747.3 574.5L751.0 570.7L742.3 567.8Z" fill="#00d1ff"/><path d="M747.3 574.5L756.1 577.6L759.7 573.7L751.0 570.7Z" fill="#00d4ff"/><path d="M756.1 577.6L764.8 580.6L768.5 576.8L759.7 573.7Z" fill="#00d7ff"/><path d="M764.8 580.6L773.5 584.1L777.2 580.3L768.5 576.8Z" fill="#00d8ff"/><path d="M773.5 584.1L777.9 585.9L781.5 582.1L777.2 580.3Z" fill="#00d8ff"/><path d="M777.9 585.9L779.6 586.6L783.3 582.8L781.5 582.1Z" fill="#00d8ff"/><path d="M779.6 586.6L781.5 587.4L785.2 583.5L783.3 582.8Z" fill="#00d8ff"/><path d="M781.5 587.4L782.2 594.4L785.9 590.6L785.2 583.5Z" fill="#00c6ff"/><path d="M614.7 533.5L618.2 534.9L621.7 524.2L618.2 522.8Z" fill="#00b5ff"/><path d="M618.2 534.9L621.7 535.8L625.2 525.6L621.7 524.2Z" fill="#00b6ff"/><path d="M621.7 535.8L623.5 538.1L627.0 529.0L625.2 525.6Z" fill="#00b1ff"/><path d="M623.5 538.1L625.2 540.1L628.7 532.1L627.0 529.0Z" fill="#00a6ff"/><path d="M625.2 540.1L626.9 541.5L630.4 533.7L628.7 532.1Z" fill="#009fff"/><path d="M626.9 541.5L628.6 541.5L632.1 533.5L630.4 533.7Z" fill="#009fff"/><path d="M628.6 541.5L630.4 540.7L633.9 532.2L632.1 533.5Z" fill="#00a6ff"/><path d="M630.4 540.7L632.2 540.0L635.7 531.4L633.9 532.2Z" fill="#00aeff"/><path d="M632.2 540.0L633.9 540.3L637.4 530.9L635.7 531.4Z" fill="#00b4ff"/><path d="M633.9 540.3L635.7 540.5L639.2 531.4L637.4 530.9Z" fill="#00b7ff"/><path d="M635.7 540.5L637.4 541.2L640.9 532.1L639.2 531.4Z" fill="#00b8ff"/><path d="M637.4 541.2L639.1 541.9L642.6 533.0L640.9 532.1Z" fill="#00b8ff"/><path d="M639.1 541.9L642.6 543.3L646.1 534.7L642.6 533.0Z" fill="#00b7ff"/><path d="M642.6 543.3L646.1 544.5L649.6 536.7L646.1 534.7Z" fill="#00b7ff"/><path d="M646.1 544.5L649.6 546.2L653.1 538.6L649.6 536.7Z" fill="#00b5ff"/><path d="M649.6 546.2L653.1 547.8L656.6 540.9L653.1 538.6Z" fill="#00b3ff"/><path d="M653.1 547.8L656.6 549.2L660.1 542.8L656.6 540.9Z" fill="#00b0ff"/><path d="M656.6 549.2L660.9 550.9L664.5 545.0L660.1 542.8Z" fill="#00afff"/><path d="M660.9 550.9L665.3 552.7L668.8 547.4L664.5 545.0Z" fill="#00aeff"/><path d="M665.3 552.7L669.7 554.5L673.2 549.6L668.8 547.4Z" fill="#00acff"/><path d="M669.7 554.5L674.0 556.0L677.5 551.8L673.2 549.6Z" fill="#00abff"/><path d="M674.0 556.0L678.4 557.7L681.9 554.0L677.5 551.8Z" fill="#00aaff"/><path d="M678.4 557.7L682.8 558.6L686.3 553.5L681.9 554.0Z" fill="#00aeff"/><path d="M682.8 558.6L687.1 558.8L690.6 554.8L686.3 553.5Z" fill="#00b5ff"/><path d="M687.1 558.8L691.5 560.3L695.0 556.8L690.6 554.8Z" fill="#00b8ff"/><path d="M691.5 560.3L695.8 563.0L699.4 559.5L695.0 556.8Z" fill="#00b5ff"/><path d="M695.8 563.0L700.2 565.8L703.7 562.3L699.4 559.5Z" fill="#00b0ff"/><path d="M700.2 565.8L704.6 568.3L708.1 564.8L703.7 562.3Z" fill="#00abff"/><path d="M704.6 568.3L708.9 569.8L712.4 565.8L708.1 564.8Z" fill="#00aaff"/><path d="M708.9 569.8L713.3 570.9L716.8 566.7L712.4 565.8Z" fill="#00aeff"/><path d="M713.3 570.9L717.7 571.7L721.2 567.6L716.8 566.7Z" fill="#00b2ff"/><path d="M717.7 571.7L722.0 572.4L725.5 568.4L721.2 567.6Z" fill="#00b7ff"/><path d="M722.0 572.4L726.4 573.2L729.9 568.8L725.5 568.4Z" fill="#00bdff"/><path d="M726.4 573.2L735.1 576.1L738.6 571.7L729.9 568.8Z" fill="#00c2ff"/><path d="M735.1 576.1L743.8 578.9L747.3 574.5L738.6 571.7Z" fill="#00c6ff"/><path d="M743.8 578.9L752.6 582.0L756.1 577.6L747.3 574.5Z" fill="#00c9ff"/><path d="M752.6 582.0L761.3 585.0L764.8 580.6L756.1 577.6Z" fill="#00cbff"/><path d="M761.3 585.0L770.0 588.5L773.5 584.1L764.8 580.6Z" fill="#00ccff"/><path d="M770.0 588.5L774.4 590.3L777.9 585.9L773.5 584.1Z" fill="#00ccff"/><path d="M774.4 590.3L776.1 591.0L779.6 586.6L777.9 585.9Z" fill="#00ccff"/><path d="M776.1 591.0L778.0 591.8L781.5 587.4L779.6 586.6Z" fill="#00ccff"/><path d="M778.0 591.8L778.7 598.8L782.2 594.4L781.5 587.4Z" fill="#00baff"/><path d="M611.1 538.6L614.6 540.0L618.2 534.9L614.7 533.5Z" fill="#0095ff"/><path d="M614.6 540.0L618.0 540.5L621.7 535.8L618.2 534.9Z" fill="#0097ff"/><path d="M618.0 540.5L619.8 541.2L623.5 538.1L621.7 535.8Z" fill="#0097ff"/><path d="M619.8 541.2L621.5 541.0L625.2 540.1L623.5 538.1Z" fill="#0094ff"/><path d="M621.5 541.0L623.3 540.8L626.9 541.5L625.2 540.1Z" fill="#0094ff"/><path d="M623.3 540.8L625.0 540.9L628.6 541.5L626.9 541.5Z" fill="#0096ff"/><path d="M625.0 540.9L626.8 541.3L630.4 540.7L628.6 541.5Z" fill="#009aff"/><path d="M626.8 541.3L628.5 542.5L632.2 540.0L630.4 540.7Z" fill="#009eff"/><path d="M628.5 542.5L630.2 545.0L633.9 540.3L632.2 540.0Z" fill="#009dff"/><path d="M630.2 545.0L632.0 546.8L635.7 540.5L633.9 540.3Z" fill="#009aff"/><path d="M632.0 546.8L633.7 547.1L637.4 541.2L635.7 540.5Z" fill="#009aff"/><path d="M633.7 547.1L635.5 547.6L639.1 541.9L637.4 541.2Z" fill="#009bff"/><path d="M635.5 547.6L638.9 546.7L642.6 543.3L639.1 541.9Z" fill="#009eff"/><path d="M638.9 546.7L642.4 547.4L646.1 544.5L642.6 543.3Z" fill="#00a3ff"/><path d="M642.4 547.4L646.0 548.9L649.6 546.2L646.1 544.5Z" fill="#00a3ff"/><path d="M646.0 548.9L649.5 550.0L653.1 547.8L649.6 546.2Z" fill="#00a3ff"/><path d="M649.5 550.0L652.9 551.9L656.6 549.2L653.1 547.8Z" fill="#00a3ff"/><path d="M652.9 551.9L657.3 554.8L660.9 550.9L656.6 549.2Z" fill="#00a0ff"/><path d="M657.3 554.8L661.7 557.4L665.3 552.7L660.9 550.9Z" fill="#009eff"/><path d="M661.7 557.4L666.0 559.6L669.7 554.5L665.3 552.7Z" fill="#009cff"/><path d="M666.0 559.6L670.4 561.4L674.0 556.0L669.7 554.5Z" fill="#009cff"/><path d="M670.4 561.4L674.7 562.0L678.4 557.7L674.0 556.0Z" fill="#009dff"/><path d="M674.7 562.0L679.1 562.4L682.8 558.6L678.4 557.7Z" fill="#00a2ff"/><path d="M679.1 562.4L683.5 563.5L687.1 558.8L682.8 558.6Z" fill="#00a8ff"/><path d="M683.5 563.5L687.8 564.6L691.5 560.3L687.1 558.8Z" fill="#00acff"/><path d="M687.8 564.6L692.2 566.8L695.8 563.0L691.5 560.3Z" fill="#00acff"/><path d="M692.2 566.8L696.6 569.7L700.2 565.8L695.8 563.0Z" fill="#00a7ff"/><path d="M696.6 569.7L700.9 572.3L704.6 568.3L700.2 565.8Z" fill="#00a2ff"/><path d="M700.9 572.3L705.3 573.6L708.9 569.8L704.6 568.3Z" fill="#00a0ff"/><path d="M705.3 573.6L709.6 574.7L713.3 570.9L708.9 569.8Z" fill="#00a3ff"/><path d="M709.6 574.7L714.0 575.8L717.7 571.7L713.3 570.9Z" fill="#00a7ff"/><path d="M714.0 575.8L718.4 576.6L722.0 572.4L717.7 571.7Z" fill="#00acff"/><path d="M718.4 576.6L722.7 577.0L726.4 573.2L722.0 572.4Z" fill="#00b2ff"/><path d="M722.7 577.0L731.5 579.9L735.1 576.1L726.4 573.2Z" fill="#00b7ff"/><path d="M731.5 579.9L740.2 582.7L743.8 578.9L735.1 576.1Z" fill="#00baff"/><path d="M740.2 582.7L748.9 585.8L752.6 582.0L743.8 578.9Z" fill="#00bdff"/><path d="M748.9 585.8L757.6 588.8L761.3 585.0L752.6 582.0Z" fill="#00c0ff"/><path d="M757.6 588.8L766.4 592.4L770.0 588.5L761.3 585.0Z" fill="#00c1ff"/><path d="M766.4 592.4L770.7 594.1L774.4 590.3L770.0 588.5Z" fill="#00c1ff"/><path d="M770.7 594.1L772.5 594.8L776.1 591.0L774.4 590.3Z" fill="#00c1ff"/><path d="M772.5 594.8L774.4 595.6L778.0 591.8L776.1 591.0Z" fill="#00c1ff"/><path d="M774.4 595.6L775.1 602.6L778.7 598.8L778.0 591.8Z" fill="#00afff"/><path d="M607.7 541.6L611.2 543.0L614.6 540.0L611.1 538.6Z" fill="#008aff"/><path d="M611.2 543.0L614.7 543.7L618.0 540.5L614.6 540.0Z" fill="#008cff"/><path d="M614.7 543.7L616.4 544.4L619.8 541.2L618.0 540.5Z" fill="#008eff"/><path d="M616.4 544.4L618.1 544.0L621.5 541.0L619.8 541.2Z" fill="#0091ff"/><path d="M618.1 544.0L619.9 543.8L623.3 540.8L621.5 541.0Z" fill="#0096ff"/><path d="M619.9 543.8L621.6 544.1L625.0 540.9L623.3 540.8Z" fill="#009aff"/><path d="M621.6 544.1L623.4 545.4L626.8 541.3L625.0 540.9Z" fill="#009bff"/><path d="M623.4 545.4L625.2 548.0L628.5 542.5L626.8 541.3Z" fill="#0097ff"/><path d="M625.2 548.0L626.9 549.8L630.2 545.0L628.5 542.5Z" fill="#0090ff"/><path d="M626.9 549.8L628.6 550.5L632.0 546.8L630.2 545.0Z" fill="#008bff"/><path d="M628.6 550.5L630.3 550.7L633.7 547.1L632.0 546.8Z" fill="#008aff"/><path d="M630.3 550.7L632.1 551.0L635.5 547.6L633.7 547.1Z" fill="#008cff"/><path d="M632.1 551.0L635.6 551.0L638.9 546.7L635.5 547.6Z" fill="#0092ff"/><path d="M635.6 551.0L639.1 551.5L642.4 547.4L638.9 546.7Z" fill="#0099ff"/><path d="M639.1 551.5L642.6 552.5L646.0 548.9L642.4 547.4Z" fill="#009cff"/><path d="M642.6 552.5L646.1 553.7L649.5 550.0L646.0 548.9Z" fill="#009dff"/><path d="M646.1 553.7L649.6 555.3L652.9 551.9L649.5 550.0Z" fill="#009dff"/><path d="M649.6 555.3L653.9 558.2L657.3 554.8L652.9 551.9Z" fill="#0099ff"/><path d="M653.9 558.2L658.3 560.8L661.7 557.4L657.3 554.8Z" fill="#0093ff"/><path d="M658.3 560.8L662.7 563.0L666.0 559.6L661.7 557.4Z" fill="#0090ff"/><path d="M662.7 563.0L667.0 564.6L670.4 561.4L666.0 559.6Z" fill="#008fff"/><path d="M667.0 564.6L671.4 565.2L674.7 562.0L670.4 561.4Z" fill="#0092ff"/><path d="M671.4 565.2L675.7 565.8L679.1 562.4L674.7 562.0Z" fill="#0099ff"/><path d="M675.7 565.8L680.1 566.9L683.5 563.5L679.1 562.4Z" fill="#009eff"/><path d="M680.1 566.9L684.5 568.5L687.8 564.6L683.5 563.5Z" fill="#00a1ff"/><path d="M684.5 568.5L688.8 570.4L692.2 566.8L687.8 564.6Z" fill="#00a1ff"/><path d="M688.8 570.4L693.2 573.3L696.6 569.7L692.2 566.8Z" fill="#009dff"/><path d="M693.2 573.3L697.6 575.5L700.9 572.3L696.6 569.7Z" fill="#0098ff"/><path d="M697.6 575.5L701.9 577.0L705.3 573.6L700.9 572.3Z" fill="#0097ff"/><path d="M701.9 577.0L706.3 578.6L709.6 574.7L705.3 573.6Z" fill="#0099ff"/><path d="M706.3 578.6L710.6 579.4L714.0 575.8L709.6 574.7Z" fill="#009dff"/><path d="M710.6 579.4L715.0 580.3L718.4 576.6L714.0 575.8Z" fill="#00a1ff"/><path d="M715.0 580.3L719.4 580.9L722.7 577.0L718.4 576.6Z" fill="#00a7ff"/><path d="M719.4 580.9L728.1 583.8L731.5 579.9L722.7 577.0Z" fill="#00acff"/><path d="M728.1 583.8L736.8 586.6L740.2 582.7L731.5 579.9Z" fill="#00b0ff"/><path d="M736.8 586.6L745.5 589.7L748.9 585.8L740.2 582.7Z" fill="#00b3ff"/><path d="M745.5 589.7L754.3 592.7L757.6 588.8L748.9 585.8Z" fill="#00b5ff"/><path d="M754.3 592.7L763.0 596.2L766.4 592.4L757.6 588.8Z" fill="#00b7ff"/><path d="M763.0 596.2L767.4 598.0L770.7 594.1L766.4 592.4Z" fill="#00b7ff"/><path d="M767.4 598.0L769.1 598.7L772.5 594.8L770.7 594.1Z" fill="#00b7ff"/><path d="M769.1 598.7L771.0 599.5L774.4 595.6L772.5 594.8Z" fill="#00b7ff"/><path d="M771.0 599.5L771.7 606.5L775.1 602.6L774.4 595.6Z" fill="#00a4ff"/><path d="M604.2 544.9L607.7 546.3L611.2 543.0L607.7 541.6Z" fill="#0083ff"/><path d="M607.7 546.3L611.2 547.7L614.7 543.7L611.2 543.0Z" fill="#0084ff"/><path d="M611.2 547.7L612.9 548.0L616.4 544.4L614.7 543.7Z" fill="#0085ff"/><path d="M612.9 548.0L614.6 547.3L618.1 544.0L616.4 544.4Z" fill="#0089ff"/><path d="M614.6 547.3L616.4 547.1L619.9 543.8L618.1 544.0Z" fill="#008fff"/><path d="M616.4 547.1L618.1 548.5L621.6 544.1L619.9 543.8Z" fill="#0091ff"/><path d="M618.1 548.5L619.9 550.3L623.4 545.4L621.6 544.1Z" fill="#008fff"/><path d="M619.9 550.3L621.7 552.1L625.2 548.0L623.4 545.4Z" fill="#0088ff"/><path d="M621.7 552.1L623.4 553.3L626.9 549.8L625.2 548.0Z" fill="#0082ff"/><path d="M623.4 553.3L625.1 554.2L628.6 550.5L626.9 549.8Z" fill="#0080ff"/><path d="M625.1 554.2L626.8 554.4L630.3 550.7L628.6 550.5Z" fill="#0081ff"/><path d="M626.8 554.4L628.6 554.9L632.1 551.0L630.3 550.7Z" fill="#0083ff"/><path d="M628.6 554.9L632.1 555.2L635.6 551.0L632.1 551.0Z" fill="#0087ff"/><path d="M632.1 555.2L635.5 555.9L639.1 551.5L635.6 551.0Z" fill="#008cff"/><path d="M635.5 555.9L639.1 556.9L642.6 552.5L639.1 551.5Z" fill="#0090ff"/><path d="M639.1 556.9L642.6 557.9L646.1 553.7L642.6 552.5Z" fill="#0092ff"/><path d="M642.6 557.9L646.1 559.3L649.6 555.3L646.1 553.7Z" fill="#0092ff"/><path d="M646.1 559.3L650.4 561.7L653.9 558.2L649.6 555.3Z" fill="#0090ff"/><path d="M650.4 561.7L654.8 563.7L658.3 560.8L653.9 558.2Z" fill="#008cff"/><path d="M654.8 563.7L659.1 566.3L662.7 563.0L658.3 560.8Z" fill="#0088ff"/><path d="M659.1 566.3L663.5 568.1L667.0 564.6L662.7 563.0Z" fill="#0087ff"/><path d="M663.5 568.1L667.9 568.7L671.4 565.2L667.0 564.6Z" fill="#008aff"/><path d="M667.9 568.7L672.2 569.1L675.7 565.8L671.4 565.2Z" fill="#0091ff"/><path d="M672.2 569.1L676.6 570.4L680.1 566.9L675.7 565.8Z" fill="#0095ff"/><path d="M676.6 570.4L681.0 572.0L684.5 568.5L680.1 566.9Z" fill="#0098ff"/><path d="M681.0 572.0L685.3 574.2L688.8 570.4L684.5 568.5Z" fill="#0097ff"/><path d="M685.3 574.2L689.7 577.0L693.2 573.3L688.8 570.4Z" fill="#0093ff"/><path d="M689.7 577.0L694.0 578.6L697.6 575.5L693.2 573.3Z" fill="#0090ff"/><path d="M694.0 578.6L698.4 580.3L701.9 577.0L697.6 575.5Z" fill="#0090ff"/><path d="M698.4 580.3L702.8 582.1L706.3 578.6L701.9 577.0Z" fill="#0091ff"/><path d="M702.8 582.1L707.1 582.9L710.6 579.4L706.3 578.6Z" fill="#0093ff"/><path d="M707.1 582.9L711.5 583.8L715.0 580.3L710.6 579.4Z" fill="#0098ff"/><path d="M711.5 583.8L715.9 584.4L719.4 580.9L715.0 580.3Z" fill="#009eff"/><path d="M715.9 584.4L724.6 587.3L728.1 583.8L719.4 580.9Z" fill="#00a3ff"/><path d="M724.6 587.3L733.3 590.1L736.8 586.6L728.1 583.8Z" fill="#00a6ff"/><path d="M733.3 590.1L742.0 593.2L745.5 589.7L736.8 586.6Z" fill="#00a9ff"/><path d="M742.0 593.2L750.8 596.2L754.3 592.7L745.5 589.7Z" fill="#00acff"/><path d="M750.8 596.2L759.5 599.7L763.0 596.2L754.3 592.7Z" fill="#00adff"/><path d="M759.5 599.7L763.8 601.5L767.4 598.0L763.0 596.2Z" fill="#00adff"/><path d="M763.8 601.5L765.6 602.2L769.1 598.7L767.4 598.0Z" fill="#00adff"/><path d="M765.6 602.2L767.5 603.0L771.0 599.5L769.1 598.7Z" fill="#00adff"/><path d="M767.5 603.0L768.2 610.0L771.7 606.5L771.0 599.5Z" fill="#009bff"/><path d="M600.6 548.9L604.0 550.3L607.7 546.3L604.2 544.9Z" fill="#007aff"/><path d="M604.0 550.3L607.5 551.5L611.2 547.7L607.7 546.3Z" fill="#007aff"/><path d="M607.5 551.5L609.3 551.8L612.9 548.0L611.2 547.7Z" fill="#007cff"/><path d="M609.3 551.8L611.0 551.1L614.6 547.3L612.9 548.0Z" fill="#0081ff"/><path d="M611.0 551.1L612.7 551.4L616.4 547.1L614.6 547.3Z" fill="#0086ff"/><path d="M612.7 551.4L614.4 552.7L618.1 548.5L616.4 547.1Z" fill="#0086ff"/><path d="M614.4 552.7L616.2 554.8L619.9 550.3L618.1 548.5Z" fill="#0081ff"/><path d="M616.2 554.8L618.0 556.6L621.7 552.1L619.9 550.3Z" fill="#007aff"/><path d="M618.0 556.6L619.7 557.8L623.4 553.3L621.7 552.1Z" fill="#0076ff"/><path d="M619.7 557.8L621.5 558.7L625.1 554.2L623.4 553.3Z" fill="#0074ff"/><path d="M621.5 558.7L623.2 559.2L626.8 554.4L625.1 554.2Z" fill="#0075ff"/><path d="M623.2 559.2L624.9 559.9L628.6 554.9L626.8 554.4Z" fill="#0076ff"/><path d="M624.9 559.9L628.4 560.2L632.1 555.2L628.6 554.9Z" fill="#0079ff"/><path d="M628.4 560.2L631.9 560.2L635.5 555.9L632.1 555.2Z" fill="#007fff"/><path d="M631.9 560.2L635.5 561.0L639.1 556.9L635.5 555.9Z" fill="#0083ff"/><path d="M635.5 561.0L638.9 562.1L642.6 557.9L639.1 556.9Z" fill="#0086ff"/><path d="M638.9 562.1L642.4 563.5L646.1 559.3L642.6 557.9Z" fill="#0087ff"/><path d="M642.4 563.5L646.8 566.0L650.4 561.7L646.1 559.3Z" fill="#0085ff"/><path d="M646.8 566.0L651.1 567.7L654.8 563.7L650.4 561.7Z" fill="#0083ff"/><path d="M651.1 567.7L655.5 569.9L659.1 566.3L654.8 563.7Z" fill="#0081ff"/><path d="M655.5 569.9L659.8 571.9L663.5 568.1L659.1 566.3Z" fill="#007eff"/><path d="M659.8 571.9L664.2 572.8L667.9 568.7L663.5 568.1Z" fill="#0081ff"/><path d="M664.2 572.8L668.6 572.9L672.2 569.1L667.9 568.7Z" fill="#0088ff"/><path d="M668.6 572.9L672.9 574.0L676.6 570.4L672.2 569.1Z" fill="#008dff"/><path d="M672.9 574.0L677.3 576.2L681.0 572.0L676.6 570.4Z" fill="#008eff"/><path d="M677.3 576.2L681.7 578.0L685.3 574.2L681.0 572.0Z" fill="#008dff"/><path d="M681.7 578.0L686.0 580.9L689.7 577.0L685.3 574.2Z" fill="#008aff"/><path d="M686.0 580.9L690.4 582.8L694.0 578.6L689.7 577.0Z" fill="#0087ff"/><path d="M690.4 582.8L694.7 584.6L698.4 580.3L694.0 578.6Z" fill="#0087ff"/><path d="M694.7 584.6L699.1 586.1L702.8 582.1L698.4 580.3Z" fill="#0087ff"/><path d="M699.1 586.1L703.5 586.8L707.1 582.9L702.8 582.1Z" fill="#008aff"/><path d="M703.5 586.8L707.8 587.8L711.5 583.8L707.1 582.9Z" fill="#008fff"/><path d="M707.8 587.8L712.2 588.5L715.9 584.4L711.5 583.8Z" fill="#0094ff"/><path d="M712.2 588.5L720.9 591.3L724.6 587.3L715.9 584.4Z" fill="#0099ff"/><path d="M720.9 591.3L729.7 594.2L733.3 590.1L724.6 587.3Z" fill="#009cff"/><path d="M729.7 594.2L738.4 597.2L742.0 593.2L733.3 590.1Z" fill="#009fff"/><path d="M738.4 597.2L747.1 600.3L750.8 596.2L742.0 593.2Z" fill="#00a2ff"/><path d="M747.1 600.3L755.8 603.8L759.5 599.7L750.8 596.2Z" fill="#00a3ff"/><path d="M755.8 603.8L760.2 605.5L763.8 601.5L759.5 599.7Z" fill="#00a3ff"/><path d="M760.2 605.5L761.9 606.2L765.6 602.2L763.8 601.5Z" fill="#00a3ff"/><path d="M761.9 606.2L763.9 607.0L767.5 603.0L765.6 602.2Z" fill="#00a3ff"/><path d="M763.9 607.0L764.6 614.0L768.2 610.0L767.5 603.0Z" fill="#0091ff"/><path d="M597.0 553.1L600.5 554.5L604.0 550.3L600.6 548.9Z" fill="#006eff"/><path d="M600.5 554.5L604.0 555.2L607.5 551.5L604.0 550.3Z" fill="#0070ff"/><path d="M604.0 555.2L605.8 555.3L609.3 551.8L607.5 551.5Z" fill="#0072ff"/><path d="M605.8 555.3L607.5 555.5L611.0 551.1L609.3 551.8Z" fill="#0076ff"/><path d="M607.5 555.5L609.2 556.2L612.7 551.4L611.0 551.1Z" fill="#0079ff"/><path d="M609.2 556.2L610.9 557.6L614.4 552.7L612.7 551.4Z" fill="#0078ff"/><path d="M610.9 557.6L612.7 559.0L616.2 554.8L614.4 552.7Z" fill="#0074ff"/><path d="M612.7 559.0L614.5 560.8L618.0 556.6L616.2 554.8Z" fill="#006eff"/><path d="M614.5 560.8L616.2 561.7L619.7 557.8L618.0 556.6Z" fill="#006aff"/><path d="M616.2 561.7L618.0 562.9L621.5 558.7L619.7 557.8Z" fill="#0068ff"/><path d="M618.0 562.9L619.7 563.6L623.2 559.2L621.5 558.7Z" fill="#0067ff"/><path d="M619.7 563.6L621.4 564.5L624.9 559.9L623.2 559.2Z" fill="#0067ff"/><path d="M621.4 564.5L624.9 565.2L628.4 560.2L624.9 559.9Z" fill="#006aff"/><path d="M624.9 565.2L628.4 565.3L631.9 560.2L628.4 560.2Z" fill="#0070ff"/><path d="M628.4 565.3L631.9 565.8L635.5 561.0L631.9 560.2Z" fill="#0075ff"/><path d="M631.9 565.8L635.4 566.8L638.9 562.1L635.5 561.0Z" fill="#0078ff"/><path d="M635.4 566.8L638.9 568.2L642.4 563.5L638.9 562.1Z" fill="#0079ff"/><path d="M638.9 568.2L643.3 570.4L646.8 566.0L642.4 563.5Z" fill="#0078ff"/><path d="M643.3 570.4L647.6 572.8L651.1 567.7L646.8 566.0Z" fill="#0075ff"/><path d="M647.6 572.8L652.0 575.0L655.5 569.9L651.1 567.7Z" fill="#0073ff"/><path d="M652.0 575.0L656.3 576.8L659.8 571.9L655.5 569.9Z" fill="#0072ff"/><path d="M656.3 576.8L660.7 577.2L664.2 572.8L659.8 571.9Z" fill="#0074ff"/><path d="M660.7 577.2L665.1 577.8L668.6 572.9L664.2 572.8Z" fill="#007bff"/><path d="M665.1 577.8L669.4 578.9L672.9 574.0L668.6 572.9Z" fill="#0081ff"/><path d="M669.4 578.9L673.8 580.9L677.3 576.2L672.9 574.0Z" fill="#0081ff"/><path d="M673.8 580.9L678.2 582.4L681.7 578.0L677.3 576.2Z" fill="#0081ff"/><path d="M678.2 582.4L682.5 584.8L686.0 580.9L681.7 578.0Z" fill="#007fff"/><path d="M682.5 584.8L686.9 587.0L690.4 582.8L686.0 580.9Z" fill="#007bff"/><path d="M686.9 587.0L691.2 588.6L694.7 584.6L690.4 582.8Z" fill="#007bff"/><path d="M691.2 588.6L695.6 590.3L699.1 586.1L694.7 584.6Z" fill="#007bff"/><path d="M695.6 590.3L700.0 590.9L703.5 586.8L699.1 586.1Z" fill="#007fff"/><path d="M700.0 590.9L704.3 592.0L707.8 587.8L703.5 586.8Z" fill="#0084ff"/><path d="M704.3 592.0L708.7 592.4L712.2 588.5L707.8 587.8Z" fill="#0089ff"/><path d="M708.7 592.4L717.4 595.3L720.9 591.3L712.2 588.5Z" fill="#008eff"/><path d="M717.4 595.3L726.1 598.1L729.7 594.2L720.9 591.3Z" fill="#0092ff"/><path d="M726.1 598.1L734.9 601.2L738.4 597.2L729.7 594.2Z" fill="#0095ff"/><path d="M734.9 601.2L743.6 604.2L747.1 600.3L738.4 597.2Z" fill="#0097ff"/><path d="M743.6 604.2L752.3 607.7L755.8 603.8L747.1 600.3Z" fill="#0098ff"/><path d="M752.3 607.7L756.7 609.5L760.2 605.5L755.8 603.8Z" fill="#0098ff"/><path d="M756.7 609.5L758.4 610.2L761.9 606.2L760.2 605.5Z" fill="#0098ff"/><path d="M758.4 610.2L760.3 611.0L763.9 607.0L761.9 606.2Z" fill="#0098ff"/><path d="M760.3 611.0L761.0 618.0L764.6 614.0L763.9 607.0Z" fill="#0086ff"/><path d="M593.4 557.2L596.9 558.6L600.5 554.5L597.0 553.1Z" fill="#0063ff"/><path d="M596.9 558.6L600.3 559.1L604.0 555.2L600.5 554.5Z" fill="#0065ff"/><path d="M600.3 559.1L602.1 559.6L605.8 555.3L604.0 555.2Z" fill="#0068ff"/><path d="M602.1 559.6L603.8 560.7L607.5 555.5L605.8 555.3Z" fill="#006aff"/><path d="M603.8 560.7L605.6 561.6L609.2 556.2L607.5 555.5Z" fill="#0069ff"/><path d="M605.6 561.6L607.3 563.2L610.9 557.6L609.2 556.2Z" fill="#0067ff"/><path d="M607.3 563.2L609.1 564.4L612.7 559.0L610.9 557.6Z" fill="#0063ff"/><path d="M609.1 564.4L610.8 565.5L614.5 560.8L612.7 559.0Z" fill="#0060ff"/><path d="M610.8 565.5L612.5 566.2L616.2 561.7L614.5 560.8Z" fill="#005dff"/><path d="M612.5 566.2L614.3 567.2L618.0 562.9L616.2 561.7Z" fill="#005cff"/><path d="M614.3 567.2L616.0 568.1L619.7 563.6L618.0 562.9Z" fill="#005bff"/><path d="M616.0 568.1L617.8 569.0L621.4 564.5L619.7 563.6Z" fill="#005aff"/><path d="M617.8 569.0L621.3 569.7L624.9 565.2L621.4 564.5Z" fill="#005bff"/><path d="M621.3 569.7L624.7 570.7L628.4 565.3L624.9 565.2Z" fill="#005fff"/><path d="M624.7 570.7L628.3 571.7L631.9 565.8L628.4 565.3Z" fill="#0063ff"/><path d="M628.3 571.7L631.8 572.6L635.4 566.8L631.9 565.8Z" fill="#0066ff"/><path d="M631.8 572.6L635.2 573.6L638.9 568.2L635.4 566.8Z" fill="#0068ff"/><path d="M635.2 573.6L639.6 575.5L643.3 570.4L638.9 568.2Z" fill="#0068ff"/><path d="M639.6 575.5L644.0 577.7L647.6 572.8L643.3 570.4Z" fill="#0066ff"/><path d="M644.0 577.7L648.3 579.9L652.0 575.0L647.6 572.8Z" fill="#0063ff"/><path d="M648.3 579.9L652.7 581.7L656.3 576.8L652.0 575.0Z" fill="#0062ff"/><path d="M652.7 581.7L657.0 582.6L660.7 577.2L656.3 576.8Z" fill="#0065ff"/><path d="M657.0 582.6L661.4 583.2L665.1 577.8L660.7 577.2Z" fill="#006bff"/><path d="M661.4 583.2L665.8 584.5L669.4 578.9L665.1 577.8Z" fill="#006fff"/><path d="M665.8 584.5L670.1 586.3L673.8 580.9L669.4 578.9Z" fill="#0070ff"/><path d="M670.1 586.3L674.5 588.0L678.2 582.4L673.8 580.9Z" fill="#0070ff"/><path d="M674.5 588.0L678.9 590.0L682.5 584.8L678.2 582.4Z" fill="#0070ff"/><path d="M678.9 590.0L683.2 591.5L686.9 587.0L682.5 584.8Z" fill="#006eff"/><path d="M683.2 591.5L687.6 593.3L691.2 588.6L686.9 587.0Z" fill="#006eff"/><path d="M687.6 593.3L691.9 594.4L695.6 590.3L691.2 588.6Z" fill="#006fff"/><path d="M691.9 594.4L696.3 595.9L700.0 590.9L695.6 590.3Z" fill="#0072ff"/><path d="M696.3 595.9L700.7 596.5L704.3 592.0L700.0 590.9Z" fill="#0076ff"/><path d="M700.7 596.5L705.0 597.6L708.7 592.4L704.3 592.0Z" fill="#007bff"/><path d="M705.0 597.6L713.8 600.4L717.4 595.3L708.7 592.4Z" fill="#0080ff"/><path d="M713.8 600.4L722.5 603.3L726.1 598.1L717.4 595.3Z" fill="#0084ff"/><path d="M722.5 603.3L731.2 606.3L734.9 601.2L726.1 598.1Z" fill="#0087ff"/><path d="M731.2 606.3L739.9 609.4L743.6 604.2L734.9 601.2Z" fill="#0089ff"/><path d="M739.9 609.4L748.7 612.9L752.3 607.7L743.6 604.2Z" fill="#008aff"/><path d="M748.7 612.9L753.0 614.7L756.7 609.5L752.3 607.7Z" fill="#008aff"/><path d="M753.0 614.7L754.8 615.4L758.4 610.2L756.7 609.5Z" fill="#008aff"/><path d="M754.8 615.4L756.7 616.1L760.3 611.0L758.4 610.2Z" fill="#008aff"/><path d="M756.7 616.1L757.4 623.2L761.0 618.0L760.3 611.0Z" fill="#0078ff"/><path d="M589.9 561.8L593.4 563.0L596.9 558.6L593.4 557.2Z" fill="#0056ff"/><path d="M593.4 563.0L596.8 563.9L600.3 559.1L596.9 558.6Z" fill="#0059ff"/><path d="M596.8 563.9L598.6 564.2L602.1 559.6L600.3 559.1Z" fill="#005bff"/><path d="M598.6 564.2L600.3 565.5L603.8 560.7L602.1 559.6Z" fill="#005bff"/><path d="M600.3 565.5L602.1 566.5L605.6 561.6L603.8 560.7Z" fill="#0059ff"/><path d="M602.1 566.5L603.8 568.1L607.3 563.2L605.6 561.6Z" fill="#0056ff"/><path d="M603.8 568.1L605.5 569.2L609.1 564.4L607.3 563.2Z" fill="#0052ff"/><path d="M605.5 569.2L607.3 570.4L610.8 565.5L609.1 564.4Z" fill="#004fff"/><path d="M607.3 570.4L609.0 570.8L612.5 566.2L610.8 565.5Z" fill="#004fff"/><path d="M609.0 570.8L610.8 572.0L614.3 567.2L612.5 566.2Z" fill="#004eff"/><path d="M610.8 572.0L612.5 572.7L616.0 568.1L614.3 567.2Z" fill="#004dff"/><path d="M612.5 572.7L614.3 573.6L617.8 569.0L616.0 568.1Z" fill="#004cff"/><path d="M614.3 573.6L617.7 574.6L621.3 569.7L617.8 569.0Z" fill="#004dff"/><path d="M617.7 574.6L621.2 575.5L624.7 570.7L621.3 569.7Z" fill="#004fff"/><path d="M621.2 575.5L624.8 576.5L628.3 571.7L624.7 570.7Z" fill="#0052ff"/><path d="M624.8 576.5L628.3 577.5L631.8 572.6L628.3 571.7Z" fill="#0054ff"/><path d="M628.3 577.5L631.7 578.4L635.2 573.6L631.8 572.6Z" fill="#0057ff"/><path d="M631.7 578.4L636.1 580.4L639.6 575.5L635.2 573.6Z" fill="#0057ff"/><path d="M636.1 580.4L640.4 582.6L644.0 577.7L639.6 575.5Z" fill="#0056ff"/><path d="M640.4 582.6L644.8 584.8L648.3 579.9L644.0 577.7Z" fill="#0053ff"/><path d="M644.8 584.8L649.2 587.0L652.7 581.7L648.3 579.9Z" fill="#0051ff"/><path d="M649.2 587.0L653.5 588.3L657.0 582.6L652.7 581.7Z" fill="#0052ff"/><path d="M653.5 588.3L657.9 588.9L661.4 583.2L657.0 582.6Z" fill="#0057ff"/><path d="M657.9 588.9L662.3 589.8L665.8 584.5L661.4 583.2Z" fill="#005cff"/><path d="M662.3 589.8L666.6 591.6L670.1 586.3L665.8 584.5Z" fill="#005eff"/><path d="M666.6 591.6L671.0 592.9L674.5 588.0L670.1 586.3Z" fill="#005fff"/><path d="M671.0 592.9L675.4 594.6L678.9 590.0L674.5 588.0Z" fill="#005fff"/><path d="M675.4 594.6L679.7 595.9L683.2 591.5L678.9 590.0Z" fill="#0060ff"/><path d="M679.7 595.9L684.1 597.7L687.6 593.3L683.2 591.5Z" fill="#0060ff"/><path d="M684.1 597.7L688.4 599.0L691.9 594.4L687.6 593.3Z" fill="#0062ff"/><path d="M688.4 599.0L692.8 600.1L696.3 595.9L691.9 594.4Z" fill="#0065ff"/><path d="M692.8 600.1L697.2 601.4L700.7 596.5L696.3 595.9Z" fill="#0068ff"/><path d="M697.2 601.4L701.5 602.2L705.0 597.6L700.7 596.5Z" fill="#006cff"/><path d="M701.5 602.2L710.3 605.1L713.8 600.4L705.0 597.6Z" fill="#0070ff"/><path d="M710.3 605.1L719.0 607.9L722.5 603.3L713.8 600.4Z" fill="#0074ff"/><path d="M719.0 607.9L727.7 611.0L731.2 606.3L722.5 603.3Z" fill="#0077ff"/><path d="M727.7 611.0L736.4 614.0L739.9 609.4L731.2 606.3Z" fill="#0079ff"/><path d="M736.4 614.0L745.2 617.5L748.7 612.9L739.9 609.4Z" fill="#007aff"/><path d="M745.2 617.5L749.5 619.3L753.0 614.7L748.7 612.9Z" fill="#007aff"/><path d="M749.5 619.3L751.3 620.0L754.8 615.4L753.0 614.7Z" fill="#007aff"/><path d="M751.3 620.0L753.2 620.8L756.7 616.1L754.8 615.4Z" fill="#007aff"/><path d="M753.2 620.8L753.9 627.8L757.4 623.2L756.7 616.1Z" fill="#0068ff"/><path d="M586.5 565.7L590.0 567.1L593.4 563.0L589.9 561.8Z" fill="#004aff"/><path d="M590.0 567.1L593.5 568.9L596.8 563.9L593.4 563.0Z" fill="#004aff"/><path d="M593.5 568.9L595.2 569.9L598.6 564.2L596.8 563.9Z" fill="#004aff"/><path d="M595.2 569.9L596.9 570.8L600.3 565.5L598.6 564.2Z" fill="#0049ff"/><path d="M596.9 570.8L598.7 572.4L602.1 566.5L600.3 565.5Z" fill="#0047ff"/><path d="M598.7 572.4L600.4 573.7L603.8 568.1L602.1 566.5Z" fill="#0043ff"/><path d="M600.4 573.7L602.2 574.9L605.5 569.2L603.8 568.1Z" fill="#0040ff"/><path d="M602.2 574.9L604.0 575.8L607.3 570.4L605.5 569.2Z" fill="#003eff"/><path d="M604.0 575.8L605.7 576.3L609.0 570.8L607.3 570.4Z" fill="#003dff"/><path d="M605.7 576.3L607.4 576.8L610.8 572.0L609.0 570.8Z" fill="#003eff"/><path d="M607.4 576.8L609.1 577.2L612.5 572.7L610.8 572.0Z" fill="#003eff"/><path d="M609.1 577.2L610.9 578.0L614.3 573.6L612.5 572.7Z" fill="#003eff"/><path d="M610.9 578.0L614.4 578.9L617.7 574.6L614.3 573.6Z" fill="#003eff"/><path d="M614.4 578.9L617.9 579.9L621.2 575.5L617.7 574.6Z" fill="#0041ff"/><path d="M617.9 579.9L621.4 581.5L624.8 576.5L621.2 575.5Z" fill="#0042ff"/><path d="M621.4 581.5L624.9 582.9L628.3 577.5L624.8 576.5Z" fill="#0043ff"/><path d="M624.9 582.9L628.4 584.3L631.7 578.4L628.3 577.5Z" fill="#0045ff"/><path d="M628.4 584.3L632.7 586.5L636.1 580.4L631.7 578.4Z" fill="#0044ff"/><path d="M632.7 586.5L637.1 588.5L640.4 582.6L636.1 580.4Z" fill="#0042ff"/><path d="M637.1 588.5L641.4 590.5L644.8 584.8L640.4 582.6Z" fill="#0041ff"/><path d="M641.4 590.5L645.8 592.0L649.2 587.0L644.8 584.8Z" fill="#003fff"/><path d="M645.8 592.0L650.2 593.3L653.5 588.3L649.2 587.0Z" fill="#0040ff"/><path d="M650.2 593.3L654.5 593.9L657.9 588.9L653.5 588.3Z" fill="#0045ff"/><path d="M654.5 593.9L658.9 595.3L662.3 589.8L657.9 588.9Z" fill="#0049ff"/><path d="M658.9 595.3L663.3 596.6L666.6 591.6L662.3 589.8Z" fill="#004cff"/><path d="M663.3 596.6L667.6 597.4L671.0 592.9L666.6 591.6Z" fill="#004eff"/><path d="M667.6 597.4L672.0 598.7L675.4 594.6L671.0 592.9Z" fill="#0051ff"/><path d="M672.0 598.7L676.3 600.7L679.7 595.9L675.4 594.6Z" fill="#0052ff"/><path d="M676.3 600.7L680.7 602.5L684.1 597.7L679.7 595.9Z" fill="#0052ff"/><path d="M680.7 602.5L685.1 604.0L688.4 599.0L684.1 597.7Z" fill="#0053ff"/><path d="M685.1 604.0L689.4 605.1L692.8 600.1L688.4 599.0Z" fill="#0056ff"/><path d="M689.4 605.1L693.8 606.2L697.2 601.4L692.8 600.1Z" fill="#0059ff"/><path d="M693.8 606.2L698.2 607.2L701.5 602.2L697.2 601.4Z" fill="#005cff"/><path d="M698.2 607.2L706.9 610.1L710.3 605.1L701.5 602.2Z" fill="#0060ff"/><path d="M706.9 610.1L715.6 612.9L719.0 607.9L710.3 605.1Z" fill="#0064ff"/><path d="M715.6 612.9L724.3 616.0L727.7 611.0L719.0 607.9Z" fill="#0067ff"/><path d="M724.3 616.0L733.1 619.0L736.4 614.0L727.7 611.0Z" fill="#006aff"/><path d="M733.1 619.0L741.8 622.5L745.2 617.5L736.4 614.0Z" fill="#006bff"/><path d="M741.8 622.5L746.2 624.3L749.5 619.3L745.2 617.5Z" fill="#006bff"/><path d="M746.2 624.3L747.9 625.0L751.3 620.0L749.5 619.3Z" fill="#006bff"/><path d="M747.9 625.0L749.8 625.8L753.2 620.8L751.3 620.0Z" fill="#006bff"/><path d="M749.8 625.8L750.5 632.8L753.9 627.8L753.2 620.8Z" fill="#0059ff"/><path d="M582.9 570.8L586.3 572.2L590.0 567.1L586.5 565.7Z" fill="#003bff"/><path d="M586.3 572.2L589.8 574.5L593.5 568.9L590.0 567.1Z" fill="#003aff"/><path d="M589.8 574.5L591.6 575.3L595.2 569.9L593.5 568.9Z" fill="#0037ff"/><path d="M591.6 575.3L593.3 576.4L596.9 570.8L595.2 569.9Z" fill="#0036ff"/><path d="M593.3 576.4L595.1 578.2L598.7 572.4L596.9 570.8Z" fill="#0033ff"/><path d="M595.1 578.2L596.7 579.8L600.4 573.7L598.7 572.4Z" fill="#002eff"/><path d="M596.7 579.8L598.5 581.6L602.2 574.9L600.4 573.7Z" fill="#002aff"/><path d="M598.5 581.6L600.3 582.4L604.0 575.8L602.2 574.9Z" fill="#0027ff"/><path d="M600.3 582.4L602.0 582.4L605.7 576.3L604.0 575.8Z" fill="#0028ff"/><path d="M602.0 582.4L603.8 582.4L607.4 576.8L605.7 576.3Z" fill="#002aff"/><path d="M603.8 582.4L605.5 582.2L609.1 577.2L607.4 576.8Z" fill="#002dff"/><path d="M605.5 582.2L607.3 582.2L610.9 578.0L609.1 577.2Z" fill="#0030ff"/><path d="M607.3 582.2L610.7 582.5L614.4 578.9L610.9 578.0Z" fill="#0033ff"/><path d="M610.7 582.5L614.2 583.5L617.9 579.9L614.4 578.9Z" fill="#0036ff"/><path d="M614.2 583.5L617.8 584.9L621.4 581.5L617.9 579.9Z" fill="#0037ff"/><path d="M617.8 584.9L621.2 586.7L624.9 582.9L621.4 581.5Z" fill="#0036ff"/><path d="M621.2 586.7L624.7 588.8L628.4 584.3L624.9 582.9Z" fill="#0034ff"/><path d="M624.7 588.8L629.1 591.5L632.7 586.5L628.4 584.3Z" fill="#0032ff"/><path d="M629.1 591.5L633.4 593.7L637.1 588.5L632.7 586.5Z" fill="#002fff"/><path d="M633.4 593.7L637.8 595.4L641.4 590.5L637.1 588.5Z" fill="#002eff"/><path d="M637.8 595.4L642.2 596.5L645.8 592.0L641.4 590.5Z" fill="#002fff"/><path d="M642.2 596.5L646.5 597.1L650.2 593.3L645.8 592.0Z" fill="#0032ff"/><path d="M646.5 597.1L650.9 597.5L654.5 593.9L650.2 593.3Z" fill="#0037ff"/><path d="M650.9 597.5L655.2 599.1L658.9 595.3L654.5 593.9Z" fill="#003cff"/><path d="M655.2 599.1L659.6 600.6L663.3 596.6L658.9 595.3Z" fill="#003eff"/><path d="M659.6 600.6L664.0 602.1L667.6 597.4L663.3 596.6Z" fill="#0040ff"/><path d="M664.0 602.1L668.3 604.3L672.0 598.7L667.6 597.4Z" fill="#0041ff"/><path d="M668.3 604.3L672.7 606.3L676.3 600.7L672.0 598.7Z" fill="#0041ff"/><path d="M672.7 606.3L677.1 608.1L680.7 602.5L676.3 600.7Z" fill="#0040ff"/><path d="M677.1 608.1L681.4 609.2L685.1 604.0L680.7 602.5Z" fill="#0041ff"/><path d="M681.4 609.2L685.8 610.5L689.4 605.1L685.1 604.0Z" fill="#0044ff"/><path d="M685.8 610.5L690.1 612.0L693.8 606.2L689.4 605.1Z" fill="#0047ff"/><path d="M690.1 612.0L694.5 612.9L698.2 607.2L693.8 606.2Z" fill="#004aff"/><path d="M694.5 612.9L703.2 615.7L706.9 610.1L698.2 607.2Z" fill="#004eff"/><path d="M703.2 615.7L712.0 618.5L715.6 612.9L706.9 610.1Z" fill="#0052ff"/><path d="M712.0 618.5L720.7 621.6L724.3 616.0L715.6 612.9Z" fill="#0055ff"/><path d="M720.7 621.6L729.4 624.6L733.1 619.0L724.3 616.0Z" fill="#0057ff"/><path d="M729.4 624.6L738.1 628.2L741.8 622.5L733.1 619.0Z" fill="#0059ff"/><path d="M738.1 628.2L742.5 629.9L746.2 624.3L741.8 622.5Z" fill="#0059ff"/><path d="M742.5 629.9L744.2 630.6L747.9 625.0L746.2 624.3Z" fill="#0059ff"/><path d="M744.2 630.6L746.2 631.4L749.8 625.8L747.9 625.0Z" fill="#0059ff"/><path d="M746.2 631.4L746.9 638.4L750.5 632.8L749.8 625.8Z" fill="#0046ff"/><path d="M579.3 573.9L582.8 575.3L586.3 572.2L582.9 570.8Z" fill="#0030ff"/><path d="M582.8 575.3L586.3 578.3L589.8 574.5L586.3 572.2Z" fill="#002dff"/><path d="M586.3 578.3L588.1 579.2L591.6 575.3L589.8 574.5Z" fill="#0029ff"/><path d="M588.1 579.2L589.8 580.8L593.3 576.4L591.6 575.3Z" fill="#0027ff"/><path d="M589.8 580.8L591.5 582.6L595.1 578.2L593.3 576.4Z" fill="#0022ff"/><path d="M591.5 582.6L593.2 584.2L596.7 579.8L595.1 578.2Z" fill="#001dff"/><path d="M593.2 584.2L595.0 585.4L598.5 581.6L596.7 579.8Z" fill="#0018ff"/><path d="M595.0 585.4L596.8 585.4L600.3 582.4L598.5 581.6Z" fill="#0017ff"/><path d="M596.8 585.4L598.5 585.4L602.0 582.4L600.3 582.4Z" fill="#0019ff"/><path d="M598.5 585.4L600.3 585.5L603.8 582.4L602.0 582.4Z" fill="#001dff"/><path d="M600.3 585.5L602.0 585.2L605.5 582.2L603.8 582.4Z" fill="#0021ff"/><path d="M602.0 585.2L603.7 585.3L607.3 582.2L605.5 582.2Z" fill="#0026ff"/><path d="M603.7 585.3L607.2 585.6L610.7 582.5L607.3 582.2Z" fill="#002aff"/><path d="M607.2 585.6L610.7 586.5L614.2 583.5L610.7 582.5Z" fill="#002fff"/><path d="M610.7 586.5L614.3 588.8L617.8 584.9L614.2 583.5Z" fill="#002fff"/><path d="M614.3 588.8L617.7 592.3L621.2 586.7L617.8 584.9Z" fill="#002aff"/><path d="M617.7 592.3L621.2 594.6L624.7 588.8L621.2 586.7Z" fill="#0025ff"/><path d="M621.2 594.6L625.6 596.8L629.1 591.5L624.7 588.8Z" fill="#0021ff"/><path d="M625.6 596.8L629.9 599.4L633.4 593.7L629.1 591.5Z" fill="#001dff"/><path d="M629.9 599.4L634.3 601.6L637.8 595.4L633.4 593.7Z" fill="#001bff"/><path d="M634.3 601.6L638.6 603.4L642.2 596.5L637.8 595.4Z" fill="#001bff"/><path d="M638.6 603.4L643.0 603.6L646.5 597.1L642.2 596.5Z" fill="#0020ff"/><path d="M643.0 603.6L647.4 602.6L650.9 597.5L646.5 597.1Z" fill="#0029ff"/><path d="M647.4 602.6L651.7 603.9L655.2 599.1L650.9 597.5Z" fill="#002fff"/><path d="M651.7 603.9L656.1 606.1L659.6 600.6L655.2 599.1Z" fill="#0030ff"/><path d="M656.1 606.1L660.5 607.9L664.0 602.1L659.6 600.6Z" fill="#0030ff"/><path d="M660.5 607.9L664.8 610.5L668.3 604.3L664.0 602.1Z" fill="#002eff"/><path d="M664.8 610.5L669.2 612.3L672.7 606.3L668.3 604.3Z" fill="#002cff"/><path d="M669.2 612.3L673.5 613.4L677.1 608.1L672.7 606.3Z" fill="#002dff"/><path d="M673.5 613.4L677.9 614.2L681.4 609.2L677.1 608.1Z" fill="#0030ff"/><path d="M677.9 614.2L682.3 615.5L685.8 610.5L681.4 609.2Z" fill="#0033ff"/><path d="M682.3 615.5L686.6 617.3L690.1 612.0L685.8 610.5Z" fill="#0034ff"/><path d="M686.6 617.3L691.0 618.8L694.5 612.9L690.1 612.0Z" fill="#0036ff"/><path d="M691.0 618.8L699.7 621.7L703.2 615.7L694.5 612.9Z" fill="#003aff"/><path d="M699.7 621.7L708.4 624.5L712.0 618.5L703.2 615.7Z" fill="#003dff"/><path d="M708.4 624.5L717.2 627.6L720.7 621.6L712.0 618.5Z" fill="#0040ff"/><path d="M717.2 627.6L725.9 630.6L729.4 624.6L720.7 621.6Z" fill="#0043ff"/><path d="M725.9 630.6L734.6 634.1L738.1 628.2L729.4 624.6Z" fill="#0044ff"/><path d="M734.6 634.1L739.0 635.9L742.5 629.9L738.1 628.2Z" fill="#0044ff"/><path d="M739.0 635.9L740.7 636.6L744.2 630.6L742.5 629.9Z" fill="#0044ff"/><path d="M740.7 636.6L742.7 637.4L746.2 631.4L744.2 630.6Z" fill="#0044ff"/><path d="M742.7 637.4L743.3 644.4L746.9 638.4L746.2 631.4Z" fill="#0032ff"/><path d="M575.7 577.3L579.2 578.7L582.8 575.3L579.3 573.9Z" fill="#0029ff"/><path d="M579.2 578.7L582.6 581.6L586.3 578.3L582.8 575.3Z" fill="#0025ff"/><path d="M582.6 581.6L584.4 583.0L588.1 579.2L586.3 578.3Z" fill="#0020ff"/><path d="M584.4 583.0L586.1 584.4L589.8 580.8L588.1 579.2Z" fill="#001cff"/><path d="M586.1 584.4L587.9 586.0L591.5 582.6L589.8 580.8Z" fill="#0017ff"/><path d="M587.9 586.0L589.6 587.6L593.2 584.2L591.5 582.6Z" fill="#0012ff"/><path d="M589.6 587.6L591.4 588.7L595.0 585.4L593.2 584.2Z" fill="#000fff"/><path d="M591.4 588.7L593.1 588.8L596.8 585.4L595.0 585.4Z" fill="#000fff"/><path d="M593.1 588.8L594.8 588.8L598.5 585.4L596.8 585.4Z" fill="#0013ff"/><path d="M594.8 588.8L596.6 588.8L600.3 585.5L598.5 585.4Z" fill="#0016ff"/><path d="M596.6 588.8L598.3 588.6L602.0 585.2L600.3 585.5Z" fill="#001bff"/><path d="M598.3 588.6L600.1 588.4L603.7 585.3L602.0 585.2Z" fill="#001fff"/><path d="M600.1 588.4L603.6 588.9L607.2 585.6L603.7 585.3Z" fill="#0024ff"/><path d="M603.6 588.9L607.0 590.8L610.7 586.5L607.2 585.6Z" fill="#0027ff"/><path d="M607.0 590.8L610.6 593.3L614.3 588.8L610.7 586.5Z" fill="#0024ff"/><path d="M610.6 593.3L614.1 596.5L617.7 592.3L614.3 588.8Z" fill="#001cff"/><path d="M614.1 596.5L617.5 598.6L621.2 594.6L617.7 592.3Z" fill="#0015ff"/><path d="M617.5 598.6L621.9 601.0L625.6 596.8L621.2 594.6Z" fill="#0011ff"/><path d="M621.9 601.0L626.3 603.5L629.9 599.4L625.6 596.8Z" fill="#000eff"/><path d="M626.3 603.5L630.6 605.4L634.3 601.6L629.9 599.4Z" fill="#000bff"/><path d="M630.6 605.4L635.0 607.0L638.6 603.4L634.3 601.6Z" fill="#000aff"/><path d="M635.0 607.0L639.4 607.4L643.0 603.6L638.6 603.4Z" fill="#000eff"/><path d="M639.4 607.4L643.7 607.1L647.4 602.6L643.0 603.6Z" fill="#0019ff"/><path d="M643.7 607.1L648.1 608.0L651.7 603.9L647.4 602.6Z" fill="#0021ff"/><path d="M648.1 608.0L652.4 609.5L656.1 606.1L651.7 603.9Z" fill="#0022ff"/><path d="M652.4 609.5L656.8 611.0L660.5 607.9L656.1 606.1Z" fill="#0022ff"/><path d="M656.8 611.0L661.2 613.5L664.8 610.5L660.5 607.9Z" fill="#0020ff"/><path d="M661.2 613.5L665.5 615.4L669.2 612.3L664.8 610.5Z" fill="#001eff"/><path d="M665.5 615.4L669.9 616.5L673.5 613.4L669.2 612.3Z" fill="#0020ff"/><path d="M669.9 616.5L674.3 617.2L677.9 614.2L673.5 613.4Z" fill="#0024ff"/><path d="M674.3 617.2L678.6 618.5L682.3 615.5L677.9 614.2Z" fill="#0028ff"/><path d="M678.6 618.5L683.0 620.2L686.6 617.3L682.3 615.5Z" fill="#0029ff"/><path d="M683.0 620.2L687.3 622.0L691.0 618.8L686.6 617.3Z" fill="#002aff"/><path d="M687.3 622.0L696.1 624.8L699.7 621.7L691.0 618.8Z" fill="#002cff"/><path d="M696.1 624.8L704.8 627.6L708.4 624.5L699.7 621.7Z" fill="#002fff"/><path d="M704.8 627.6L713.5 630.7L717.2 627.6L708.4 624.5Z" fill="#0032ff"/><path d="M713.5 630.7L722.2 633.8L725.9 630.6L717.2 627.6Z" fill="#0035ff"/><path d="M722.2 633.8L731.0 637.3L734.6 634.1L725.9 630.6Z" fill="#0036ff"/><path d="M731.0 637.3L735.3 639.0L739.0 635.9L734.6 634.1Z" fill="#0036ff"/><path d="M735.3 639.0L737.1 639.7L740.7 636.6L739.0 635.9Z" fill="#0036ff"/><path d="M737.1 639.7L739.0 640.5L742.7 637.4L740.7 636.6Z" fill="#0036ff"/><path d="M739.0 640.5L739.7 647.5L743.3 644.4L742.7 637.4Z" fill="#0024ff"/><path d="M572.2 580.1L575.7 581.5L579.2 578.7L575.7 577.3Z" fill="#0023ff"/><path d="M575.7 581.5L579.1 584.5L582.6 581.6L579.2 578.7Z" fill="#001fff"/><path d="M579.1 584.5L580.9 585.9L584.4 583.0L582.6 581.6Z" fill="#0019ff"/><path d="M580.9 585.9L582.6 587.2L586.1 584.4L584.4 583.0Z" fill="#0015ff"/><path d="M582.6 587.2L584.4 588.8L587.9 586.0L586.1 584.4Z" fill="#0011ff"/><path d="M584.4 588.8L586.1 590.6L589.6 587.6L587.9 586.0Z" fill="#000cff"/><path d="M586.1 590.6L587.9 591.6L591.4 588.7L589.6 587.6Z" fill="#0008ff"/><path d="M587.9 591.6L589.6 591.6L593.1 588.8L591.4 588.7Z" fill="#0009ff"/><path d="M589.6 591.6L591.3 591.6L594.8 588.8L593.1 588.8Z" fill="#000dff"/><path d="M591.3 591.6L593.1 591.7L596.6 588.8L594.8 588.8Z" fill="#0010ff"/><path d="M593.1 591.7L594.8 591.7L598.3 588.6L596.6 588.8Z" fill="#0014ff"/><path d="M594.8 591.7L596.6 591.9L600.1 588.4L598.3 588.6Z" fill="#0018ff"/><path d="M596.6 591.9L600.1 593.3L603.6 588.9L600.1 588.4Z" fill="#001bff"/><path d="M600.1 593.3L603.5 595.6L607.0 590.8L603.6 588.9Z" fill="#001bff"/><path d="M603.5 595.6L607.1 597.7L610.6 593.3L607.0 590.8Z" fill="#0016ff"/><path d="M607.1 597.7L610.6 599.6L614.1 596.5L610.6 593.3Z" fill="#0011ff"/><path d="M610.6 599.6L614.0 601.2L617.5 598.6L614.1 596.5Z" fill="#000dff"/><path d="M614.0 601.2L618.4 603.2L621.9 601.0L617.5 598.6Z" fill="#000aff"/><path d="M618.4 603.2L622.8 605.4L626.3 603.5L621.9 601.0Z" fill="#0008ff"/><path d="M622.8 605.4L627.1 607.6L630.6 605.4L626.3 603.5Z" fill="#0005ff"/><path d="M627.1 607.6L631.5 608.9L635.0 607.0L630.6 605.4Z" fill="#0005ff"/><path d="M631.5 608.9L635.8 609.3L639.4 607.4L635.0 607.0Z" fill="#000aff"/><path d="M635.8 609.3L640.2 609.1L643.7 607.1L639.4 607.4Z" fill="#0013ff"/><path d="M640.2 609.1L644.6 610.1L648.1 608.0L643.7 607.1Z" fill="#001aff"/><path d="M644.6 610.1L648.9 611.4L652.4 609.5L648.1 608.0Z" fill="#001dff"/><path d="M648.9 611.4L653.3 613.4L656.8 611.0L652.4 609.5Z" fill="#001eff"/><path d="M653.3 613.4L657.7 615.6L661.2 613.5L656.8 611.0Z" fill="#001dff"/><path d="M657.7 615.6L662.0 617.6L665.5 615.4L661.2 613.5Z" fill="#001bff"/><path d="M662.0 617.6L666.4 618.7L669.9 616.5L665.5 615.4Z" fill="#001cff"/><path d="M666.4 618.7L670.7 619.5L674.3 617.2L669.9 616.5Z" fill="#0020ff"/><path d="M670.7 619.5L675.1 620.8L678.6 618.5L674.3 617.2Z" fill="#0024ff"/><path d="M675.1 620.8L679.5 622.4L683.0 620.2L678.6 618.5Z" fill="#0026ff"/><path d="M679.5 622.4L683.8 624.1L687.3 622.0L683.0 620.2Z" fill="#0026ff"/><path d="M683.8 624.1L692.6 627.0L696.1 624.8L687.3 622.0Z" fill="#0028ff"/><path d="M692.6 627.0L701.3 629.8L704.8 627.6L696.1 624.8Z" fill="#002cff"/><path d="M701.3 629.8L710.0 632.9L713.5 630.7L704.8 627.6Z" fill="#002fff"/><path d="M710.0 632.9L718.7 635.9L722.2 633.8L713.5 630.7Z" fill="#0031ff"/><path d="M718.7 635.9L727.5 639.4L731.0 637.3L722.2 633.8Z" fill="#0032ff"/><path d="M727.5 639.4L731.8 641.2L735.3 639.0L731.0 637.3Z" fill="#0032ff"/><path d="M731.8 641.2L733.6 641.9L737.1 639.7L735.3 639.0Z" fill="#0032ff"/><path d="M733.6 641.9L735.5 642.7L739.0 640.5L737.1 639.7Z" fill="#0032ff"/><path d="M735.5 642.7L736.2 649.7L739.7 647.5L739.0 640.5Z" fill="#0020ff"/><path d="M568.5 582.1L572.0 583.5L575.7 581.5L572.2 580.1Z" fill="#0021ff"/><path d="M572.0 583.5L575.5 586.5L579.1 584.5L575.7 581.5Z" fill="#001dff"/><path d="M575.5 586.5L577.3 587.9L580.9 585.9L579.1 584.5Z" fill="#0016ff"/><path d="M577.3 587.9L578.9 589.2L582.6 587.2L580.9 585.9Z" fill="#0013ff"/><path d="M578.9 589.2L580.7 590.9L584.4 588.8L582.6 587.2Z" fill="#000fff"/><path d="M580.7 590.9L582.4 592.7L586.1 590.6L584.4 588.8Z" fill="#0009ff"/><path d="M582.4 592.7L584.2 593.6L587.9 591.6L586.1 590.6Z" fill="#0005ff"/><path d="M584.2 593.6L586.0 593.6L589.6 591.6L587.9 591.6Z" fill="#0007ff"/><path d="M586.0 593.6L587.7 593.6L591.3 591.6L589.6 591.6Z" fill="#000aff"/><path d="M587.7 593.6L589.5 593.7L593.1 591.7L591.3 591.6Z" fill="#000eff"/><path d="M589.5 593.7L591.1 593.7L594.8 591.7L593.1 591.7Z" fill="#0012ff"/><path d="M591.1 593.7L592.9 594.0L596.6 591.9L594.8 591.7Z" fill="#0015ff"/><path d="M592.9 594.0L596.4 595.4L600.1 593.3L596.6 591.9Z" fill="#0016ff"/><path d="M596.4 595.4L599.9 597.7L603.5 595.6L600.1 593.3Z" fill="#0013ff"/><path d="M599.9 597.7L603.4 599.8L607.1 597.7L603.5 595.6Z" fill="#000fff"/><path d="M603.4 599.8L606.9 601.6L610.6 599.6L607.1 597.7Z" fill="#000cff"/><path d="M606.9 601.6L610.4 603.2L614.0 601.2L610.6 599.6Z" fill="#000aff"/><path d="M610.4 603.2L614.7 605.2L618.4 603.2L614.0 601.2Z" fill="#0009ff"/><path d="M614.7 605.2L619.1 607.4L622.8 605.4L618.4 603.2Z" fill="#0007ff"/><path d="M619.1 607.4L623.5 609.6L627.1 607.6L622.8 605.4Z" fill="#0005ff"/><path d="M623.5 609.6L627.8 610.9L631.5 608.9L627.1 607.6Z" fill="#0005ff"/><path d="M627.8 610.9L632.2 611.3L635.8 609.3L631.5 608.9Z" fill="#000aff"/><path d="M632.2 611.3L636.6 611.1L640.2 609.1L635.8 609.3Z" fill="#0013ff"/><path d="M636.6 611.1L640.9 612.2L644.6 610.1L640.2 609.1Z" fill="#001aff"/><path d="M640.9 612.2L645.3 613.5L648.9 611.4L644.6 610.1Z" fill="#001dff"/><path d="M645.3 613.5L649.6 615.4L653.3 613.4L648.9 611.4Z" fill="#001eff"/><path d="M649.6 615.4L654.0 617.6L657.7 615.6L653.3 613.4Z" fill="#001cff"/><path d="M654.0 617.6L658.4 619.6L662.0 617.6L657.7 615.6Z" fill="#001aff"/><path d="M658.4 619.6L662.7 620.7L666.4 618.7L662.0 617.6Z" fill="#001bff"/><path d="M662.7 620.7L667.1 621.6L670.7 619.5L666.4 618.7Z" fill="#0020ff"/><path d="M667.1 621.6L671.5 622.9L675.1 620.8L670.7 619.5Z" fill="#0023ff"/><path d="M671.5 622.9L675.8 624.4L679.5 622.4L675.1 620.8Z" fill="#0025ff"/><path d="M675.8 624.4L680.2 626.2L683.8 624.1L679.5 622.4Z" fill="#0026ff"/><path d="M680.2 626.2L688.9 629.0L692.6 627.0L683.8 624.1Z" fill="#0027ff"/><path d="M688.9 629.0L697.6 631.8L701.3 629.8L692.6 627.0Z" fill="#002bff"/><path d="M697.6 631.8L706.4 634.9L710.0 632.9L701.3 629.8Z" fill="#002eff"/><path d="M706.4 634.9L715.1 638.0L718.7 635.9L710.0 632.9Z" fill="#0031ff"/><path d="M715.1 638.0L723.8 641.5L727.5 639.4L718.7 635.9Z" fill="#0032ff"/><path d="M723.8 641.5L728.2 643.2L731.8 641.2L727.5 639.4Z" fill="#0032ff"/><path d="M728.2 643.2L729.9 643.9L733.6 641.9L731.8 641.2Z" fill="#0032ff"/><path d="M729.9 643.9L731.8 644.7L735.5 642.7L733.6 641.9Z" fill="#0032ff"/><path d="M731.8 644.7L732.5 651.7L736.2 649.7L735.5 642.7Z" fill="#0020ff"/><path d="M565.2 584.0L568.6 585.4L572.0 583.5L568.5 582.1Z" fill="#0021ff"/><path d="M568.6 585.4L572.1 588.3L575.5 586.5L572.0 583.5Z" fill="#001dff"/><path d="M572.1 588.3L573.9 589.7L577.3 587.9L575.5 586.5Z" fill="#0016ff"/><path d="M573.9 589.7L575.6 591.1L578.9 589.2L577.3 587.9Z" fill="#0013ff"/><path d="M575.6 591.1L577.4 592.7L580.7 590.9L578.9 589.2Z" fill="#000fff"/><path d="M577.4 592.7L579.1 594.5L582.4 592.7L580.7 590.9Z" fill="#0009ff"/><path d="M579.1 594.5L580.8 595.5L584.2 593.6L582.4 592.7Z" fill="#0005ff"/><path d="M580.8 595.5L582.6 595.5L586.0 593.6L584.2 593.6Z" fill="#0007ff"/><path d="M582.6 595.5L584.3 595.5L587.7 593.6L586.0 593.6Z" fill="#000aff"/><path d="M584.3 595.5L586.1 595.5L589.5 593.7L587.7 593.6Z" fill="#000eff"/><path d="M586.1 595.5L587.8 595.6L591.1 593.7L589.5 593.7Z" fill="#0012ff"/><path d="M587.8 595.6L589.6 595.8L592.9 594.0L591.1 593.7Z" fill="#0015ff"/><path d="M589.6 595.8L593.0 597.2L596.4 595.4L592.9 594.0Z" fill="#0016ff"/><path d="M593.0 597.2L596.5 599.5L599.9 597.7L596.4 595.4Z" fill="#0013ff"/><path d="M596.5 599.5L600.1 601.6L603.4 599.8L599.9 597.7Z" fill="#000fff"/><path d="M600.1 601.6L603.5 603.7L606.9 601.6L603.4 599.8Z" fill="#000cff"/><path d="M603.5 603.7L607.0 605.3L610.4 603.2L606.9 601.6Z" fill="#000aff"/><path d="M607.0 605.3L611.4 607.5L614.7 605.2L610.4 603.2Z" fill="#0008ff"/><path d="M611.4 607.5L615.7 609.7L619.1 607.4L614.7 605.2Z" fill="#0006ff"/><path d="M615.7 609.7L620.1 611.7L623.5 609.6L619.1 607.4Z" fill="#0004ff"/><path d="M620.1 611.7L624.5 613.0L627.8 610.9L623.5 609.6Z" fill="#0004ff"/><path d="M624.5 613.0L628.8 613.6L632.2 611.3L627.8 610.9Z" fill="#0009ff"/><path d="M628.8 613.6L633.2 613.6L636.6 611.1L632.2 611.3Z" fill="#0011ff"/><path d="M633.2 613.6L637.5 614.7L640.9 612.2L636.6 611.1Z" fill="#0018ff"/><path d="M637.5 614.7L641.9 616.0L645.3 613.5L640.9 612.2Z" fill="#001bff"/><path d="M641.9 616.0L646.3 617.7L649.6 615.4L645.3 613.5Z" fill="#001cff"/><path d="M646.3 617.7L650.6 619.9L654.0 617.6L649.6 615.4Z" fill="#001bff"/><path d="M650.6 619.9L655.0 621.9L658.4 619.6L654.0 617.6Z" fill="#0019ff"/><path d="M655.0 621.9L659.4 623.0L662.7 620.7L658.4 619.6Z" fill="#001aff"/><path d="M659.4 623.0L663.7 623.6L667.1 621.6L662.7 620.7Z" fill="#001fff"/><path d="M663.7 623.6L668.1 624.9L671.5 622.9L667.1 621.6Z" fill="#0023ff"/><path d="M668.1 624.9L672.5 626.5L675.8 624.4L671.5 622.9Z" fill="#0024ff"/><path d="M672.5 626.5L676.8 628.2L680.2 626.2L675.8 624.4Z" fill="#0025ff"/><path d="M676.8 628.2L685.5 631.1L688.9 629.0L680.2 626.2Z" fill="#0027ff"/><path d="M685.5 631.1L694.3 633.9L697.6 631.8L688.9 629.0Z" fill="#002aff"/><path d="M694.3 633.9L703.0 637.0L706.4 634.9L697.6 631.8Z" fill="#002dff"/><path d="M703.0 637.0L711.7 640.0L715.1 638.0L706.4 634.9Z" fill="#0030ff"/><path d="M711.7 640.0L720.4 643.5L723.8 641.5L715.1 638.0Z" fill="#0031ff"/><path d="M720.4 643.5L724.8 645.3L728.2 643.2L723.8 641.5Z" fill="#0031ff"/><path d="M724.8 645.3L726.5 646.0L729.9 643.9L728.2 643.2Z" fill="#0031ff"/><path d="M726.5 646.0L728.5 646.8L731.8 644.7L729.9 643.9Z" fill="#0031ff"/><path d="M728.5 646.8L729.2 653.8L732.5 651.7L731.8 644.7Z" fill="#001fff"/><path d="M561.7 585.9L565.1 587.3L568.6 585.4L565.2 584.0Z" fill="#0021ff"/><path d="M565.1 587.3L568.6 590.3L572.1 588.3L568.6 585.4Z" fill="#001dff"/><path d="M568.6 590.3L570.4 591.7L573.9 589.7L572.1 588.3Z" fill="#0016ff"/><path d="M570.4 591.7L572.1 593.0L575.6 591.1L573.9 589.7Z" fill="#0013ff"/><path d="M572.1 593.0L573.9 594.6L577.4 592.7L575.6 591.1Z" fill="#000fff"/><path d="M573.9 594.6L575.5 596.4L579.1 594.5L577.4 592.7Z" fill="#0009ff"/><path d="M575.5 596.4L577.3 597.4L580.8 595.5L579.1 594.5Z" fill="#0005ff"/><path d="M577.3 597.4L579.1 597.4L582.6 595.5L580.8 595.5Z" fill="#0007ff"/><path d="M579.1 597.4L580.8 597.4L584.3 595.5L582.6 595.5Z" fill="#000aff"/><path d="M580.8 597.4L582.6 597.5L586.1 595.5L584.3 595.5Z" fill="#000eff"/><path d="M582.6 597.5L584.3 597.5L587.8 595.6L586.1 595.5Z" fill="#0012ff"/><path d="M584.3 597.5L586.1 597.8L589.6 595.8L587.8 595.6Z" fill="#0015ff"/><path d="M586.1 597.8L589.5 599.2L593.0 597.2L589.6 595.8Z" fill="#0016ff"/><path d="M589.5 599.2L593.0 601.4L596.5 599.5L593.0 597.2Z" fill="#0013ff"/><path d="M593.0 601.4L596.6 603.6L600.1 601.6L596.5 599.5Z" fill="#000fff"/><path d="M596.6 603.6L600.0 605.6L603.5 603.7L600.1 601.6Z" fill="#000cff"/><path d="M600.0 605.6L603.5 607.2L607.0 605.3L603.5 603.7Z" fill="#0009ff"/><path d="M603.5 607.2L607.9 609.5L611.4 607.5L607.0 605.3Z" fill="#0007ff"/><path d="M607.9 609.5L612.2 611.7L615.7 609.7L611.4 607.5Z" fill="#0005ff"/><path d="M612.2 611.7L616.6 613.6L620.1 611.7L615.7 609.7Z" fill="#0003ff"/><path d="M616.6 613.6L621.0 614.9L624.5 613.0L620.1 611.7Z" fill="#0004ff"/><path d="M621.0 614.9L625.3 615.6L628.8 613.6L624.5 613.0Z" fill="#0008ff"/><path d="M625.3 615.6L629.7 615.5L633.2 613.6L628.8 613.6Z" fill="#0010ff"/><path d="M629.7 615.5L634.0 616.6L637.5 614.7L633.2 613.6Z" fill="#0016ff"/><path d="M634.0 616.6L638.4 617.9L641.9 616.0L637.5 614.7Z" fill="#0019ff"/><path d="M638.4 617.9L642.8 619.7L646.3 617.7L641.9 616.0Z" fill="#001bff"/><path d="M642.8 619.7L647.1 621.9L650.6 619.9L646.3 617.7Z" fill="#0019ff"/><path d="M647.1 621.9L651.5 623.9L655.0 621.9L650.6 619.9Z" fill="#0018ff"/><path d="M651.5 623.9L655.9 624.9L659.4 623.0L655.0 621.9Z" fill="#0019ff"/><path d="M655.9 624.9L660.2 625.6L663.7 623.6L659.4 623.0Z" fill="#001eff"/><path d="M660.2 625.6L664.6 626.9L668.1 624.9L663.7 623.6Z" fill="#0022ff"/><path d="M664.6 626.9L668.9 628.4L672.5 626.5L668.1 624.9Z" fill="#0024ff"/><path d="M668.9 628.4L673.3 630.2L676.8 628.2L672.5 626.5Z" fill="#0024ff"/><path d="M673.3 630.2L682.0 633.0L685.5 631.1L676.8 628.2Z" fill="#0026ff"/><path d="M682.0 633.0L690.8 635.8L694.3 633.9L685.5 631.1Z" fill="#002aff"/><path d="M690.8 635.8L699.5 638.9L703.0 637.0L694.3 633.9Z" fill="#002dff"/><path d="M699.5 638.9L708.2 642.0L711.7 640.0L703.0 637.0Z" fill="#002fff"/><path d="M708.2 642.0L716.9 645.5L720.4 643.5L711.7 640.0Z" fill="#0031ff"/><path d="M716.9 645.5L721.3 647.2L724.8 645.3L720.4 643.5Z" fill="#0031ff"/><path d="M721.3 647.2L723.0 647.9L726.5 646.0L724.8 645.3Z" fill="#0031ff"/><path d="M723.0 647.9L725.0 648.7L728.5 646.8L726.5 646.0Z" fill="#0031ff"/><path d="M725.0 648.7L725.7 655.7L729.2 653.8L728.5 646.8Z" fill="#001eff"/><path d="M558.0 587.9L561.5 589.3L565.1 587.3L561.7 585.9Z" fill="#0021ff"/><path d="M561.5 589.3L564.9 592.3L568.6 590.3L565.1 587.3Z" fill="#001dff"/><path d="M564.9 592.3L566.7 593.7L570.4 591.7L568.6 590.3Z" fill="#0016ff"/><path d="M566.7 593.7L568.4 595.0L572.1 593.0L570.4 591.7Z" fill="#0013ff"/><path d="M568.4 595.0L570.2 596.7L573.9 594.6L572.1 593.0Z" fill="#000fff"/><path d="M570.2 596.7L571.9 598.5L575.5 596.4L573.9 594.6Z" fill="#0009ff"/><path d="M571.9 598.5L573.7 599.4L577.3 597.4L575.5 596.4Z" fill="#0005ff"/><path d="M573.7 599.4L575.5 599.4L579.1 597.4L577.3 597.4Z" fill="#0007ff"/><path d="M575.5 599.4L577.1 599.5L580.8 597.4L579.1 597.4Z" fill="#000aff"/><path d="M577.1 599.5L578.9 599.5L582.6 597.5L580.8 597.4Z" fill="#000eff"/><path d="M578.9 599.5L580.6 599.5L584.3 597.5L582.6 597.5Z" fill="#0012ff"/><path d="M580.6 599.5L582.4 599.8L586.1 597.8L584.3 597.5Z" fill="#0015ff"/><path d="M582.4 599.8L585.9 601.2L589.5 599.2L586.1 597.8Z" fill="#0016ff"/><path d="M585.9 601.2L589.3 603.5L593.0 601.4L589.5 599.2Z" fill="#0013ff"/><path d="M589.3 603.5L592.9 605.6L596.6 603.6L593.0 601.4Z" fill="#000fff"/><path d="M592.9 605.6L596.4 607.6L600.0 605.6L596.6 603.6Z" fill="#000cff"/><path d="M596.4 607.6L599.8 609.7L603.5 607.2L600.0 605.6Z" fill="#0008ff"/><path d="M599.8 609.7L604.2 612.1L607.9 609.5L603.5 607.2Z" fill="#0006ff"/><path d="M604.2 612.1L608.6 614.1L612.2 611.7L607.9 609.5Z" fill="#0003ff"/><path d="M608.6 614.1L612.9 616.1L616.6 613.6L612.2 611.7Z" fill="#0002ff"/><path d="M612.9 616.1L617.3 617.4L621.0 614.9L616.6 613.6Z" fill="#0002ff"/><path d="M617.3 617.4L621.7 618.0L625.3 615.6L621.0 614.9Z" fill="#0007ff"/><path d="M621.7 618.0L626.0 618.9L629.7 615.5L625.3 615.6Z" fill="#000dff"/><path d="M626.0 618.9L630.4 619.8L634.0 616.6L629.7 615.5Z" fill="#0013ff"/><path d="M630.4 619.8L634.7 621.3L638.4 617.9L634.0 616.6Z" fill="#0016ff"/><path d="M634.7 621.3L639.1 623.0L642.8 619.7L638.4 617.9Z" fill="#0017ff"/><path d="M639.1 623.0L643.5 624.8L647.1 621.9L642.8 619.7Z" fill="#0016ff"/><path d="M643.5 624.8L647.8 626.6L651.5 623.9L647.1 621.9Z" fill="#0016ff"/><path d="M647.8 626.6L652.2 627.6L655.9 624.9L651.5 623.9Z" fill="#0017ff"/><path d="M652.2 627.6L656.6 628.7L660.2 625.6L655.9 624.9Z" fill="#001bff"/><path d="M656.6 628.7L660.9 629.4L664.6 626.9L660.2 625.6Z" fill="#0020ff"/><path d="M660.9 629.4L665.3 630.9L668.9 628.4L664.6 626.9Z" fill="#0023ff"/><path d="M665.3 630.9L669.6 632.6L673.3 630.2L668.9 628.4Z" fill="#0023ff"/><path d="M669.6 632.6L678.4 635.5L682.0 633.0L673.3 630.2Z" fill="#0025ff"/><path d="M678.4 635.5L687.1 638.3L690.8 635.8L682.0 633.0Z" fill="#0029ff"/><path d="M687.1 638.3L695.8 641.4L699.5 638.9L690.8 635.8Z" fill="#002cff"/><path d="M695.8 641.4L704.5 644.4L708.2 642.0L699.5 638.9Z" fill="#002eff"/><path d="M704.5 644.4L713.3 647.9L716.9 645.5L708.2 642.0Z" fill="#002fff"/><path d="M713.3 647.9L717.6 649.7L721.3 647.2L716.9 645.5Z" fill="#002fff"/><path d="M717.6 649.7L719.4 650.4L723.0 647.9L721.3 647.2Z" fill="#002fff"/><path d="M719.4 650.4L721.3 651.2L725.0 648.7L723.0 647.9Z" fill="#002fff"/><path d="M721.3 651.2L722.0 658.2L725.7 655.7L725.0 648.7Z" fill="#001dff"/></g><g font-family="Liberation Sans, sans-serif" font-size="7px"><text x="554.0" y="560.7" fill="#2020ff" text-anchor="end">318.20</text><text x="865.5" y="549.7" fill="#2020ff">318.20</text><text x="554.0" y="522.9" fill="#2020ff" text-anchor="end">486.40</text><text x="865.5" y="511.9" fill="#2020ff">486.40</text><text x="554.0" y="485.1" fill="#2020ff" text-anchor="end">654.60</text><text x="865.5" y="474.1" fill="#2020ff">654.60</text><text x="554.0" y="447.3" fill="#2020ff" text-anchor="end">822.80</text><text x="865.5" y="436.3" fill="#2020ff">822.80</text><text x="554.0" y="409.5" fill="#2020ff" text-anchor="end">991.00</text><text x="865.5" y="398.5" fill="#2020ff">991.00</text><text x="555.2" y="599.5" fill="#111" text-anchor="end" font-size="7.3px">602</text><text x="572.7" y="606.5" fill="#111" text-anchor="end" font-size="7.3px">1602</text><text x="590.1" y="613.5" fill="#111" text-anchor="end" font-size="7.3px">2602</text><text x="610.1" y="621.6" fill="#111" text-anchor="end" font-size="7.3px">3750</text><text x="627.6" y="628.6" fill="#111" text-anchor="end" font-size="7.3px">4750</text><text x="645.0" y="635.7" fill="#111" text-anchor="end" font-size="7.3px">5750</text><text x="662.5" y="642.7" fill="#111" text-anchor="end" font-size="7.3px">6750</text><text x="684.3" y="651.5" fill="#111" text-anchor="end" font-size="7.3px">8000</text><text x="701.7" y="658.5" fill="#111" text-anchor="end" font-size="7.3px">9000</text><text x="724.0" y="665.5" fill="#ff2020">186.00</text><text x="741.7" y="655.7" fill="#ff2020">307.00</text><text x="759.4" y="646.0" fill="#ff2020">428.00</text><text x="777.1" y="636.2" fill="#ff2020">549.00</text><text x="795.1" y="626.3" fill="#ff2020">672.00</text><text x="812.8" y="616.5" fill="#ff2020">793.00</text><text x="830.6" y="606.7" fill="#ff2020">915.00</text><text x="848.9" y="596.6" fill="#ff2020">1040.00</text><text x="610" y="657" fill="#444" font-size="7.5px">RPM</text><text x="806" y="649" fill="#ff1010" font-size="7.5px" font-weight="bold">mbar</text></g></svg>
<svg class="a" style="left:0;top:0;pointer-events:none" width="1445" height="690"><g fill="#000" opacity="0.3"><path fill-rule="evenodd" d="M82 412 H106 Q114 412 114 420 V499 Q114 507.5 106 507.5 H82 Q74 507.5 74 499 V420 Q74 412 82 412Z M88.5 428 V492 H100.5 V428Z"/><path d="M136.0 421.0L154.5 425.0L150.5 429.0L150.5 496.5L173.0 494.5L170.5 507.5L135.5 507.5L137.5 501.5L137.5 427.0Z"/><path fill-rule="evenodd" d="M190 429 L200 433 H222 Q232 433 232 443 V497 Q232 507.5 222 507.5 H190 L192 501 V438Z M208 446 V494 H217 V446Z"/><path d="M266 436 H290 L295 438 V456 H282 V450 H269 V464 L291 466 Q295 467 295 471 V499 Q295 507.5 287 507.5 H262 L256 505 V484 H269 V493 H282 V479 L260 477 Q256 476 256 472 V445 Q256 436 266 436Z"/><path d="M310 434 L330 438 V464 L344 436 H362 L344 470 L362 507.5 H344 L330 478 V507.5 H310 L312 501 V442Z"/><path d="M379 430 L398 434 V493 H408 V436 L425 432 L423 440 V499 Q423 507.5 414 507.5 H390 Q381 507.5 381 499 V438Z"/><path d="M442.5 424.0L462.0 428.0L458.0 432.0L458.0 495.5L482.0 493.5L479.5 507.5L442.0 507.5L444.0 501.5L444.0 430.0Z"/><path d="M500.5 413.0L518.6 417.0L514.6 421.0L514.6 495.0L536.5 493.0L534.0 507.5L500.0 507.5L502.0 501.5L502.0 419.0Z"/><text x="140" y="562" font-family="Liberation Sans, sans-serif" font-weight="bold" font-size="36px" stroke="#000" stroke-width="2.2">T</text><text x="199" y="562" font-family="Liberation Sans, sans-serif" font-weight="bold" font-size="36px" stroke="#000" stroke-width="2.2">U</text><text x="265" y="562" font-family="Liberation Sans, sans-serif" font-weight="bold" font-size="36px" stroke="#000" stroke-width="2.2">N</text><text x="331" y="562" font-family="Liberation Sans, sans-serif" font-weight="bold" font-size="36px" stroke="#000" stroke-width="2.2">I</text><text x="379" y="562" font-family="Liberation Sans, sans-serif" font-weight="bold" font-size="36px" stroke="#000" stroke-width="2.2">N</text><text x="443" y="562" font-family="Liberation Sans, sans-serif" font-weight="bold" font-size="36px" stroke="#000" stroke-width="2.2">G</text><path d="M193.0 350.0L196.8 360.7L208.2 361.1L199.2 368.0L202.4 378.9L193.0 372.5L183.6 378.9L186.8 368.0L177.8 361.1L189.2 360.7Z"/><path d="M419.0 350.0L422.8 360.7L434.2 361.1L425.2 368.0L428.4 378.9L419.0 372.5L409.6 378.9L412.8 368.0L403.8 361.1L415.2 360.7Z"/><path fill-rule="evenodd" d="M212.1 261.9L207.4 264.6L202.9 267.4L198.6 270.5L194.6 273.7L190.7 277.2L187.0 280.8L183.5 284.6L180.2 288.6L177.1 292.8L174.2 297.2L171.5 301.8L169.0 306.5L174.8 312.1L177.7 307.7L180.8 303.5L183.9 299.4L187.2 295.4L190.6 291.5L194.2 287.7L197.8 284.1L201.6 280.5L205.5 277.1L209.5 273.8L213.6 270.6L217.9 267.5Z"/><path fill-rule="evenodd" d="M220.0 269.6L241.6 290.4L241.8 300.3L208.4 334.9L198.5 335.0L177.0 314.2Z M213.2 306.1L211.5 307.3L209.4 307.8L207.3 307.4L205.5 306.3L204.2 304.5L203.8 302.4L204.2 300.3L205.3 298.5L207.1 297.3L209.2 296.8L211.3 297.2L213.1 298.3L214.3 300.1L214.8 302.2L214.4 304.3Z"/><path fill-rule="evenodd" d="M225.8 304.2L337.8 375.5L329.2 389.0L217.7 316.9Z"/><path fill-rule="evenodd" d="M447.0 311.5L444.5 306.8L441.8 302.2L438.9 297.8L435.8 293.6L432.5 289.6L429.0 285.8L425.3 282.2L421.4 278.7L417.4 275.5L413.1 272.4L408.6 269.6L403.9 266.9L398.1 272.5L402.4 275.6L406.5 278.8L410.5 282.1L414.4 285.5L418.2 289.1L421.8 292.7L425.4 296.5L428.8 300.4L432.1 304.4L435.2 308.5L438.3 312.7L441.2 317.1Z"/><path fill-rule="evenodd" d="M439.0 319.2L417.5 340.0L407.6 339.9L374.2 305.3L374.4 295.4L396.0 274.6Z M402.8 311.1L401.6 309.3L401.2 307.2L401.7 305.1L402.9 303.3L404.7 302.2L406.8 301.8L408.9 302.3L410.7 303.5L411.8 305.3L412.2 307.4L411.8 309.5L410.5 311.3L408.7 312.4L406.6 312.8L404.5 312.3Z"/><path fill-rule="evenodd" d="M397.9 321.7L287.0 389.3L278.7 375.6L390.1 308.8Z"/><path fill-rule="evenodd" d="M343.6 388.7m-19.6 0a19.6 19.6 0 1 0 39.2 0a19.6 19.6 0 1 0 -39.2 0Zm9 0a10.6 10.6 0 1 1 21.2 0a10.6 10.6 0 1 1 -21.2 0Z"/><path fill-rule="evenodd" d="M272.6 388.7m-19.6 0a19.6 19.6 0 1 0 39.2 0a19.6 19.6 0 1 0 -39.2 0Zm9 0a10.6 10.6 0 1 1 21.2 0a10.6 10.6 0 1 1 -21.2 0Z"/><path d="M223 213 C217 150 252 113 306 114 C358 115 396 152 391 213" fill="none" stroke="#000" stroke-width="8"/><path d="M222 165 L256 161 L267 181 L281 166 L296 207" fill="none" stroke="#000" stroke-width="8"/><path d="M234 219 L272 221 L291 232 L294 247 L281 250 L260 247 L246 237Z"/><path d="M374 219 L344 221 L319 236 L320 249 L356 249 L370 235Z"/><path d="M293 296 L307 249 L321 296 L307 286Z"/><path d="M274 300 L291 313 L297 327 L307 318 L317 327 L325 313 L340 300 L330 305 L317 311 L307 306 L297 311 L284 305Z"/></g></svg>
</body></html>
